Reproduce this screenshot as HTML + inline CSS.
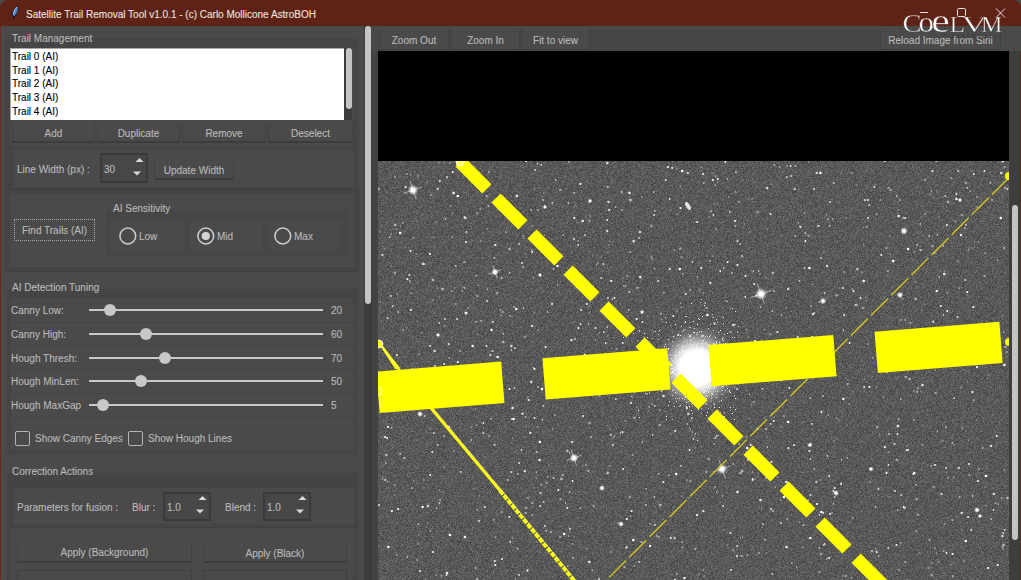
<!DOCTYPE html>
<html><head><meta charset="utf-8">
<style>
*{margin:0;padding:0;box-sizing:border-box}
html,body{width:1021px;height:580px;overflow:hidden;background:#4a4a4a}
body{position:relative;font-family:"Liberation Sans",sans-serif;font-size:11px;color:#bfbfbf}
.a{position:absolute}
.t{position:absolute;white-space:nowrap;line-height:13px;font-size:10px;color:#bababa;-webkit-text-stroke:0.1px currentColor}
</style></head><body>
<div class="a" style="left:0px;top:0px;width:1021px;height:26px;background:#5e2217;border-radius:8px 8px 0 0"></div><div class="t" style="left:26px;top:7.5px;color:#eee2df">Satellite Trail Removal Tool v1.0.1 - (c) Carlo Mollicone AstroBOH</div><svg class="a" style="left:10px;top:5px" width="10" height="15" viewBox="0 0 10 15"><path d="M7.6 0.8 C8.8 3 8.2 7 6 10.2 L4.3 12.2 C2.8 12.3 1.9 11 2.1 8.8 C2.5 6 4.8 2.8 7.6 0.8Z" fill="#1a1a2a"/><path d="M7.4 1.3 C8.2 3.5 7.5 6.8 5.6 9.6 L4.2 11.2 C3.2 11.2 2.7 10.2 2.9 8.6 C3.3 6 5 3.2 7.4 1.3Z" fill="#4f86d8"/><path d="M6.8 2.2 C5.5 3.5 4 5.8 3.4 8.5" stroke="#a8d0f8" stroke-width="1" fill="none"/><path d="M4.3 11.5 L3.2 14.3" stroke="#101018" stroke-width="1.1"/></svg><div class="a" style="left:0px;top:26px;width:1px;height:554px;background:#6b2a20"></div><div class="a" style="left:1019px;top:26px;width:2px;height:25px;background:#4a4a4a"></div><div class="a" style="left:1020px;top:51px;width:1px;height:529px;background:#5b2a22"></div><div class="a" style="left:1px;top:26px;width:363px;height:554px;background:#4a4a4a"></div><div class="a" style="left:364px;top:26px;width:9px;height:554px;background:#3c3c3c"></div><div class="a" style="left:365px;top:26px;width:6px;height:278px;background:#c4c4c4;border-radius:3px"></div><div class="a" style="left:371px;top:26px;width:7px;height:25px;background:#484848"></div><div class="a" style="left:372px;top:51px;width:6px;height:529px;background:#434343"></div><div class="a" style="left:5px;top:38px;width:353px;height:152px;background:repeating-conic-gradient(#3f3f3f 0 25%,#4b4b4b 0 50%) 0 0/2px 2px"></div><div class="a" style="left:10px;top:48px;width:343px;height:137px;background:#4a4a4a"></div><div class="t" style="left:12px;top:31.5px;">Trail Management</div><div class="a" style="left:10px;top:48px;width:335px;height:72px;background:#fff;border-top:1px solid #a8a8a8;border-left:1px solid #a8a8a8"></div><div class="a" style="left:344px;top:48px;width:8px;height:72px;background:#3c3c3c"></div><div class="a" style="left:346px;top:48px;width:6px;height:61px;background:#c4c4c4;border-radius:3px"></div><div class="t" style="left:12px;top:50.0px;color:#000">Trail 0 (AI)</div><div class="t" style="left:12px;top:63.7px;color:#000">Trail 1 (AI)</div><div class="t" style="left:12px;top:77.4px;color:#000">Trail 2 (AI)</div><div class="t" style="left:12px;top:91.1px;color:#000">Trail 3 (AI)</div><div class="t" style="left:12px;top:104.8px;color:#000">Trail 4 (AI)</div><div class="a" style="left:12px;top:123px;width:83px;height:20px;border:1px solid #424242;border-top:0;border-bottom:2px solid #3c3c3c;background:#4a4a4a"></div><div class="t" style="left:12px;top:127px;width:83px;text-align:center;">Add</div><div class="a" style="left:97px;top:123px;width:83px;height:20px;border:1px solid #424242;border-top:0;border-bottom:2px solid #3c3c3c;background:#4a4a4a"></div><div class="t" style="left:97px;top:127px;width:83px;text-align:center;">Duplicate</div><div class="a" style="left:182px;top:123px;width:84px;height:20px;border:1px solid #424242;border-top:0;border-bottom:2px solid #3c3c3c;background:#4a4a4a"></div><div class="t" style="left:182px;top:127px;width:84px;text-align:center;">Remove</div><div class="a" style="left:268px;top:123px;width:85px;height:20px;border:1px solid #424242;border-top:0;border-bottom:2px solid #3c3c3c;background:#4a4a4a"></div><div class="t" style="left:268px;top:127px;width:85px;text-align:center;">Deselect</div><div class="a" style="left:11px;top:147px;width:346px;height:43px;background:repeating-conic-gradient(#3f3f3f 0 25%,#4b4b4b 0 50%) 0 0/2px 2px;box-shadow:0 0 0 1px #404040"></div><div class="a" style="left:14px;top:150px;width:340px;height:37px;background:#4a4a4a"></div><div class="t" style="left:17px;top:163px;">Line Width (px) :</div><div class="a" style="left:100px;top:153px;width:48px;height:30px;border:2px solid #3a3a3a;background:#474747"></div><div class="t" style="left:104px;top:163px;">30</div><svg class="a" style="left:130px;top:156px" width="16" height="22"><path d="M5.5 6 L9.5 2 L13.5 6Z" fill="#d8d8d8"/><path d="M3 15.5 L7 19.5 L11 15.5Z" fill="#d8d8d8"/></svg><div class="a" style="left:154px;top:160px;width:80px;height:20px;border:1px solid #424242;border-top:0;border-bottom:2px solid #3c3c3c;background:#4a4a4a"></div><div class="t" style="left:154px;top:164px;width:80px;text-align:center;">Update Width</div><div class="a" style="left:6px;top:190px;width:352px;height:81px;background:repeating-conic-gradient(#3f3f3f 0 25%,#4b4b4b 0 50%) 0 0/2px 2px;box-shadow:0 0 0 1px #404040"></div><div class="a" style="left:10px;top:194px;width:344px;height:73px;background:#4a4a4a"></div><div class="a" style="left:14px;top:219px;width:81px;height:22px;border:1px dotted #a8a8a8"></div><div class="t" style="left:14px;top:224px;width:81px;text-align:center;">Find Trails (AI)</div><div class="a" style="left:106px;top:210px;width:241px;height:47px;background:#464646"></div><div class="a" style="left:111px;top:221px;width:73px;height:29px;background:#4a4a4a"></div><div class="a" style="left:190px;top:221px;width:72px;height:29px;background:#4a4a4a"></div><div class="a" style="left:268px;top:221px;width:73px;height:29px;background:#4a4a4a"></div><div class="t" style="left:113px;top:202px;">AI Sensitivity</div><svg class="a" style="left:117.5px;top:227px" width="19" height="19"><circle cx="9.8" cy="9" r="7.9" fill="none" stroke="#cfcfcf" stroke-width="1.5"/></svg><div class="t" style="left:139px;top:230px;">Low</div><svg class="a" style="left:195.5px;top:227px" width="19" height="19"><circle cx="9.8" cy="9" r="7.9" fill="none" stroke="#cfcfcf" stroke-width="1.5"/><circle cx="9.8" cy="9" r="4.1" fill="#d4d4d4"/></svg><div class="t" style="left:217px;top:230px;">Mid</div><svg class="a" style="left:272.5px;top:227px" width="19" height="19"><circle cx="9.8" cy="9" r="7.9" fill="none" stroke="#cfcfcf" stroke-width="1.5"/></svg><div class="t" style="left:294px;top:230px;">Max</div><div class="a" style="left:6px;top:289px;width:352px;height:166px;background:repeating-conic-gradient(#3f3f3f 0 25%,#4b4b4b 0 50%) 0 0/2px 2px"></div><div class="a" style="left:11px;top:298px;width:342px;height:152px;background:#4a4a4a"></div><div class="t" style="left:12px;top:281px;">AI Detection Tuning</div><div class="t" style="left:11px;top:304.0px;">Canny Low:</div><div class="a" style="left:89px;top:309px;width:234px;height:2px;background:#c8c8c8"></div><div class="a" style="left:104px;top:304.0px;width:12px;height:12px;border-radius:6px;background:#c8c8c8"></div><div class="t" style="left:331px;top:304.0px;">20</div><div class="t" style="left:11px;top:327.8px;">Canny High:</div><div class="a" style="left:89px;top:333px;width:234px;height:2px;background:#c8c8c8"></div><div class="a" style="left:140px;top:327.8px;width:12px;height:12px;border-radius:6px;background:#c8c8c8"></div><div class="t" style="left:331px;top:327.8px;">60</div><div class="t" style="left:11px;top:351.6px;">Hough Thresh:</div><div class="a" style="left:89px;top:357px;width:234px;height:2px;background:#c8c8c8"></div><div class="a" style="left:159px;top:351.6px;width:12px;height:12px;border-radius:6px;background:#c8c8c8"></div><div class="t" style="left:331px;top:351.6px;">70</div><div class="t" style="left:11px;top:375.4px;">Hough MinLen:</div><div class="a" style="left:89px;top:380px;width:234px;height:2px;background:#c8c8c8"></div><div class="a" style="left:135px;top:375.4px;width:12px;height:12px;border-radius:6px;background:#c8c8c8"></div><div class="t" style="left:331px;top:375.4px;">50</div><div class="t" style="left:11px;top:399.2px;">Hough MaxGap</div><div class="a" style="left:89px;top:404px;width:234px;height:2px;background:#c8c8c8"></div><div class="a" style="left:97px;top:399.2px;width:12px;height:12px;border-radius:6px;background:#c8c8c8"></div><div class="t" style="left:331px;top:399.2px;">5</div><div class="a" style="left:11px;top:322px;width:342px;height:1px;background:#444444"></div><div class="a" style="left:11px;top:345px;width:342px;height:1px;background:#444444"></div><div class="a" style="left:11px;top:369px;width:342px;height:1px;background:#444444"></div><div class="a" style="left:11px;top:393px;width:342px;height:1px;background:#444444"></div><div class="a" style="left:11px;top:417px;width:342px;height:1px;background:#444444"></div><div class="a" style="left:15px;top:431px;width:15px;height:15px;border:1.5px solid #b4b4b4;border-radius:2px"></div><div class="t" style="left:35px;top:432px;">Show Canny Edges</div><div class="a" style="left:128px;top:431px;width:15px;height:15px;border:1.5px solid #b4b4b4;border-radius:2px"></div><div class="t" style="left:148px;top:432px;">Show Hough Lines</div><div class="a" style="left:6px;top:473px;width:352px;height:120px;background:repeating-conic-gradient(#3f3f3f 0 25%,#4b4b4b 0 50%) 0 0/2px 2px"></div><div class="a" style="left:11px;top:484px;width:342px;height:104px;background:#4a4a4a"></div><div class="t" style="left:12px;top:465px;">Correction Actions</div><div class="a" style="left:11px;top:485px;width:346px;height:42px;background:repeating-conic-gradient(#3f3f3f 0 25%,#4b4b4b 0 50%) 0 0/2px 2px;box-shadow:0 0 0 1px #404040"></div><div class="a" style="left:14px;top:488px;width:340px;height:36px;background:#4a4a4a"></div><div class="t" style="left:17px;top:501px;">Parameters for fusion :</div><div class="t" style="left:132px;top:501px;">Blur :</div><div class="a" style="left:163px;top:492px;width:48px;height:29px;border:2px solid #3a3a3a;background:#474747"></div><div class="t" style="left:167px;top:501px;">1.0</div><svg class="a" style="left:193px;top:494px" width="16" height="22"><path d="M5.5 6 L9.5 2 L13.5 6Z" fill="#d8d8d8"/><path d="M3 15.5 L7 19.5 L11 15.5Z" fill="#d8d8d8"/></svg><div class="t" style="left:225px;top:501px;">Blend :</div><div class="a" style="left:263px;top:492px;width:48px;height:29px;border:2px solid #3a3a3a;background:#474747"></div><div class="t" style="left:267px;top:501px;">1.0</div><svg class="a" style="left:293px;top:494px" width="16" height="22"><path d="M5.5 6 L9.5 2 L13.5 6Z" fill="#d8d8d8"/><path d="M3 15.5 L7 19.5 L11 15.5Z" fill="#d8d8d8"/></svg><div class="a" style="left:17px;top:541px;width:175px;height:22px;border:1px solid #424242;border-top:0;border-bottom:2px solid #3c3c3c;background:#4a4a4a"></div><div class="t" style="left:17px;top:546px;width:175px;text-align:center;">Apply (Background)</div><div class="a" style="left:203px;top:543px;width:144px;height:20px;border:1px solid #424242;border-top:0;border-bottom:2px solid #3c3c3c;background:#4a4a4a"></div><div class="t" style="left:203px;top:547px;width:144px;text-align:center;">Apply (Black)</div><div class="a" style="left:17px;top:570px;width:175px;height:12px;border:1px solid #3f3f3f"></div><div class="a" style="left:203px;top:570px;width:144px;height:12px;border:1px solid #3f3f3f"></div><div class="a" style="left:378px;top:26px;width:641px;height:25px;background:#4a4a4a"></div><div class="a" style="left:379px;top:29px;width:622px;height:22px;background:repeating-conic-gradient(#3f3f3f 0 25%,#4b4b4b 0 50%) 0 0/2px 2px"></div><div class="a" style="left:379px;top:29px;width:70px;height:21px;border:1px solid #424242;border-top:0;border-bottom:1px solid #404040;background:#4a4a4a"></div><div class="t" style="left:379px;top:34px;width:70px;text-align:center;">Zoom Out</div><div class="a" style="left:451px;top:29px;width:69px;height:21px;border:1px solid #424242;border-top:0;border-bottom:1px solid #404040;background:#4a4a4a"></div><div class="t" style="left:451px;top:34px;width:69px;text-align:center;">Zoom In</div><div class="a" style="left:521px;top:29px;width:69px;height:21px;border:1px solid #424242;border-top:0;border-bottom:1px solid #404040;background:#4a4a4a"></div><div class="t" style="left:521px;top:34px;width:69px;text-align:center;">Fit to view</div><div class="a" style="left:880px;top:29px;width:121px;height:21px;border:1px solid #424242;border-top:0;border-bottom:1px solid #404040;background:#4a4a4a"></div><div class="t" style="left:880px;top:34px;width:121px;text-align:center;">Reload Image from Siril</div><div class="a" style="left:378px;top:51px;width:631px;height:110px;background:#000"></div><div class="a" style="left:1009px;top:51px;width:11px;height:529px;background:#3e3e3e"></div><div class="a" style="left:1012px;top:205px;width:6px;height:335px;background:#c4c4c4;border-radius:3px"></div><svg class="a" style="left:378px;top:161px" width="631" height="419" viewBox="378 161 631 419"><defs><radialGradient id="gal" cx="0.5" cy="0.5" r="0.5"><stop offset="0" stop-color="#fff"/><stop offset="0.38" stop-color="#fff"/><stop offset="0.55" stop-color="#f0f0f0" stop-opacity="0.7"/><stop offset="0.8" stop-color="#b0b0b0" stop-opacity="0.22"/><stop offset="1" stop-color="#808080" stop-opacity="0"/></radialGradient><radialGradient id="st" cx="0.5" cy="0.5" r="0.5"><stop offset="0" stop-color="#fff"/><stop offset="0.4" stop-color="#fff" stop-opacity="0.9"/><stop offset="1" stop-color="#fff" stop-opacity="0"/></radialGradient></defs><filter id="nz" x="0" y="0" width="1" height="1" filterUnits="objectBoundingBox"><feTurbulence type="fractalNoise" baseFrequency="1.8" numOctaves="1" seed="5" result="t"/><feColorMatrix in="t" type="matrix" values="0 0 0 0 1  0 0 0 0 1  0 0 0 0 1  0.6 0 0 0 -0.2"/></filter><rect x="378" y="161" width="631" height="419" fill="#464646"/><rect x="378" y="161" width="631" height="419" fill="#fff" filter="url(#nz)"/><path fill="#fff" fill-opacity="0.9" d="M662.2 396a1.3 1.3 0 1 0 2.6 0a1.3 1.3 0 1 0 -2.6 0M809.0 538a1.3 1.3 0 1 0 2.6 0a1.3 1.3 0 1 0 -2.6 0M538.3 460a1.3 1.3 0 1 0 2.6 0a1.3 1.3 0 1 0 -2.6 0M955.2 199a1.3 1.3 0 1 0 2.6 0a1.3 1.3 0 1 0 -2.6 0M490.2 330a1.3 1.3 0 1 0 2.6 0a1.3 1.3 0 1 0 -2.6 0M785.1 482a1.3 1.3 0 1 0 2.6 0a1.3 1.3 0 1 0 -2.6 0M683.2 578a1.3 1.3 0 1 0 2.6 0a1.3 1.3 0 1 0 -2.6 0M581.4 221a1.3 1.3 0 1 0 2.6 0a1.3 1.3 0 1 0 -2.6 0M588.0 562a1.3 1.3 0 1 0 2.6 0a1.3 1.3 0 1 0 -2.6 0M959.7 235a1.3 1.3 0 1 0 2.6 0a1.3 1.3 0 1 0 -2.6 0M638.9 277a1.3 1.3 0 1 0 2.6 0a1.3 1.3 0 1 0 -2.6 0M935.5 291a1.3 1.3 0 1 0 2.6 0a1.3 1.3 0 1 0 -2.6 0M967.4 363a1.3 1.3 0 1 0 2.6 0a1.3 1.3 0 1 0 -2.6 0M663.2 386a1.3 1.3 0 1 0 2.6 0a1.3 1.3 0 1 0 -2.6 0M423.1 394a1.3 1.3 0 1 0 2.6 0a1.3 1.3 0 1 0 -2.6 0M515.6 196a1.3 1.3 0 1 0 2.6 0a1.3 1.3 0 1 0 -2.6 0M511.3 408a1.3 1.3 0 1 0 2.6 0a1.3 1.3 0 1 0 -2.6 0M445.7 573a1.3 1.3 0 1 0 2.6 0a1.3 1.3 0 1 0 -2.6 0M732.1 325a1.3 1.3 0 1 0 2.6 0a1.3 1.3 0 1 0 -2.6 0M785.2 547a1.3 1.3 0 1 0 2.6 0a1.3 1.3 0 1 0 -2.6 0M496.3 357a1.3 1.3 0 1 0 2.6 0a1.3 1.3 0 1 0 -2.6 0M421.3 507a1.3 1.3 0 1 0 2.6 0a1.3 1.3 0 1 0 -2.6 0M648.8 546a1.3 1.3 0 1 0 2.6 0a1.3 1.3 0 1 0 -2.6 0M736.2 492a1.3 1.3 0 1 0 2.6 0a1.3 1.3 0 1 0 -2.6 0M628.2 193a1.3 1.3 0 1 0 2.6 0a1.3 1.3 0 1 0 -2.6 0M943.0 274a1.3 1.3 0 1 0 2.6 0a1.3 1.3 0 1 0 -2.6 0M447.7 427a1.3 1.3 0 1 0 2.6 0a1.3 1.3 0 1 0 -2.6 0M759.2 500a1.3 1.3 0 1 0 2.6 0a1.3 1.3 0 1 0 -2.6 0M897.4 216a1.3 1.3 0 1 0 2.6 0a1.3 1.3 0 1 0 -2.6 0M514.9 309a1.3 1.3 0 1 0 2.6 0a1.3 1.3 0 1 0 -2.6 0M896.6 426a1.3 1.3 0 1 0 2.6 0a1.3 1.3 0 1 0 -2.6 0"/><path fill="#fff" fill-opacity="0.6" d="M662.4 519a0.7 0.7 0 1 0 1.4 0a0.7 0.7 0 1 0 -1.4 0M569.2 532a0.7 0.7 0 1 0 1.4 0a0.7 0.7 0 1 0 -1.4 0M496.9 209a0.7 0.7 0 1 0 1.4 0a0.7 0.7 0 1 0 -1.4 0M776.8 477a0.7 0.7 0 1 0 1.4 0a0.7 0.7 0 1 0 -1.4 0M475.0 409a0.7 0.7 0 1 0 1.4 0a0.7 0.7 0 1 0 -1.4 0M643.3 337a0.7 0.7 0 1 0 1.4 0a0.7 0.7 0 1 0 -1.4 0M838.4 288a0.7 0.7 0 1 0 1.4 0a0.7 0.7 0 1 0 -1.4 0M727.9 197a0.7 0.7 0 1 0 1.4 0a0.7 0.7 0 1 0 -1.4 0M702.8 570a0.7 0.7 0 1 0 1.4 0a0.7 0.7 0 1 0 -1.4 0M686.2 480a0.7 0.7 0 1 0 1.4 0a0.7 0.7 0 1 0 -1.4 0M379.8 302a0.7 0.7 0 1 0 1.4 0a0.7 0.7 0 1 0 -1.4 0M752.2 272a0.7 0.7 0 1 0 1.4 0a0.7 0.7 0 1 0 -1.4 0M438.9 490a0.7 0.7 0 1 0 1.4 0a0.7 0.7 0 1 0 -1.4 0M964.8 335a0.7 0.7 0 1 0 1.4 0a0.7 0.7 0 1 0 -1.4 0M954.4 221a0.7 0.7 0 1 0 1.4 0a0.7 0.7 0 1 0 -1.4 0M974.0 242a0.7 0.7 0 1 0 1.4 0a0.7 0.7 0 1 0 -1.4 0M934.8 370a0.7 0.7 0 1 0 1.4 0a0.7 0.7 0 1 0 -1.4 0M838.2 420a0.7 0.7 0 1 0 1.4 0a0.7 0.7 0 1 0 -1.4 0M473.2 489a0.7 0.7 0 1 0 1.4 0a0.7 0.7 0 1 0 -1.4 0M379.4 232a0.7 0.7 0 1 0 1.4 0a0.7 0.7 0 1 0 -1.4 0M607.3 316a0.7 0.7 0 1 0 1.4 0a0.7 0.7 0 1 0 -1.4 0M386.9 482a0.7 0.7 0 1 0 1.4 0a0.7 0.7 0 1 0 -1.4 0M533.6 189a0.7 0.7 0 1 0 1.4 0a0.7 0.7 0 1 0 -1.4 0M651.7 259a0.7 0.7 0 1 0 1.4 0a0.7 0.7 0 1 0 -1.4 0M960.5 363a0.7 0.7 0 1 0 1.4 0a0.7 0.7 0 1 0 -1.4 0M760.4 341a0.7 0.7 0 1 0 1.4 0a0.7 0.7 0 1 0 -1.4 0M588.5 313a0.7 0.7 0 1 0 1.4 0a0.7 0.7 0 1 0 -1.4 0"/><path fill="#fff" fill-opacity="0.6" d="M884.3 360a1.0 1.0 0 1 0 2.0 0a1.0 1.0 0 1 0 -2.0 0M897.7 419a1.0 1.0 0 1 0 2.0 0a1.0 1.0 0 1 0 -2.0 0M513.4 388a1.0 1.0 0 1 0 2.0 0a1.0 1.0 0 1 0 -2.0 0M590.2 437a1.0 1.0 0 1 0 2.0 0a1.0 1.0 0 1 0 -2.0 0M809.3 398a1.0 1.0 0 1 0 2.0 0a1.0 1.0 0 1 0 -2.0 0M501.7 312a1.0 1.0 0 1 0 2.0 0a1.0 1.0 0 1 0 -2.0 0M755.6 359a1.0 1.0 0 1 0 2.0 0a1.0 1.0 0 1 0 -2.0 0M702.6 183a1.0 1.0 0 1 0 2.0 0a1.0 1.0 0 1 0 -2.0 0M592.6 506a1.0 1.0 0 1 0 2.0 0a1.0 1.0 0 1 0 -2.0 0M874.6 507a1.0 1.0 0 1 0 2.0 0a1.0 1.0 0 1 0 -2.0 0M524.6 417a1.0 1.0 0 1 0 2.0 0a1.0 1.0 0 1 0 -2.0 0M739.3 244a1.0 1.0 0 1 0 2.0 0a1.0 1.0 0 1 0 -2.0 0M627.7 310a1.0 1.0 0 1 0 2.0 0a1.0 1.0 0 1 0 -2.0 0M846.7 384a1.0 1.0 0 1 0 2.0 0a1.0 1.0 0 1 0 -2.0 0M522.1 267a1.0 1.0 0 1 0 2.0 0a1.0 1.0 0 1 0 -2.0 0M571.9 558a1.0 1.0 0 1 0 2.0 0a1.0 1.0 0 1 0 -2.0 0M574.0 339a1.0 1.0 0 1 0 2.0 0a1.0 1.0 0 1 0 -2.0 0M794.5 166a1.0 1.0 0 1 0 2.0 0a1.0 1.0 0 1 0 -2.0 0M474.7 568a1.0 1.0 0 1 0 2.0 0a1.0 1.0 0 1 0 -2.0 0M942.2 246a1.0 1.0 0 1 0 2.0 0a1.0 1.0 0 1 0 -2.0 0M399.1 454a1.0 1.0 0 1 0 2.0 0a1.0 1.0 0 1 0 -2.0 0M798.4 281a1.0 1.0 0 1 0 2.0 0a1.0 1.0 0 1 0 -2.0 0M820.0 554a1.0 1.0 0 1 0 2.0 0a1.0 1.0 0 1 0 -2.0 0M822.0 396a1.0 1.0 0 1 0 2.0 0a1.0 1.0 0 1 0 -2.0 0M772.2 511a1.0 1.0 0 1 0 2.0 0a1.0 1.0 0 1 0 -2.0 0M640.5 542a1.0 1.0 0 1 0 2.0 0a1.0 1.0 0 1 0 -2.0 0M652.7 192a1.0 1.0 0 1 0 2.0 0a1.0 1.0 0 1 0 -2.0 0M495.0 373a1.0 1.0 0 1 0 2.0 0a1.0 1.0 0 1 0 -2.0 0M934.8 393a1.0 1.0 0 1 0 2.0 0a1.0 1.0 0 1 0 -2.0 0M545.6 483a1.0 1.0 0 1 0 2.0 0a1.0 1.0 0 1 0 -2.0 0M460.7 164a1.0 1.0 0 1 0 2.0 0a1.0 1.0 0 1 0 -2.0 0M771.2 574a1.0 1.0 0 1 0 2.0 0a1.0 1.0 0 1 0 -2.0 0M888.3 363a1.0 1.0 0 1 0 2.0 0a1.0 1.0 0 1 0 -2.0 0M379.3 393a1.0 1.0 0 1 0 2.0 0a1.0 1.0 0 1 0 -2.0 0M761.9 524a1.0 1.0 0 1 0 2.0 0a1.0 1.0 0 1 0 -2.0 0M729.6 332a1.0 1.0 0 1 0 2.0 0a1.0 1.0 0 1 0 -2.0 0M757.9 553a1.0 1.0 0 1 0 2.0 0a1.0 1.0 0 1 0 -2.0 0M696.7 381a1.0 1.0 0 1 0 2.0 0a1.0 1.0 0 1 0 -2.0 0M788.0 350a1.0 1.0 0 1 0 2.0 0a1.0 1.0 0 1 0 -2.0 0M1005.7 352a1.0 1.0 0 1 0 2.0 0a1.0 1.0 0 1 0 -2.0 0M769.5 347a1.0 1.0 0 1 0 2.0 0a1.0 1.0 0 1 0 -2.0 0M888.1 434a1.0 1.0 0 1 0 2.0 0a1.0 1.0 0 1 0 -2.0 0"/><path fill="#fff" fill-opacity="1.0" d="M436.8 288a0.6 0.6 0 1 0 1.2 0a0.6 0.6 0 1 0 -1.2 0M888.3 452a0.6 0.6 0 1 0 1.2 0a0.6 0.6 0 1 0 -1.2 0M996.0 328a0.6 0.6 0 1 0 1.2 0a0.6 0.6 0 1 0 -1.2 0M655.4 512a0.6 0.6 0 1 0 1.2 0a0.6 0.6 0 1 0 -1.2 0M443.6 467a0.6 0.6 0 1 0 1.2 0a0.6 0.6 0 1 0 -1.2 0M1002.3 549a0.6 0.6 0 1 0 1.2 0a0.6 0.6 0 1 0 -1.2 0M780.0 500a0.6 0.6 0 1 0 1.2 0a0.6 0.6 0 1 0 -1.2 0M535.7 478a0.6 0.6 0 1 0 1.2 0a0.6 0.6 0 1 0 -1.2 0M889.7 254a0.6 0.6 0 1 0 1.2 0a0.6 0.6 0 1 0 -1.2 0M953.0 477a0.6 0.6 0 1 0 1.2 0a0.6 0.6 0 1 0 -1.2 0M898.0 210a0.6 0.6 0 1 0 1.2 0a0.6 0.6 0 1 0 -1.2 0M612.5 438a0.6 0.6 0 1 0 1.2 0a0.6 0.6 0 1 0 -1.2 0M495.0 537a0.6 0.6 0 1 0 1.2 0a0.6 0.6 0 1 0 -1.2 0M390.5 234a0.6 0.6 0 1 0 1.2 0a0.6 0.6 0 1 0 -1.2 0M622.3 278a0.6 0.6 0 1 0 1.2 0a0.6 0.6 0 1 0 -1.2 0M634.0 566a0.6 0.6 0 1 0 1.2 0a0.6 0.6 0 1 0 -1.2 0M412.8 238a0.6 0.6 0 1 0 1.2 0a0.6 0.6 0 1 0 -1.2 0M919.2 553a0.6 0.6 0 1 0 1.2 0a0.6 0.6 0 1 0 -1.2 0M876.1 387a0.6 0.6 0 1 0 1.2 0a0.6 0.6 0 1 0 -1.2 0M747.3 337a0.6 0.6 0 1 0 1.2 0a0.6 0.6 0 1 0 -1.2 0M432.5 237a0.6 0.6 0 1 0 1.2 0a0.6 0.6 0 1 0 -1.2 0M825.7 215a0.6 0.6 0 1 0 1.2 0a0.6 0.6 0 1 0 -1.2 0M594.8 340a0.6 0.6 0 1 0 1.2 0a0.6 0.6 0 1 0 -1.2 0M603.6 386a0.6 0.6 0 1 0 1.2 0a0.6 0.6 0 1 0 -1.2 0M703.5 576a0.6 0.6 0 1 0 1.2 0a0.6 0.6 0 1 0 -1.2 0M765.6 553a0.6 0.6 0 1 0 1.2 0a0.6 0.6 0 1 0 -1.2 0M636.3 407a0.6 0.6 0 1 0 1.2 0a0.6 0.6 0 1 0 -1.2 0M657.6 399a0.6 0.6 0 1 0 1.2 0a0.6 0.6 0 1 0 -1.2 0M635.7 354a0.6 0.6 0 1 0 1.2 0a0.6 0.6 0 1 0 -1.2 0M680.0 303a0.6 0.6 0 1 0 1.2 0a0.6 0.6 0 1 0 -1.2 0M953.5 445a0.6 0.6 0 1 0 1.2 0a0.6 0.6 0 1 0 -1.2 0M727.1 545a0.6 0.6 0 1 0 1.2 0a0.6 0.6 0 1 0 -1.2 0M712.3 256a0.6 0.6 0 1 0 1.2 0a0.6 0.6 0 1 0 -1.2 0M596.1 265a0.6 0.6 0 1 0 1.2 0a0.6 0.6 0 1 0 -1.2 0M685.1 359a0.6 0.6 0 1 0 1.2 0a0.6 0.6 0 1 0 -1.2 0M997.6 504a0.6 0.6 0 1 0 1.2 0a0.6 0.6 0 1 0 -1.2 0M435.7 575a0.6 0.6 0 1 0 1.2 0a0.6 0.6 0 1 0 -1.2 0M608.4 245a0.6 0.6 0 1 0 1.2 0a0.6 0.6 0 1 0 -1.2 0M740.0 538a0.6 0.6 0 1 0 1.2 0a0.6 0.6 0 1 0 -1.2 0"/><path fill="#fff" fill-opacity="1.0" d="M996.7 565a1.1 1.1 0 1 0 2.2 0a1.1 1.1 0 1 0 -2.2 0M670.3 365a1.1 1.1 0 1 0 2.2 0a1.1 1.1 0 1 0 -2.2 0M625.7 519a1.1 1.1 0 1 0 2.2 0a1.1 1.1 0 1 0 -2.2 0M534.3 241a1.1 1.1 0 1 0 2.2 0a1.1 1.1 0 1 0 -2.2 0M456.7 362a1.1 1.1 0 1 0 2.2 0a1.1 1.1 0 1 0 -2.2 0M995.6 436a1.1 1.1 0 1 0 2.2 0a1.1 1.1 0 1 0 -2.2 0M673.8 580a1.1 1.1 0 1 0 2.2 0a1.1 1.1 0 1 0 -2.2 0M709.2 283a1.1 1.1 0 1 0 2.2 0a1.1 1.1 0 1 0 -2.2 0M770.3 462a1.1 1.1 0 1 0 2.2 0a1.1 1.1 0 1 0 -2.2 0M577.3 328a1.1 1.1 0 1 0 2.2 0a1.1 1.1 0 1 0 -2.2 0M951.5 554a1.1 1.1 0 1 0 2.2 0a1.1 1.1 0 1 0 -2.2 0M579.3 184a1.1 1.1 0 1 0 2.2 0a1.1 1.1 0 1 0 -2.2 0M387.0 427a1.1 1.1 0 1 0 2.2 0a1.1 1.1 0 1 0 -2.2 0M696.0 515a1.1 1.1 0 1 0 2.2 0a1.1 1.1 0 1 0 -2.2 0M815.9 504a1.1 1.1 0 1 0 2.2 0a1.1 1.1 0 1 0 -2.2 0M533.5 369a1.1 1.1 0 1 0 2.2 0a1.1 1.1 0 1 0 -2.2 0M990.0 446a1.1 1.1 0 1 0 2.2 0a1.1 1.1 0 1 0 -2.2 0M610.1 281a1.1 1.1 0 1 0 2.2 0a1.1 1.1 0 1 0 -2.2 0M395.6 400a1.1 1.1 0 1 0 2.2 0a1.1 1.1 0 1 0 -2.2 0M685.9 408a1.1 1.1 0 1 0 2.2 0a1.1 1.1 0 1 0 -2.2 0M397.1 509a1.1 1.1 0 1 0 2.2 0a1.1 1.1 0 1 0 -2.2 0M494.2 565a1.1 1.1 0 1 0 2.2 0a1.1 1.1 0 1 0 -2.2 0M976.0 367a1.1 1.1 0 1 0 2.2 0a1.1 1.1 0 1 0 -2.2 0M679.4 208a1.1 1.1 0 1 0 2.2 0a1.1 1.1 0 1 0 -2.2 0M677.2 335a1.1 1.1 0 1 0 2.2 0a1.1 1.1 0 1 0 -2.2 0M390.8 511a1.1 1.1 0 1 0 2.2 0a1.1 1.1 0 1 0 -2.2 0M881.5 347a1.1 1.1 0 1 0 2.2 0a1.1 1.1 0 1 0 -2.2 0M384.1 437a1.1 1.1 0 1 0 2.2 0a1.1 1.1 0 1 0 -2.2 0M635.5 319a1.1 1.1 0 1 0 2.2 0a1.1 1.1 0 1 0 -2.2 0M769.5 478a1.1 1.1 0 1 0 2.2 0a1.1 1.1 0 1 0 -2.2 0M885.4 473a1.1 1.1 0 1 0 2.2 0a1.1 1.1 0 1 0 -2.2 0M529.1 433a1.1 1.1 0 1 0 2.2 0a1.1 1.1 0 1 0 -2.2 0M421.9 264a1.1 1.1 0 1 0 2.2 0a1.1 1.1 0 1 0 -2.2 0M987.0 568a1.1 1.1 0 1 0 2.2 0a1.1 1.1 0 1 0 -2.2 0M760.0 295a1.1 1.1 0 1 0 2.2 0a1.1 1.1 0 1 0 -2.2 0M766.1 188a1.1 1.1 0 1 0 2.2 0a1.1 1.1 0 1 0 -2.2 0M494.2 245a1.1 1.1 0 1 0 2.2 0a1.1 1.1 0 1 0 -2.2 0M753.9 341a1.1 1.1 0 1 0 2.2 0a1.1 1.1 0 1 0 -2.2 0M689.0 336a1.1 1.1 0 1 0 2.2 0a1.1 1.1 0 1 0 -2.2 0M972.3 307a1.1 1.1 0 1 0 2.2 0a1.1 1.1 0 1 0 -2.2 0M652.3 377a1.1 1.1 0 1 0 2.2 0a1.1 1.1 0 1 0 -2.2 0"/><path fill="#fff" fill-opacity="1.0" d="M786.9 422a1.3 1.3 0 1 0 2.6 0a1.3 1.3 0 1 0 -2.6 0M1001.4 161a1.3 1.3 0 1 0 2.6 0a1.3 1.3 0 1 0 -2.6 0M779.8 380a1.3 1.3 0 1 0 2.6 0a1.3 1.3 0 1 0 -2.6 0M538.6 442a1.3 1.3 0 1 0 2.6 0a1.3 1.3 0 1 0 -2.6 0M680.9 171a1.3 1.3 0 1 0 2.6 0a1.3 1.3 0 1 0 -2.6 0M448.6 535a1.3 1.3 0 1 0 2.6 0a1.3 1.3 0 1 0 -2.6 0M417.1 390a1.3 1.3 0 1 0 2.6 0a1.3 1.3 0 1 0 -2.6 0M556.2 266a1.3 1.3 0 1 0 2.6 0a1.3 1.3 0 1 0 -2.6 0M540.6 389a1.3 1.3 0 1 0 2.6 0a1.3 1.3 0 1 0 -2.6 0M842.0 399a1.3 1.3 0 1 0 2.6 0a1.3 1.3 0 1 0 -2.6 0M678.5 269a1.3 1.3 0 1 0 2.6 0a1.3 1.3 0 1 0 -2.6 0M378.9 390a1.3 1.3 0 1 0 2.6 0a1.3 1.3 0 1 0 -2.6 0M632.0 540a1.3 1.3 0 1 0 2.6 0a1.3 1.3 0 1 0 -2.6 0M512.3 419a1.3 1.3 0 1 0 2.6 0a1.3 1.3 0 1 0 -2.6 0M463.6 537a1.3 1.3 0 1 0 2.6 0a1.3 1.3 0 1 0 -2.6 0M906.8 249a1.3 1.3 0 1 0 2.6 0a1.3 1.3 0 1 0 -2.6 0M748.2 355a1.3 1.3 0 1 0 2.6 0a1.3 1.3 0 1 0 -2.6 0M891.7 346a1.3 1.3 0 1 0 2.6 0a1.3 1.3 0 1 0 -2.6 0M387.1 547a1.3 1.3 0 1 0 2.6 0a1.3 1.3 0 1 0 -2.6 0M629.7 370a1.3 1.3 0 1 0 2.6 0a1.3 1.3 0 1 0 -2.6 0M999.5 218a1.3 1.3 0 1 0 2.6 0a1.3 1.3 0 1 0 -2.6 0M819.2 173a1.3 1.3 0 1 0 2.6 0a1.3 1.3 0 1 0 -2.6 0M913.1 473a1.3 1.3 0 1 0 2.6 0a1.3 1.3 0 1 0 -2.6 0M706.0 315a1.3 1.3 0 1 0 2.6 0a1.3 1.3 0 1 0 -2.6 0M966.9 338a1.3 1.3 0 1 0 2.6 0a1.3 1.3 0 1 0 -2.6 0M891.9 261a1.3 1.3 0 1 0 2.6 0a1.3 1.3 0 1 0 -2.6 0M452.4 193a1.3 1.3 0 1 0 2.6 0a1.3 1.3 0 1 0 -2.6 0M964.5 541a1.3 1.3 0 1 0 2.6 0a1.3 1.3 0 1 0 -2.6 0M674.9 474a1.3 1.3 0 1 0 2.6 0a1.3 1.3 0 1 0 -2.6 0M471.3 346a1.3 1.3 0 1 0 2.6 0a1.3 1.3 0 1 0 -2.6 0M984.6 476a1.3 1.3 0 1 0 2.6 0a1.3 1.3 0 1 0 -2.6 0M456.5 196a1.3 1.3 0 1 0 2.6 0a1.3 1.3 0 1 0 -2.6 0M782.7 497a1.3 1.3 0 1 0 2.6 0a1.3 1.3 0 1 0 -2.6 0M562.9 534a1.3 1.3 0 1 0 2.6 0a1.3 1.3 0 1 0 -2.6 0M398.9 233a1.3 1.3 0 1 0 2.6 0a1.3 1.3 0 1 0 -2.6 0M745.9 448a1.3 1.3 0 1 0 2.6 0a1.3 1.3 0 1 0 -2.6 0M1003.1 365a1.3 1.3 0 1 0 2.6 0a1.3 1.3 0 1 0 -2.6 0M808.1 268a1.3 1.3 0 1 0 2.6 0a1.3 1.3 0 1 0 -2.6 0M623.6 360a1.3 1.3 0 1 0 2.6 0a1.3 1.3 0 1 0 -2.6 0M583.6 355a1.3 1.3 0 1 0 2.6 0a1.3 1.3 0 1 0 -2.6 0M820.1 512a1.3 1.3 0 1 0 2.6 0a1.3 1.3 0 1 0 -2.6 0M862.4 281a1.3 1.3 0 1 0 2.6 0a1.3 1.3 0 1 0 -2.6 0"/><path fill="#fff" fill-opacity="1.0" d="M417.2 176a0.7 0.7 0 1 0 1.4 0a0.7 0.7 0 1 0 -1.4 0M823.9 293a0.7 0.7 0 1 0 1.4 0a0.7 0.7 0 1 0 -1.4 0M621.0 192a0.7 0.7 0 1 0 1.4 0a0.7 0.7 0 1 0 -1.4 0M773.1 291a0.7 0.7 0 1 0 1.4 0a0.7 0.7 0 1 0 -1.4 0M942.9 315a0.7 0.7 0 1 0 1.4 0a0.7 0.7 0 1 0 -1.4 0M922.4 385a0.7 0.7 0 1 0 1.4 0a0.7 0.7 0 1 0 -1.4 0M394.3 177a0.7 0.7 0 1 0 1.4 0a0.7 0.7 0 1 0 -1.4 0M899.1 200a0.7 0.7 0 1 0 1.4 0a0.7 0.7 0 1 0 -1.4 0M559.4 537a0.7 0.7 0 1 0 1.4 0a0.7 0.7 0 1 0 -1.4 0M589.5 216a0.7 0.7 0 1 0 1.4 0a0.7 0.7 0 1 0 -1.4 0M531.5 515a0.7 0.7 0 1 0 1.4 0a0.7 0.7 0 1 0 -1.4 0M758.0 271a0.7 0.7 0 1 0 1.4 0a0.7 0.7 0 1 0 -1.4 0M513.2 307a0.7 0.7 0 1 0 1.4 0a0.7 0.7 0 1 0 -1.4 0M493.1 520a0.7 0.7 0 1 0 1.4 0a0.7 0.7 0 1 0 -1.4 0M488.3 172a0.7 0.7 0 1 0 1.4 0a0.7 0.7 0 1 0 -1.4 0M930.4 466a0.7 0.7 0 1 0 1.4 0a0.7 0.7 0 1 0 -1.4 0M509.4 316a0.7 0.7 0 1 0 1.4 0a0.7 0.7 0 1 0 -1.4 0M397.7 312a0.7 0.7 0 1 0 1.4 0a0.7 0.7 0 1 0 -1.4 0M766.6 447a0.7 0.7 0 1 0 1.4 0a0.7 0.7 0 1 0 -1.4 0M621.3 210a0.7 0.7 0 1 0 1.4 0a0.7 0.7 0 1 0 -1.4 0M810.3 306a0.7 0.7 0 1 0 1.4 0a0.7 0.7 0 1 0 -1.4 0M651.9 435a0.7 0.7 0 1 0 1.4 0a0.7 0.7 0 1 0 -1.4 0M936.8 235a0.7 0.7 0 1 0 1.4 0a0.7 0.7 0 1 0 -1.4 0M411.2 488a0.7 0.7 0 1 0 1.4 0a0.7 0.7 0 1 0 -1.4 0M434.4 371a0.7 0.7 0 1 0 1.4 0a0.7 0.7 0 1 0 -1.4 0M385.1 463a0.7 0.7 0 1 0 1.4 0a0.7 0.7 0 1 0 -1.4 0M611.6 299a0.7 0.7 0 1 0 1.4 0a0.7 0.7 0 1 0 -1.4 0M783.2 416a0.7 0.7 0 1 0 1.4 0a0.7 0.7 0 1 0 -1.4 0M681.5 542a0.7 0.7 0 1 0 1.4 0a0.7 0.7 0 1 0 -1.4 0M570.1 362a0.7 0.7 0 1 0 1.4 0a0.7 0.7 0 1 0 -1.4 0M444.6 219a0.7 0.7 0 1 0 1.4 0a0.7 0.7 0 1 0 -1.4 0M591.5 570a0.7 0.7 0 1 0 1.4 0a0.7 0.7 0 1 0 -1.4 0M530.5 210a0.7 0.7 0 1 0 1.4 0a0.7 0.7 0 1 0 -1.4 0M508.7 273a0.7 0.7 0 1 0 1.4 0a0.7 0.7 0 1 0 -1.4 0M897.1 510a0.7 0.7 0 1 0 1.4 0a0.7 0.7 0 1 0 -1.4 0M842.7 330a0.7 0.7 0 1 0 1.4 0a0.7 0.7 0 1 0 -1.4 0M470.5 440a0.7 0.7 0 1 0 1.4 0a0.7 0.7 0 1 0 -1.4 0"/><path fill="#fff" fill-opacity="1.0" d="M396.1 355a0.9 0.9 0 1 0 1.8 0a0.9 0.9 0 1 0 -1.8 0M501.1 559a0.9 0.9 0 1 0 1.8 0a0.9 0.9 0 1 0 -1.8 0M972.9 174a0.9 0.9 0 1 0 1.8 0a0.9 0.9 0 1 0 -1.8 0M386.3 438a0.9 0.9 0 1 0 1.8 0a0.9 0.9 0 1 0 -1.8 0M907.1 450a0.9 0.9 0 1 0 1.8 0a0.9 0.9 0 1 0 -1.8 0M549.3 370a0.9 0.9 0 1 0 1.8 0a0.9 0.9 0 1 0 -1.8 0M716.8 179a0.9 0.9 0 1 0 1.8 0a0.9 0.9 0 1 0 -1.8 0M945.6 553a0.9 0.9 0 1 0 1.8 0a0.9 0.9 0 1 0 -1.8 0M621.9 343a0.9 0.9 0 1 0 1.8 0a0.9 0.9 0 1 0 -1.8 0M843.3 315a0.9 0.9 0 1 0 1.8 0a0.9 0.9 0 1 0 -1.8 0M867.1 218a0.9 0.9 0 1 0 1.8 0a0.9 0.9 0 1 0 -1.8 0M755.8 358a0.9 0.9 0 1 0 1.8 0a0.9 0.9 0 1 0 -1.8 0M485.6 346a0.9 0.9 0 1 0 1.8 0a0.9 0.9 0 1 0 -1.8 0M912.3 474a0.9 0.9 0 1 0 1.8 0a0.9 0.9 0 1 0 -1.8 0M773.0 421a0.9 0.9 0 1 0 1.8 0a0.9 0.9 0 1 0 -1.8 0M797.0 337a0.9 0.9 0 1 0 1.8 0a0.9 0.9 0 1 0 -1.8 0M701.3 336a0.9 0.9 0 1 0 1.8 0a0.9 0.9 0 1 0 -1.8 0M484.6 373a0.9 0.9 0 1 0 1.8 0a0.9 0.9 0 1 0 -1.8 0M688.6 450a0.9 0.9 0 1 0 1.8 0a0.9 0.9 0 1 0 -1.8 0M896.6 434a0.9 0.9 0 1 0 1.8 0a0.9 0.9 0 1 0 -1.8 0M883.8 447a0.9 0.9 0 1 0 1.8 0a0.9 0.9 0 1 0 -1.8 0M531.3 252a0.9 0.9 0 1 0 1.8 0a0.9 0.9 0 1 0 -1.8 0M921.3 385a0.9 0.9 0 1 0 1.8 0a0.9 0.9 0 1 0 -1.8 0M724.4 162a0.9 0.9 0 1 0 1.8 0a0.9 0.9 0 1 0 -1.8 0M848.7 343a0.9 0.9 0 1 0 1.8 0a0.9 0.9 0 1 0 -1.8 0M439.0 181a0.9 0.9 0 1 0 1.8 0a0.9 0.9 0 1 0 -1.8 0M751.6 480a0.9 0.9 0 1 0 1.8 0a0.9 0.9 0 1 0 -1.8 0M828.2 476a0.9 0.9 0 1 0 1.8 0a0.9 0.9 0 1 0 -1.8 0M719.3 271a0.9 0.9 0 1 0 1.8 0a0.9 0.9 0 1 0 -1.8 0M726.7 262a0.9 0.9 0 1 0 1.8 0a0.9 0.9 0 1 0 -1.8 0M672.3 316a0.9 0.9 0 1 0 1.8 0a0.9 0.9 0 1 0 -1.8 0M904.2 218a0.9 0.9 0 1 0 1.8 0a0.9 0.9 0 1 0 -1.8 0M744.4 297a0.9 0.9 0 1 0 1.8 0a0.9 0.9 0 1 0 -1.8 0M571.6 481a0.9 0.9 0 1 0 1.8 0a0.9 0.9 0 1 0 -1.8 0M566.4 508a0.9 0.9 0 1 0 1.8 0a0.9 0.9 0 1 0 -1.8 0M742.2 362a0.9 0.9 0 1 0 1.8 0a0.9 0.9 0 1 0 -1.8 0"/><path fill="#fff" fill-opacity="0.75" d="M908.5 379a1.1 1.1 0 1 0 2.2 0a1.1 1.1 0 1 0 -2.2 0M1003.7 530a1.1 1.1 0 1 0 2.2 0a1.1 1.1 0 1 0 -2.2 0M618.3 379a1.1 1.1 0 1 0 2.2 0a1.1 1.1 0 1 0 -2.2 0M658.6 425a1.1 1.1 0 1 0 2.2 0a1.1 1.1 0 1 0 -2.2 0M491.3 351a1.1 1.1 0 1 0 2.2 0a1.1 1.1 0 1 0 -2.2 0M408.2 275a1.1 1.1 0 1 0 2.2 0a1.1 1.1 0 1 0 -2.2 0M933.3 253a1.1 1.1 0 1 0 2.2 0a1.1 1.1 0 1 0 -2.2 0M736.1 546a1.1 1.1 0 1 0 2.2 0a1.1 1.1 0 1 0 -2.2 0M970.2 530a1.1 1.1 0 1 0 2.2 0a1.1 1.1 0 1 0 -2.2 0M885.6 372a1.1 1.1 0 1 0 2.2 0a1.1 1.1 0 1 0 -2.2 0M384.1 480a1.1 1.1 0 1 0 2.2 0a1.1 1.1 0 1 0 -2.2 0M964.2 280a1.1 1.1 0 1 0 2.2 0a1.1 1.1 0 1 0 -2.2 0M455.9 319a1.1 1.1 0 1 0 2.2 0a1.1 1.1 0 1 0 -2.2 0M653.8 525a1.1 1.1 0 1 0 2.2 0a1.1 1.1 0 1 0 -2.2 0M600.3 278a1.1 1.1 0 1 0 2.2 0a1.1 1.1 0 1 0 -2.2 0M893.5 444a1.1 1.1 0 1 0 2.2 0a1.1 1.1 0 1 0 -2.2 0M893.9 491a1.1 1.1 0 1 0 2.2 0a1.1 1.1 0 1 0 -2.2 0M433.9 366a1.1 1.1 0 1 0 2.2 0a1.1 1.1 0 1 0 -2.2 0M809.2 495a1.1 1.1 0 1 0 2.2 0a1.1 1.1 0 1 0 -2.2 0M572.9 239a1.1 1.1 0 1 0 2.2 0a1.1 1.1 0 1 0 -2.2 0M539.3 493a1.1 1.1 0 1 0 2.2 0a1.1 1.1 0 1 0 -2.2 0M863.0 387a1.1 1.1 0 1 0 2.2 0a1.1 1.1 0 1 0 -2.2 0M418.9 571a1.1 1.1 0 1 0 2.2 0a1.1 1.1 0 1 0 -2.2 0M566.4 451a1.1 1.1 0 1 0 2.2 0a1.1 1.1 0 1 0 -2.2 0M919.3 250a1.1 1.1 0 1 0 2.2 0a1.1 1.1 0 1 0 -2.2 0M568.8 529a1.1 1.1 0 1 0 2.2 0a1.1 1.1 0 1 0 -2.2 0M810.8 424a1.1 1.1 0 1 0 2.2 0a1.1 1.1 0 1 0 -2.2 0M956.5 317a1.1 1.1 0 1 0 2.2 0a1.1 1.1 0 1 0 -2.2 0M522.2 223a1.1 1.1 0 1 0 2.2 0a1.1 1.1 0 1 0 -2.2 0M445.8 177a1.1 1.1 0 1 0 2.2 0a1.1 1.1 0 1 0 -2.2 0M1002.1 533a1.1 1.1 0 1 0 2.2 0a1.1 1.1 0 1 0 -2.2 0M613.4 298a1.1 1.1 0 1 0 2.2 0a1.1 1.1 0 1 0 -2.2 0"/><path fill="#fff" fill-opacity="0.75" d="M692.5 439a0.9 0.9 0 1 0 1.8 0a0.9 0.9 0 1 0 -1.8 0M690.9 418a0.9 0.9 0 1 0 1.8 0a0.9 0.9 0 1 0 -1.8 0M691.5 262a0.9 0.9 0 1 0 1.8 0a0.9 0.9 0 1 0 -1.8 0M638.2 562a0.9 0.9 0 1 0 1.8 0a0.9 0.9 0 1 0 -1.8 0M823.9 544a0.9 0.9 0 1 0 1.8 0a0.9 0.9 0 1 0 -1.8 0M550.0 532a0.9 0.9 0 1 0 1.8 0a0.9 0.9 0 1 0 -1.8 0M953.2 398a0.9 0.9 0 1 0 1.8 0a0.9 0.9 0 1 0 -1.8 0M787.3 375a0.9 0.9 0 1 0 1.8 0a0.9 0.9 0 1 0 -1.8 0M607.0 187a0.9 0.9 0 1 0 1.8 0a0.9 0.9 0 1 0 -1.8 0M741.1 256a0.9 0.9 0 1 0 1.8 0a0.9 0.9 0 1 0 -1.8 0M889.8 190a0.9 0.9 0 1 0 1.8 0a0.9 0.9 0 1 0 -1.8 0M964.9 225a0.9 0.9 0 1 0 1.8 0a0.9 0.9 0 1 0 -1.8 0M645.1 505a0.9 0.9 0 1 0 1.8 0a0.9 0.9 0 1 0 -1.8 0M715.8 436a0.9 0.9 0 1 0 1.8 0a0.9 0.9 0 1 0 -1.8 0M826.4 456a0.9 0.9 0 1 0 1.8 0a0.9 0.9 0 1 0 -1.8 0M470.4 456a0.9 0.9 0 1 0 1.8 0a0.9 0.9 0 1 0 -1.8 0M992.6 510a0.9 0.9 0 1 0 1.8 0a0.9 0.9 0 1 0 -1.8 0M854.7 305a0.9 0.9 0 1 0 1.8 0a0.9 0.9 0 1 0 -1.8 0M785.9 177a0.9 0.9 0 1 0 1.8 0a0.9 0.9 0 1 0 -1.8 0M535.9 452a0.9 0.9 0 1 0 1.8 0a0.9 0.9 0 1 0 -1.8 0M728.9 212a0.9 0.9 0 1 0 1.8 0a0.9 0.9 0 1 0 -1.8 0M423.7 416a0.9 0.9 0 1 0 1.8 0a0.9 0.9 0 1 0 -1.8 0M526.2 571a0.9 0.9 0 1 0 1.8 0a0.9 0.9 0 1 0 -1.8 0M454.9 266a0.9 0.9 0 1 0 1.8 0a0.9 0.9 0 1 0 -1.8 0M971.8 496a0.9 0.9 0 1 0 1.8 0a0.9 0.9 0 1 0 -1.8 0M918.0 369a0.9 0.9 0 1 0 1.8 0a0.9 0.9 0 1 0 -1.8 0M584.2 235a0.9 0.9 0 1 0 1.8 0a0.9 0.9 0 1 0 -1.8 0M477.9 404a0.9 0.9 0 1 0 1.8 0a0.9 0.9 0 1 0 -1.8 0M518.2 244a0.9 0.9 0 1 0 1.8 0a0.9 0.9 0 1 0 -1.8 0M540.3 165a0.9 0.9 0 1 0 1.8 0a0.9 0.9 0 1 0 -1.8 0M769.7 424a0.9 0.9 0 1 0 1.8 0a0.9 0.9 0 1 0 -1.8 0"/><path fill="#fff" fill-opacity="0.45" d="M633.4 392a1.3 1.3 0 1 0 2.6 0a1.3 1.3 0 1 0 -2.6 0M559.1 190a1.3 1.3 0 1 0 2.6 0a1.3 1.3 0 1 0 -2.6 0M887.3 188a1.3 1.3 0 1 0 2.6 0a1.3 1.3 0 1 0 -2.6 0M960.5 215a1.3 1.3 0 1 0 2.6 0a1.3 1.3 0 1 0 -2.6 0M639.0 379a1.3 1.3 0 1 0 2.6 0a1.3 1.3 0 1 0 -2.6 0M915.3 499a1.3 1.3 0 1 0 2.6 0a1.3 1.3 0 1 0 -2.6 0M707.3 459a1.3 1.3 0 1 0 2.6 0a1.3 1.3 0 1 0 -2.6 0M756.3 212a1.3 1.3 0 1 0 2.6 0a1.3 1.3 0 1 0 -2.6 0M764.9 429a1.3 1.3 0 1 0 2.6 0a1.3 1.3 0 1 0 -2.6 0M964.6 183a1.3 1.3 0 1 0 2.6 0a1.3 1.3 0 1 0 -2.6 0M931.2 246a1.3 1.3 0 1 0 2.6 0a1.3 1.3 0 1 0 -2.6 0M463.2 262a1.3 1.3 0 1 0 2.6 0a1.3 1.3 0 1 0 -2.6 0M740.3 556a1.3 1.3 0 1 0 2.6 0a1.3 1.3 0 1 0 -2.6 0M930.4 575a1.3 1.3 0 1 0 2.6 0a1.3 1.3 0 1 0 -2.6 0M476.0 579a1.3 1.3 0 1 0 2.6 0a1.3 1.3 0 1 0 -2.6 0M1004.1 347a1.3 1.3 0 1 0 2.6 0a1.3 1.3 0 1 0 -2.6 0M628.6 497a1.3 1.3 0 1 0 2.6 0a1.3 1.3 0 1 0 -2.6 0M1003.7 188a1.3 1.3 0 1 0 2.6 0a1.3 1.3 0 1 0 -2.6 0M633.2 418a1.3 1.3 0 1 0 2.6 0a1.3 1.3 0 1 0 -2.6 0M855.3 305a1.3 1.3 0 1 0 2.6 0a1.3 1.3 0 1 0 -2.6 0M588.4 423a1.3 1.3 0 1 0 2.6 0a1.3 1.3 0 1 0 -2.6 0M704.7 404a1.3 1.3 0 1 0 2.6 0a1.3 1.3 0 1 0 -2.6 0M524.7 508a1.3 1.3 0 1 0 2.6 0a1.3 1.3 0 1 0 -2.6 0M393.7 273a1.3 1.3 0 1 0 2.6 0a1.3 1.3 0 1 0 -2.6 0M835.3 295a1.3 1.3 0 1 0 2.6 0a1.3 1.3 0 1 0 -2.6 0M636.1 288a1.3 1.3 0 1 0 2.6 0a1.3 1.3 0 1 0 -2.6 0M713.2 323a1.3 1.3 0 1 0 2.6 0a1.3 1.3 0 1 0 -2.6 0M832.5 183a1.3 1.3 0 1 0 2.6 0a1.3 1.3 0 1 0 -2.6 0M561.5 475a1.3 1.3 0 1 0 2.6 0a1.3 1.3 0 1 0 -2.6 0M588.2 221a1.3 1.3 0 1 0 2.6 0a1.3 1.3 0 1 0 -2.6 0M833.5 540a1.3 1.3 0 1 0 2.6 0a1.3 1.3 0 1 0 -2.6 0M495.9 293a1.3 1.3 0 1 0 2.6 0a1.3 1.3 0 1 0 -2.6 0M904.4 377a1.3 1.3 0 1 0 2.6 0a1.3 1.3 0 1 0 -2.6 0M886.5 271a1.3 1.3 0 1 0 2.6 0a1.3 1.3 0 1 0 -2.6 0M895.6 460a1.3 1.3 0 1 0 2.6 0a1.3 1.3 0 1 0 -2.6 0"/><path fill="#fff" fill-opacity="0.45" d="M629.8 516a0.9 0.9 0 1 0 1.8 0a0.9 0.9 0 1 0 -1.8 0M432.1 300a0.9 0.9 0 1 0 1.8 0a0.9 0.9 0 1 0 -1.8 0M390.5 428a0.9 0.9 0 1 0 1.8 0a0.9 0.9 0 1 0 -1.8 0M449.2 163a0.9 0.9 0 1 0 1.8 0a0.9 0.9 0 1 0 -1.8 0M882.6 397a0.9 0.9 0 1 0 1.8 0a0.9 0.9 0 1 0 -1.8 0M875.5 214a0.9 0.9 0 1 0 1.8 0a0.9 0.9 0 1 0 -1.8 0M416.2 560a0.9 0.9 0 1 0 1.8 0a0.9 0.9 0 1 0 -1.8 0M410.4 293a0.9 0.9 0 1 0 1.8 0a0.9 0.9 0 1 0 -1.8 0M443.8 326a0.9 0.9 0 1 0 1.8 0a0.9 0.9 0 1 0 -1.8 0M526.9 397a0.9 0.9 0 1 0 1.8 0a0.9 0.9 0 1 0 -1.8 0M476.2 213a0.9 0.9 0 1 0 1.8 0a0.9 0.9 0 1 0 -1.8 0M585.6 379a0.9 0.9 0 1 0 1.8 0a0.9 0.9 0 1 0 -1.8 0M928.0 568a0.9 0.9 0 1 0 1.8 0a0.9 0.9 0 1 0 -1.8 0M455.2 386a0.9 0.9 0 1 0 1.8 0a0.9 0.9 0 1 0 -1.8 0M668.4 475a0.9 0.9 0 1 0 1.8 0a0.9 0.9 0 1 0 -1.8 0M770.4 184a0.9 0.9 0 1 0 1.8 0a0.9 0.9 0 1 0 -1.8 0M869.7 482a0.9 0.9 0 1 0 1.8 0a0.9 0.9 0 1 0 -1.8 0M625.0 286a0.9 0.9 0 1 0 1.8 0a0.9 0.9 0 1 0 -1.8 0M967.4 250a0.9 0.9 0 1 0 1.8 0a0.9 0.9 0 1 0 -1.8 0M571.8 544a0.9 0.9 0 1 0 1.8 0a0.9 0.9 0 1 0 -1.8 0M932.2 321a0.9 0.9 0 1 0 1.8 0a0.9 0.9 0 1 0 -1.8 0M769.3 334a0.9 0.9 0 1 0 1.8 0a0.9 0.9 0 1 0 -1.8 0M467.3 308a0.9 0.9 0 1 0 1.8 0a0.9 0.9 0 1 0 -1.8 0M383.1 372a0.9 0.9 0 1 0 1.8 0a0.9 0.9 0 1 0 -1.8 0M470.6 427a0.9 0.9 0 1 0 1.8 0a0.9 0.9 0 1 0 -1.8 0M842.0 576a0.9 0.9 0 1 0 1.8 0a0.9 0.9 0 1 0 -1.8 0M924.5 214a0.9 0.9 0 1 0 1.8 0a0.9 0.9 0 1 0 -1.8 0M930.4 191a0.9 0.9 0 1 0 1.8 0a0.9 0.9 0 1 0 -1.8 0M451.2 237a0.9 0.9 0 1 0 1.8 0a0.9 0.9 0 1 0 -1.8 0M912.9 420a0.9 0.9 0 1 0 1.8 0a0.9 0.9 0 1 0 -1.8 0M795.7 567a0.9 0.9 0 1 0 1.8 0a0.9 0.9 0 1 0 -1.8 0M615.5 349a0.9 0.9 0 1 0 1.8 0a0.9 0.9 0 1 0 -1.8 0M475.0 276a0.9 0.9 0 1 0 1.8 0a0.9 0.9 0 1 0 -1.8 0M751.5 472a0.9 0.9 0 1 0 1.8 0a0.9 0.9 0 1 0 -1.8 0M401.7 223a0.9 0.9 0 1 0 1.8 0a0.9 0.9 0 1 0 -1.8 0M652.3 332a0.9 0.9 0 1 0 1.8 0a0.9 0.9 0 1 0 -1.8 0M822.6 352a0.9 0.9 0 1 0 1.8 0a0.9 0.9 0 1 0 -1.8 0M843.4 272a0.9 0.9 0 1 0 1.8 0a0.9 0.9 0 1 0 -1.8 0M679.4 186a0.9 0.9 0 1 0 1.8 0a0.9 0.9 0 1 0 -1.8 0M556.9 285a0.9 0.9 0 1 0 1.8 0a0.9 0.9 0 1 0 -1.8 0M772.6 349a0.9 0.9 0 1 0 1.8 0a0.9 0.9 0 1 0 -1.8 0M522.2 236a0.9 0.9 0 1 0 1.8 0a0.9 0.9 0 1 0 -1.8 0M958.4 288a0.9 0.9 0 1 0 1.8 0a0.9 0.9 0 1 0 -1.8 0M866.8 344a0.9 0.9 0 1 0 1.8 0a0.9 0.9 0 1 0 -1.8 0M453.6 288a0.9 0.9 0 1 0 1.8 0a0.9 0.9 0 1 0 -1.8 0M715.3 229a0.9 0.9 0 1 0 1.8 0a0.9 0.9 0 1 0 -1.8 0M461.2 291a0.9 0.9 0 1 0 1.8 0a0.9 0.9 0 1 0 -1.8 0M401.8 381a0.9 0.9 0 1 0 1.8 0a0.9 0.9 0 1 0 -1.8 0M531.4 226a0.9 0.9 0 1 0 1.8 0a0.9 0.9 0 1 0 -1.8 0M714.3 185a0.9 0.9 0 1 0 1.8 0a0.9 0.9 0 1 0 -1.8 0M673.3 250a0.9 0.9 0 1 0 1.8 0a0.9 0.9 0 1 0 -1.8 0M802.0 547a0.9 0.9 0 1 0 1.8 0a0.9 0.9 0 1 0 -1.8 0"/><path fill="#fff" fill-opacity="0.6" d="M981.9 516a0.6 0.6 0 1 0 1.2 0a0.6 0.6 0 1 0 -1.2 0M663.3 315a0.6 0.6 0 1 0 1.2 0a0.6 0.6 0 1 0 -1.2 0M572.4 493a0.6 0.6 0 1 0 1.2 0a0.6 0.6 0 1 0 -1.2 0M862.2 365a0.6 0.6 0 1 0 1.2 0a0.6 0.6 0 1 0 -1.2 0M515.0 579a0.6 0.6 0 1 0 1.2 0a0.6 0.6 0 1 0 -1.2 0M885.2 269a0.6 0.6 0 1 0 1.2 0a0.6 0.6 0 1 0 -1.2 0M409.2 336a0.6 0.6 0 1 0 1.2 0a0.6 0.6 0 1 0 -1.2 0M798.4 189a0.6 0.6 0 1 0 1.2 0a0.6 0.6 0 1 0 -1.2 0M477.4 334a0.6 0.6 0 1 0 1.2 0a0.6 0.6 0 1 0 -1.2 0M918.0 174a0.6 0.6 0 1 0 1.2 0a0.6 0.6 0 1 0 -1.2 0M607.3 252a0.6 0.6 0 1 0 1.2 0a0.6 0.6 0 1 0 -1.2 0M626.0 261a0.6 0.6 0 1 0 1.2 0a0.6 0.6 0 1 0 -1.2 0M472.6 410a0.6 0.6 0 1 0 1.2 0a0.6 0.6 0 1 0 -1.2 0M689.8 359a0.6 0.6 0 1 0 1.2 0a0.6 0.6 0 1 0 -1.2 0M700.7 446a0.6 0.6 0 1 0 1.2 0a0.6 0.6 0 1 0 -1.2 0M608.2 270a0.6 0.6 0 1 0 1.2 0a0.6 0.6 0 1 0 -1.2 0M806.6 235a0.6 0.6 0 1 0 1.2 0a0.6 0.6 0 1 0 -1.2 0M863.8 391a0.6 0.6 0 1 0 1.2 0a0.6 0.6 0 1 0 -1.2 0M485.6 404a0.6 0.6 0 1 0 1.2 0a0.6 0.6 0 1 0 -1.2 0M533.1 334a0.6 0.6 0 1 0 1.2 0a0.6 0.6 0 1 0 -1.2 0M813.4 435a0.6 0.6 0 1 0 1.2 0a0.6 0.6 0 1 0 -1.2 0M416.2 440a0.6 0.6 0 1 0 1.2 0a0.6 0.6 0 1 0 -1.2 0M589.1 306a0.6 0.6 0 1 0 1.2 0a0.6 0.6 0 1 0 -1.2 0M763.7 187a0.6 0.6 0 1 0 1.2 0a0.6 0.6 0 1 0 -1.2 0M965.8 431a0.6 0.6 0 1 0 1.2 0a0.6 0.6 0 1 0 -1.2 0M390.4 266a0.6 0.6 0 1 0 1.2 0a0.6 0.6 0 1 0 -1.2 0M981.8 395a0.6 0.6 0 1 0 1.2 0a0.6 0.6 0 1 0 -1.2 0M855.9 185a0.6 0.6 0 1 0 1.2 0a0.6 0.6 0 1 0 -1.2 0M426.7 523a0.6 0.6 0 1 0 1.2 0a0.6 0.6 0 1 0 -1.2 0M396.2 229a0.6 0.6 0 1 0 1.2 0a0.6 0.6 0 1 0 -1.2 0M406.6 328a0.6 0.6 0 1 0 1.2 0a0.6 0.6 0 1 0 -1.2 0M669.9 211a0.6 0.6 0 1 0 1.2 0a0.6 0.6 0 1 0 -1.2 0M535.9 293a0.6 0.6 0 1 0 1.2 0a0.6 0.6 0 1 0 -1.2 0M435.7 222a0.6 0.6 0 1 0 1.2 0a0.6 0.6 0 1 0 -1.2 0M713.7 405a0.6 0.6 0 1 0 1.2 0a0.6 0.6 0 1 0 -1.2 0M834.2 492a0.6 0.6 0 1 0 1.2 0a0.6 0.6 0 1 0 -1.2 0M594.0 383a0.6 0.6 0 1 0 1.2 0a0.6 0.6 0 1 0 -1.2 0M761.9 527a0.6 0.6 0 1 0 1.2 0a0.6 0.6 0 1 0 -1.2 0M971.7 248a0.6 0.6 0 1 0 1.2 0a0.6 0.6 0 1 0 -1.2 0M391.6 306a0.6 0.6 0 1 0 1.2 0a0.6 0.6 0 1 0 -1.2 0M750.4 270a0.6 0.6 0 1 0 1.2 0a0.6 0.6 0 1 0 -1.2 0M489.9 492a0.6 0.6 0 1 0 1.2 0a0.6 0.6 0 1 0 -1.2 0M807.9 507a0.6 0.6 0 1 0 1.2 0a0.6 0.6 0 1 0 -1.2 0M446.6 179a0.6 0.6 0 1 0 1.2 0a0.6 0.6 0 1 0 -1.2 0M534.0 488a0.6 0.6 0 1 0 1.2 0a0.6 0.6 0 1 0 -1.2 0M517.2 214a0.6 0.6 0 1 0 1.2 0a0.6 0.6 0 1 0 -1.2 0"/><path fill="#fff" fill-opacity="0.9" d="M509.4 542a0.9 0.9 0 1 0 1.8 0a0.9 0.9 0 1 0 -1.8 0M641.6 322a0.9 0.9 0 1 0 1.8 0a0.9 0.9 0 1 0 -1.8 0M859.6 298a0.9 0.9 0 1 0 1.8 0a0.9 0.9 0 1 0 -1.8 0M606.3 220a0.9 0.9 0 1 0 1.8 0a0.9 0.9 0 1 0 -1.8 0M829.2 202a0.9 0.9 0 1 0 1.8 0a0.9 0.9 0 1 0 -1.8 0M789.7 166a0.9 0.9 0 1 0 1.8 0a0.9 0.9 0 1 0 -1.8 0M832.4 491a0.9 0.9 0 1 0 1.8 0a0.9 0.9 0 1 0 -1.8 0M873.5 187a0.9 0.9 0 1 0 1.8 0a0.9 0.9 0 1 0 -1.8 0M751.8 479a0.9 0.9 0 1 0 1.8 0a0.9 0.9 0 1 0 -1.8 0M390.0 296a0.9 0.9 0 1 0 1.8 0a0.9 0.9 0 1 0 -1.8 0M452.7 368a0.9 0.9 0 1 0 1.8 0a0.9 0.9 0 1 0 -1.8 0M445.5 575a0.9 0.9 0 1 0 1.8 0a0.9 0.9 0 1 0 -1.8 0M511.1 419a0.9 0.9 0 1 0 1.8 0a0.9 0.9 0 1 0 -1.8 0M905.6 450a0.9 0.9 0 1 0 1.8 0a0.9 0.9 0 1 0 -1.8 0M804.1 352a0.9 0.9 0 1 0 1.8 0a0.9 0.9 0 1 0 -1.8 0M1006.6 189a0.9 0.9 0 1 0 1.8 0a0.9 0.9 0 1 0 -1.8 0M722.2 506a0.9 0.9 0 1 0 1.8 0a0.9 0.9 0 1 0 -1.8 0M788.4 388a0.9 0.9 0 1 0 1.8 0a0.9 0.9 0 1 0 -1.8 0M598.1 579a0.9 0.9 0 1 0 1.8 0a0.9 0.9 0 1 0 -1.8 0M983.6 171a0.9 0.9 0 1 0 1.8 0a0.9 0.9 0 1 0 -1.8 0M668.8 199a0.9 0.9 0 1 0 1.8 0a0.9 0.9 0 1 0 -1.8 0M955.4 194a0.9 0.9 0 1 0 1.8 0a0.9 0.9 0 1 0 -1.8 0M653.2 215a0.9 0.9 0 1 0 1.8 0a0.9 0.9 0 1 0 -1.8 0M482.5 423a0.9 0.9 0 1 0 1.8 0a0.9 0.9 0 1 0 -1.8 0M621.7 432a0.9 0.9 0 1 0 1.8 0a0.9 0.9 0 1 0 -1.8 0M489.4 355a0.9 0.9 0 1 0 1.8 0a0.9 0.9 0 1 0 -1.8 0M657.3 281a0.9 0.9 0 1 0 1.8 0a0.9 0.9 0 1 0 -1.8 0M626.0 547a0.9 0.9 0 1 0 1.8 0a0.9 0.9 0 1 0 -1.8 0M484.1 507a0.9 0.9 0 1 0 1.8 0a0.9 0.9 0 1 0 -1.8 0M877.6 489a0.9 0.9 0 1 0 1.8 0a0.9 0.9 0 1 0 -1.8 0M842.0 288a0.9 0.9 0 1 0 1.8 0a0.9 0.9 0 1 0 -1.8 0M521.2 263a0.9 0.9 0 1 0 1.8 0a0.9 0.9 0 1 0 -1.8 0M577.2 245a0.9 0.9 0 1 0 1.8 0a0.9 0.9 0 1 0 -1.8 0M739.7 378a0.9 0.9 0 1 0 1.8 0a0.9 0.9 0 1 0 -1.8 0M604.8 343a0.9 0.9 0 1 0 1.8 0a0.9 0.9 0 1 0 -1.8 0M544.0 526a0.9 0.9 0 1 0 1.8 0a0.9 0.9 0 1 0 -1.8 0M887.6 465a0.9 0.9 0 1 0 1.8 0a0.9 0.9 0 1 0 -1.8 0M747.0 460a0.9 0.9 0 1 0 1.8 0a0.9 0.9 0 1 0 -1.8 0M822.3 513a0.9 0.9 0 1 0 1.8 0a0.9 0.9 0 1 0 -1.8 0"/><path fill="#fff" fill-opacity="0.75" d="M774.4 487a0.8 0.8 0 1 0 1.6 0a0.8 0.8 0 1 0 -1.6 0M540.2 485a0.8 0.8 0 1 0 1.6 0a0.8 0.8 0 1 0 -1.6 0M778.9 167a0.8 0.8 0 1 0 1.6 0a0.8 0.8 0 1 0 -1.6 0M716.0 492a0.8 0.8 0 1 0 1.6 0a0.8 0.8 0 1 0 -1.6 0M437.8 400a0.8 0.8 0 1 0 1.6 0a0.8 0.8 0 1 0 -1.6 0M786.1 166a0.8 0.8 0 1 0 1.6 0a0.8 0.8 0 1 0 -1.6 0M682.1 274a0.8 0.8 0 1 0 1.6 0a0.8 0.8 0 1 0 -1.6 0M689.4 481a0.8 0.8 0 1 0 1.6 0a0.8 0.8 0 1 0 -1.6 0M859.7 326a0.8 0.8 0 1 0 1.6 0a0.8 0.8 0 1 0 -1.6 0M476.6 510a0.8 0.8 0 1 0 1.6 0a0.8 0.8 0 1 0 -1.6 0M614.8 207a0.8 0.8 0 1 0 1.6 0a0.8 0.8 0 1 0 -1.6 0M406.2 174a0.8 0.8 0 1 0 1.6 0a0.8 0.8 0 1 0 -1.6 0M831.6 371a0.8 0.8 0 1 0 1.6 0a0.8 0.8 0 1 0 -1.6 0M728.0 431a0.8 0.8 0 1 0 1.6 0a0.8 0.8 0 1 0 -1.6 0M429.7 531a0.8 0.8 0 1 0 1.6 0a0.8 0.8 0 1 0 -1.6 0M884.4 447a0.8 0.8 0 1 0 1.6 0a0.8 0.8 0 1 0 -1.6 0M691.7 432a0.8 0.8 0 1 0 1.6 0a0.8 0.8 0 1 0 -1.6 0M536.8 427a0.8 0.8 0 1 0 1.6 0a0.8 0.8 0 1 0 -1.6 0M813.6 469a0.8 0.8 0 1 0 1.6 0a0.8 0.8 0 1 0 -1.6 0M780.8 315a0.8 0.8 0 1 0 1.6 0a0.8 0.8 0 1 0 -1.6 0M745.9 437a0.8 0.8 0 1 0 1.6 0a0.8 0.8 0 1 0 -1.6 0M650.5 226a0.8 0.8 0 1 0 1.6 0a0.8 0.8 0 1 0 -1.6 0M931.3 563a0.8 0.8 0 1 0 1.6 0a0.8 0.8 0 1 0 -1.6 0M648.3 407a0.8 0.8 0 1 0 1.6 0a0.8 0.8 0 1 0 -1.6 0M631.9 455a0.8 0.8 0 1 0 1.6 0a0.8 0.8 0 1 0 -1.6 0M961.6 428a0.8 0.8 0 1 0 1.6 0a0.8 0.8 0 1 0 -1.6 0M848.3 404a0.8 0.8 0 1 0 1.6 0a0.8 0.8 0 1 0 -1.6 0M936.6 431a0.8 0.8 0 1 0 1.6 0a0.8 0.8 0 1 0 -1.6 0M950.3 178a0.8 0.8 0 1 0 1.6 0a0.8 0.8 0 1 0 -1.6 0M921.8 445a0.8 0.8 0 1 0 1.6 0a0.8 0.8 0 1 0 -1.6 0M490.0 419a0.8 0.8 0 1 0 1.6 0a0.8 0.8 0 1 0 -1.6 0M759.8 307a0.8 0.8 0 1 0 1.6 0a0.8 0.8 0 1 0 -1.6 0M567.5 536a0.8 0.8 0 1 0 1.6 0a0.8 0.8 0 1 0 -1.6 0M588.0 324a0.8 0.8 0 1 0 1.6 0a0.8 0.8 0 1 0 -1.6 0M675.9 574a0.8 0.8 0 1 0 1.6 0a0.8 0.8 0 1 0 -1.6 0M934.1 548a0.8 0.8 0 1 0 1.6 0a0.8 0.8 0 1 0 -1.6 0M553.9 415a0.8 0.8 0 1 0 1.6 0a0.8 0.8 0 1 0 -1.6 0M957.3 261a0.8 0.8 0 1 0 1.6 0a0.8 0.8 0 1 0 -1.6 0M804.8 377a0.8 0.8 0 1 0 1.6 0a0.8 0.8 0 1 0 -1.6 0"/><path fill="#fff" fill-opacity="0.45" d="M462.3 457a0.6 0.6 0 1 0 1.2 0a0.6 0.6 0 1 0 -1.2 0M426.9 181a0.6 0.6 0 1 0 1.2 0a0.6 0.6 0 1 0 -1.2 0M746.2 220a0.6 0.6 0 1 0 1.2 0a0.6 0.6 0 1 0 -1.2 0M838.3 295a0.6 0.6 0 1 0 1.2 0a0.6 0.6 0 1 0 -1.2 0M385.3 191a0.6 0.6 0 1 0 1.2 0a0.6 0.6 0 1 0 -1.2 0M527.2 220a0.6 0.6 0 1 0 1.2 0a0.6 0.6 0 1 0 -1.2 0M847.4 512a0.6 0.6 0 1 0 1.2 0a0.6 0.6 0 1 0 -1.2 0M847.2 380a0.6 0.6 0 1 0 1.2 0a0.6 0.6 0 1 0 -1.2 0M506.5 321a0.6 0.6 0 1 0 1.2 0a0.6 0.6 0 1 0 -1.2 0M535.5 542a0.6 0.6 0 1 0 1.2 0a0.6 0.6 0 1 0 -1.2 0M696.0 399a0.6 0.6 0 1 0 1.2 0a0.6 0.6 0 1 0 -1.2 0M770.4 290a0.6 0.6 0 1 0 1.2 0a0.6 0.6 0 1 0 -1.2 0M626.4 472a0.6 0.6 0 1 0 1.2 0a0.6 0.6 0 1 0 -1.2 0M973.4 536a0.6 0.6 0 1 0 1.2 0a0.6 0.6 0 1 0 -1.2 0M862.8 227a0.6 0.6 0 1 0 1.2 0a0.6 0.6 0 1 0 -1.2 0M519.4 459a0.6 0.6 0 1 0 1.2 0a0.6 0.6 0 1 0 -1.2 0M707.1 365a0.6 0.6 0 1 0 1.2 0a0.6 0.6 0 1 0 -1.2 0M807.3 419a0.6 0.6 0 1 0 1.2 0a0.6 0.6 0 1 0 -1.2 0M599.9 479a0.6 0.6 0 1 0 1.2 0a0.6 0.6 0 1 0 -1.2 0M507.8 172a0.6 0.6 0 1 0 1.2 0a0.6 0.6 0 1 0 -1.2 0M960.3 287a0.6 0.6 0 1 0 1.2 0a0.6 0.6 0 1 0 -1.2 0M548.1 245a0.6 0.6 0 1 0 1.2 0a0.6 0.6 0 1 0 -1.2 0M967.5 295a0.6 0.6 0 1 0 1.2 0a0.6 0.6 0 1 0 -1.2 0M470.6 229a0.6 0.6 0 1 0 1.2 0a0.6 0.6 0 1 0 -1.2 0M760.9 468a0.6 0.6 0 1 0 1.2 0a0.6 0.6 0 1 0 -1.2 0M673.4 373a0.6 0.6 0 1 0 1.2 0a0.6 0.6 0 1 0 -1.2 0M664.9 511a0.6 0.6 0 1 0 1.2 0a0.6 0.6 0 1 0 -1.2 0M807.9 519a0.6 0.6 0 1 0 1.2 0a0.6 0.6 0 1 0 -1.2 0M481.2 258a0.6 0.6 0 1 0 1.2 0a0.6 0.6 0 1 0 -1.2 0M592.2 256a0.6 0.6 0 1 0 1.2 0a0.6 0.6 0 1 0 -1.2 0M792.8 203a0.6 0.6 0 1 0 1.2 0a0.6 0.6 0 1 0 -1.2 0M487.1 473a0.6 0.6 0 1 0 1.2 0a0.6 0.6 0 1 0 -1.2 0M996.4 322a0.6 0.6 0 1 0 1.2 0a0.6 0.6 0 1 0 -1.2 0M608.9 241a0.6 0.6 0 1 0 1.2 0a0.6 0.6 0 1 0 -1.2 0M640.3 182a0.6 0.6 0 1 0 1.2 0a0.6 0.6 0 1 0 -1.2 0M666.0 346a0.6 0.6 0 1 0 1.2 0a0.6 0.6 0 1 0 -1.2 0M790.1 206a0.6 0.6 0 1 0 1.2 0a0.6 0.6 0 1 0 -1.2 0M389.9 230a0.6 0.6 0 1 0 1.2 0a0.6 0.6 0 1 0 -1.2 0M535.9 472a0.6 0.6 0 1 0 1.2 0a0.6 0.6 0 1 0 -1.2 0M638.1 409a0.6 0.6 0 1 0 1.2 0a0.6 0.6 0 1 0 -1.2 0M383.6 465a0.6 0.6 0 1 0 1.2 0a0.6 0.6 0 1 0 -1.2 0"/><path fill="#fff" fill-opacity="0.6" d="M495.8 374a1.1 1.1 0 1 0 2.2 0a1.1 1.1 0 1 0 -2.2 0M552.5 478a1.1 1.1 0 1 0 2.2 0a1.1 1.1 0 1 0 -2.2 0M944.2 196a1.1 1.1 0 1 0 2.2 0a1.1 1.1 0 1 0 -2.2 0M917.1 515a1.1 1.1 0 1 0 2.2 0a1.1 1.1 0 1 0 -2.2 0M436.5 445a1.1 1.1 0 1 0 2.2 0a1.1 1.1 0 1 0 -2.2 0M734.9 172a1.1 1.1 0 1 0 2.2 0a1.1 1.1 0 1 0 -2.2 0M870.8 551a1.1 1.1 0 1 0 2.2 0a1.1 1.1 0 1 0 -2.2 0M722.6 268a1.1 1.1 0 1 0 2.2 0a1.1 1.1 0 1 0 -2.2 0M624.9 548a1.1 1.1 0 1 0 2.2 0a1.1 1.1 0 1 0 -2.2 0M861.7 308a1.1 1.1 0 1 0 2.2 0a1.1 1.1 0 1 0 -2.2 0M822.5 545a1.1 1.1 0 1 0 2.2 0a1.1 1.1 0 1 0 -2.2 0M995.9 324a1.1 1.1 0 1 0 2.2 0a1.1 1.1 0 1 0 -2.2 0M524.6 513a1.1 1.1 0 1 0 2.2 0a1.1 1.1 0 1 0 -2.2 0M500.6 278a1.1 1.1 0 1 0 2.2 0a1.1 1.1 0 1 0 -2.2 0M485.7 196a1.1 1.1 0 1 0 2.2 0a1.1 1.1 0 1 0 -2.2 0M868.2 205a1.1 1.1 0 1 0 2.2 0a1.1 1.1 0 1 0 -2.2 0M761.4 389a1.1 1.1 0 1 0 2.2 0a1.1 1.1 0 1 0 -2.2 0M719.1 344a1.1 1.1 0 1 0 2.2 0a1.1 1.1 0 1 0 -2.2 0M705.7 308a1.1 1.1 0 1 0 2.2 0a1.1 1.1 0 1 0 -2.2 0M542.1 200a1.1 1.1 0 1 0 2.2 0a1.1 1.1 0 1 0 -2.2 0M694.3 549a1.1 1.1 0 1 0 2.2 0a1.1 1.1 0 1 0 -2.2 0M789.3 486a1.1 1.1 0 1 0 2.2 0a1.1 1.1 0 1 0 -2.2 0M542.4 502a1.1 1.1 0 1 0 2.2 0a1.1 1.1 0 1 0 -2.2 0M876.0 427a1.1 1.1 0 1 0 2.2 0a1.1 1.1 0 1 0 -2.2 0M638.1 238a1.1 1.1 0 1 0 2.2 0a1.1 1.1 0 1 0 -2.2 0M802.4 525a1.1 1.1 0 1 0 2.2 0a1.1 1.1 0 1 0 -2.2 0M730.9 273a1.1 1.1 0 1 0 2.2 0a1.1 1.1 0 1 0 -2.2 0M623.3 567a1.1 1.1 0 1 0 2.2 0a1.1 1.1 0 1 0 -2.2 0M819.9 258a1.1 1.1 0 1 0 2.2 0a1.1 1.1 0 1 0 -2.2 0M935.4 161a1.1 1.1 0 1 0 2.2 0a1.1 1.1 0 1 0 -2.2 0M794.1 236a1.1 1.1 0 1 0 2.2 0a1.1 1.1 0 1 0 -2.2 0M679.8 466a1.1 1.1 0 1 0 2.2 0a1.1 1.1 0 1 0 -2.2 0M587.1 471a1.1 1.1 0 1 0 2.2 0a1.1 1.1 0 1 0 -2.2 0M506.6 480a1.1 1.1 0 1 0 2.2 0a1.1 1.1 0 1 0 -2.2 0"/><path fill="#fff" fill-opacity="0.9" d="M440.6 576a0.7 0.7 0 1 0 1.4 0a0.7 0.7 0 1 0 -1.4 0M991.3 200a0.7 0.7 0 1 0 1.4 0a0.7 0.7 0 1 0 -1.4 0M448.5 358a0.7 0.7 0 1 0 1.4 0a0.7 0.7 0 1 0 -1.4 0M982.1 448a0.7 0.7 0 1 0 1.4 0a0.7 0.7 0 1 0 -1.4 0M976.2 197a0.7 0.7 0 1 0 1.4 0a0.7 0.7 0 1 0 -1.4 0M978.4 469a0.7 0.7 0 1 0 1.4 0a0.7 0.7 0 1 0 -1.4 0M629.3 252a0.7 0.7 0 1 0 1.4 0a0.7 0.7 0 1 0 -1.4 0M827.4 415a0.7 0.7 0 1 0 1.4 0a0.7 0.7 0 1 0 -1.4 0M686.6 424a0.7 0.7 0 1 0 1.4 0a0.7 0.7 0 1 0 -1.4 0M714.9 349a0.7 0.7 0 1 0 1.4 0a0.7 0.7 0 1 0 -1.4 0M517.1 549a0.7 0.7 0 1 0 1.4 0a0.7 0.7 0 1 0 -1.4 0M564.9 503a0.7 0.7 0 1 0 1.4 0a0.7 0.7 0 1 0 -1.4 0M721.8 496a0.7 0.7 0 1 0 1.4 0a0.7 0.7 0 1 0 -1.4 0M861.2 272a0.7 0.7 0 1 0 1.4 0a0.7 0.7 0 1 0 -1.4 0M502.7 334a0.7 0.7 0 1 0 1.4 0a0.7 0.7 0 1 0 -1.4 0M943.1 551a0.7 0.7 0 1 0 1.4 0a0.7 0.7 0 1 0 -1.4 0M725.3 301a0.7 0.7 0 1 0 1.4 0a0.7 0.7 0 1 0 -1.4 0M878.1 556a0.7 0.7 0 1 0 1.4 0a0.7 0.7 0 1 0 -1.4 0M915.5 531a0.7 0.7 0 1 0 1.4 0a0.7 0.7 0 1 0 -1.4 0M638.8 331a0.7 0.7 0 1 0 1.4 0a0.7 0.7 0 1 0 -1.4 0M818.6 302a0.7 0.7 0 1 0 1.4 0a0.7 0.7 0 1 0 -1.4 0M1004.1 167a0.7 0.7 0 1 0 1.4 0a0.7 0.7 0 1 0 -1.4 0M818.7 548a0.7 0.7 0 1 0 1.4 0a0.7 0.7 0 1 0 -1.4 0M938.5 277a0.7 0.7 0 1 0 1.4 0a0.7 0.7 0 1 0 -1.4 0M610.3 552a0.7 0.7 0 1 0 1.4 0a0.7 0.7 0 1 0 -1.4 0M900.1 543a0.7 0.7 0 1 0 1.4 0a0.7 0.7 0 1 0 -1.4 0M637.9 379a0.7 0.7 0 1 0 1.4 0a0.7 0.7 0 1 0 -1.4 0M904.4 320a0.7 0.7 0 1 0 1.4 0a0.7 0.7 0 1 0 -1.4 0M898.4 570a0.7 0.7 0 1 0 1.4 0a0.7 0.7 0 1 0 -1.4 0M915.4 485a0.7 0.7 0 1 0 1.4 0a0.7 0.7 0 1 0 -1.4 0M771.2 414a0.7 0.7 0 1 0 1.4 0a0.7 0.7 0 1 0 -1.4 0M831.3 513a0.7 0.7 0 1 0 1.4 0a0.7 0.7 0 1 0 -1.4 0M463.9 288a0.7 0.7 0 1 0 1.4 0a0.7 0.7 0 1 0 -1.4 0M736.8 332a0.7 0.7 0 1 0 1.4 0a0.7 0.7 0 1 0 -1.4 0M704.6 303a0.7 0.7 0 1 0 1.4 0a0.7 0.7 0 1 0 -1.4 0M852.2 518a0.7 0.7 0 1 0 1.4 0a0.7 0.7 0 1 0 -1.4 0M688.9 347a0.7 0.7 0 1 0 1.4 0a0.7 0.7 0 1 0 -1.4 0M951.7 443a0.7 0.7 0 1 0 1.4 0a0.7 0.7 0 1 0 -1.4 0M947.4 478a0.7 0.7 0 1 0 1.4 0a0.7 0.7 0 1 0 -1.4 0M846.8 458a0.7 0.7 0 1 0 1.4 0a0.7 0.7 0 1 0 -1.4 0"/><path fill="#fff" fill-opacity="0.9" d="M769.6 214a1.0 1.0 0 1 0 2.0 0a1.0 1.0 0 1 0 -2.0 0M539.2 506a1.0 1.0 0 1 0 2.0 0a1.0 1.0 0 1 0 -2.0 0M622.1 469a1.0 1.0 0 1 0 2.0 0a1.0 1.0 0 1 0 -2.0 0M829.0 514a1.0 1.0 0 1 0 2.0 0a1.0 1.0 0 1 0 -2.0 0M429.2 346a1.0 1.0 0 1 0 2.0 0a1.0 1.0 0 1 0 -2.0 0M813.0 189a1.0 1.0 0 1 0 2.0 0a1.0 1.0 0 1 0 -2.0 0M580.2 310a1.0 1.0 0 1 0 2.0 0a1.0 1.0 0 1 0 -2.0 0M508.5 389a1.0 1.0 0 1 0 2.0 0a1.0 1.0 0 1 0 -2.0 0M582.1 416a1.0 1.0 0 1 0 2.0 0a1.0 1.0 0 1 0 -2.0 0M525.0 161a1.0 1.0 0 1 0 2.0 0a1.0 1.0 0 1 0 -2.0 0M852.5 291a1.0 1.0 0 1 0 2.0 0a1.0 1.0 0 1 0 -2.0 0M730.1 570a1.0 1.0 0 1 0 2.0 0a1.0 1.0 0 1 0 -2.0 0M431.3 452a1.0 1.0 0 1 0 2.0 0a1.0 1.0 0 1 0 -2.0 0M443.2 364a1.0 1.0 0 1 0 2.0 0a1.0 1.0 0 1 0 -2.0 0M467.7 404a1.0 1.0 0 1 0 2.0 0a1.0 1.0 0 1 0 -2.0 0M664.2 359a1.0 1.0 0 1 0 2.0 0a1.0 1.0 0 1 0 -2.0 0M793.0 445a1.0 1.0 0 1 0 2.0 0a1.0 1.0 0 1 0 -2.0 0M521.3 414a1.0 1.0 0 1 0 2.0 0a1.0 1.0 0 1 0 -2.0 0M684.8 294a1.0 1.0 0 1 0 2.0 0a1.0 1.0 0 1 0 -2.0 0M799.4 227a1.0 1.0 0 1 0 2.0 0a1.0 1.0 0 1 0 -2.0 0M884.0 161a1.0 1.0 0 1 0 2.0 0a1.0 1.0 0 1 0 -2.0 0M817.3 226a1.0 1.0 0 1 0 2.0 0a1.0 1.0 0 1 0 -2.0 0M664.8 180a1.0 1.0 0 1 0 2.0 0a1.0 1.0 0 1 0 -2.0 0M729.5 533a1.0 1.0 0 1 0 2.0 0a1.0 1.0 0 1 0 -2.0 0M491.9 322a1.0 1.0 0 1 0 2.0 0a1.0 1.0 0 1 0 -2.0 0M753.2 284a1.0 1.0 0 1 0 2.0 0a1.0 1.0 0 1 0 -2.0 0M493.9 561a1.0 1.0 0 1 0 2.0 0a1.0 1.0 0 1 0 -2.0 0M940.4 494a1.0 1.0 0 1 0 2.0 0a1.0 1.0 0 1 0 -2.0 0M533.6 418a1.0 1.0 0 1 0 2.0 0a1.0 1.0 0 1 0 -2.0 0M451.7 172a1.0 1.0 0 1 0 2.0 0a1.0 1.0 0 1 0 -2.0 0"/><path fill="#fff" fill-opacity="0.6" d="M902.3 218a0.9 0.9 0 1 0 1.8 0a0.9 0.9 0 1 0 -1.8 0M764.8 478a0.9 0.9 0 1 0 1.8 0a0.9 0.9 0 1 0 -1.8 0M764.1 540a0.9 0.9 0 1 0 1.8 0a0.9 0.9 0 1 0 -1.8 0M713.5 324a0.9 0.9 0 1 0 1.8 0a0.9 0.9 0 1 0 -1.8 0M964.0 228a0.9 0.9 0 1 0 1.8 0a0.9 0.9 0 1 0 -1.8 0M439.2 500a0.9 0.9 0 1 0 1.8 0a0.9 0.9 0 1 0 -1.8 0M657.5 474a0.9 0.9 0 1 0 1.8 0a0.9 0.9 0 1 0 -1.8 0M606.3 327a0.9 0.9 0 1 0 1.8 0a0.9 0.9 0 1 0 -1.8 0M438.6 503a0.9 0.9 0 1 0 1.8 0a0.9 0.9 0 1 0 -1.8 0M844.8 576a0.9 0.9 0 1 0 1.8 0a0.9 0.9 0 1 0 -1.8 0M656.0 536a0.9 0.9 0 1 0 1.8 0a0.9 0.9 0 1 0 -1.8 0M928.6 540a0.9 0.9 0 1 0 1.8 0a0.9 0.9 0 1 0 -1.8 0M568.7 492a0.9 0.9 0 1 0 1.8 0a0.9 0.9 0 1 0 -1.8 0M545.1 531a0.9 0.9 0 1 0 1.8 0a0.9 0.9 0 1 0 -1.8 0M889.0 351a0.9 0.9 0 1 0 1.8 0a0.9 0.9 0 1 0 -1.8 0M710.2 211a0.9 0.9 0 1 0 1.8 0a0.9 0.9 0 1 0 -1.8 0M983.7 276a0.9 0.9 0 1 0 1.8 0a0.9 0.9 0 1 0 -1.8 0M989.6 183a0.9 0.9 0 1 0 1.8 0a0.9 0.9 0 1 0 -1.8 0M884.5 362a0.9 0.9 0 1 0 1.8 0a0.9 0.9 0 1 0 -1.8 0M705.5 472a0.9 0.9 0 1 0 1.8 0a0.9 0.9 0 1 0 -1.8 0M885.4 248a0.9 0.9 0 1 0 1.8 0a0.9 0.9 0 1 0 -1.8 0M899.9 399a0.9 0.9 0 1 0 1.8 0a0.9 0.9 0 1 0 -1.8 0M518.2 463a0.9 0.9 0 1 0 1.8 0a0.9 0.9 0 1 0 -1.8 0M550.0 256a0.9 0.9 0 1 0 1.8 0a0.9 0.9 0 1 0 -1.8 0M984.5 253a0.9 0.9 0 1 0 1.8 0a0.9 0.9 0 1 0 -1.8 0M443.0 436a0.9 0.9 0 1 0 1.8 0a0.9 0.9 0 1 0 -1.8 0M738.2 202a0.9 0.9 0 1 0 1.8 0a0.9 0.9 0 1 0 -1.8 0M951.9 576a0.9 0.9 0 1 0 1.8 0a0.9 0.9 0 1 0 -1.8 0M554.9 180a0.9 0.9 0 1 0 1.8 0a0.9 0.9 0 1 0 -1.8 0M738.8 473a0.9 0.9 0 1 0 1.8 0a0.9 0.9 0 1 0 -1.8 0M660.0 314a0.9 0.9 0 1 0 1.8 0a0.9 0.9 0 1 0 -1.8 0M559.5 499a0.9 0.9 0 1 0 1.8 0a0.9 0.9 0 1 0 -1.8 0M689.3 290a0.9 0.9 0 1 0 1.8 0a0.9 0.9 0 1 0 -1.8 0M865.8 562a0.9 0.9 0 1 0 1.8 0a0.9 0.9 0 1 0 -1.8 0M714.2 487a0.9 0.9 0 1 0 1.8 0a0.9 0.9 0 1 0 -1.8 0M833.7 497a0.9 0.9 0 1 0 1.8 0a0.9 0.9 0 1 0 -1.8 0M828.8 226a0.9 0.9 0 1 0 1.8 0a0.9 0.9 0 1 0 -1.8 0M924.1 180a0.9 0.9 0 1 0 1.8 0a0.9 0.9 0 1 0 -1.8 0M807.2 500a0.9 0.9 0 1 0 1.8 0a0.9 0.9 0 1 0 -1.8 0M435.6 508a0.9 0.9 0 1 0 1.8 0a0.9 0.9 0 1 0 -1.8 0M723.1 357a0.9 0.9 0 1 0 1.8 0a0.9 0.9 0 1 0 -1.8 0M406.5 557a0.9 0.9 0 1 0 1.8 0a0.9 0.9 0 1 0 -1.8 0M475.2 322a0.9 0.9 0 1 0 1.8 0a0.9 0.9 0 1 0 -1.8 0"/><path fill="#fff" fill-opacity="0.9" d="M700.2 268a1.1 1.1 0 1 0 2.2 0a1.1 1.1 0 1 0 -2.2 0M431.9 552a1.1 1.1 0 1 0 2.2 0a1.1 1.1 0 1 0 -2.2 0M931.4 171a1.1 1.1 0 1 0 2.2 0a1.1 1.1 0 1 0 -2.2 0M776.3 332a1.1 1.1 0 1 0 2.2 0a1.1 1.1 0 1 0 -2.2 0M880.2 255a1.1 1.1 0 1 0 2.2 0a1.1 1.1 0 1 0 -2.2 0M756.2 429a1.1 1.1 0 1 0 2.2 0a1.1 1.1 0 1 0 -2.2 0M732.9 364a1.1 1.1 0 1 0 2.2 0a1.1 1.1 0 1 0 -2.2 0M608.1 210a1.1 1.1 0 1 0 2.2 0a1.1 1.1 0 1 0 -2.2 0M945.8 225a1.1 1.1 0 1 0 2.2 0a1.1 1.1 0 1 0 -2.2 0M585.8 304a1.1 1.1 0 1 0 2.2 0a1.1 1.1 0 1 0 -2.2 0M571.0 442a1.1 1.1 0 1 0 2.2 0a1.1 1.1 0 1 0 -2.2 0M447.6 344a1.1 1.1 0 1 0 2.2 0a1.1 1.1 0 1 0 -2.2 0M594.4 328a1.1 1.1 0 1 0 2.2 0a1.1 1.1 0 1 0 -2.2 0M810.8 337a1.1 1.1 0 1 0 2.2 0a1.1 1.1 0 1 0 -2.2 0M734.0 221a1.1 1.1 0 1 0 2.2 0a1.1 1.1 0 1 0 -2.2 0M702.0 174a1.1 1.1 0 1 0 2.2 0a1.1 1.1 0 1 0 -2.2 0M464.9 242a1.1 1.1 0 1 0 2.2 0a1.1 1.1 0 1 0 -2.2 0M933.8 465a1.1 1.1 0 1 0 2.2 0a1.1 1.1 0 1 0 -2.2 0M787.4 448a1.1 1.1 0 1 0 2.2 0a1.1 1.1 0 1 0 -2.2 0M674.0 431a1.1 1.1 0 1 0 2.2 0a1.1 1.1 0 1 0 -2.2 0M736.0 556a1.1 1.1 0 1 0 2.2 0a1.1 1.1 0 1 0 -2.2 0M409.5 251a1.1 1.1 0 1 0 2.2 0a1.1 1.1 0 1 0 -2.2 0M808.3 451a1.1 1.1 0 1 0 2.2 0a1.1 1.1 0 1 0 -2.2 0M669.7 538a1.1 1.1 0 1 0 2.2 0a1.1 1.1 0 1 0 -2.2 0M436.5 189a1.1 1.1 0 1 0 2.2 0a1.1 1.1 0 1 0 -2.2 0M668.7 269a1.1 1.1 0 1 0 2.2 0a1.1 1.1 0 1 0 -2.2 0M630.5 511a1.1 1.1 0 1 0 2.2 0a1.1 1.1 0 1 0 -2.2 0M381.3 255a1.1 1.1 0 1 0 2.2 0a1.1 1.1 0 1 0 -2.2 0M404.4 187a1.1 1.1 0 1 0 2.2 0a1.1 1.1 0 1 0 -2.2 0M406.9 406a1.1 1.1 0 1 0 2.2 0a1.1 1.1 0 1 0 -2.2 0M827.9 558a1.1 1.1 0 1 0 2.2 0a1.1 1.1 0 1 0 -2.2 0M967.0 517a1.1 1.1 0 1 0 2.2 0a1.1 1.1 0 1 0 -2.2 0M736.4 265a1.1 1.1 0 1 0 2.2 0a1.1 1.1 0 1 0 -2.2 0M950.2 349a1.1 1.1 0 1 0 2.2 0a1.1 1.1 0 1 0 -2.2 0M957.6 468a1.1 1.1 0 1 0 2.2 0a1.1 1.1 0 1 0 -2.2 0M474.9 403a1.1 1.1 0 1 0 2.2 0a1.1 1.1 0 1 0 -2.2 0"/><path fill="#fff" fill-opacity="0.45" d="M562.1 235a1.1 1.1 0 1 0 2.2 0a1.1 1.1 0 1 0 -2.2 0M680.4 257a1.1 1.1 0 1 0 2.2 0a1.1 1.1 0 1 0 -2.2 0M458.9 351a1.1 1.1 0 1 0 2.2 0a1.1 1.1 0 1 0 -2.2 0M832.4 504a1.1 1.1 0 1 0 2.2 0a1.1 1.1 0 1 0 -2.2 0M429.9 195a1.1 1.1 0 1 0 2.2 0a1.1 1.1 0 1 0 -2.2 0M937.6 562a1.1 1.1 0 1 0 2.2 0a1.1 1.1 0 1 0 -2.2 0M401.9 330a1.1 1.1 0 1 0 2.2 0a1.1 1.1 0 1 0 -2.2 0M566.7 566a1.1 1.1 0 1 0 2.2 0a1.1 1.1 0 1 0 -2.2 0M657.7 537a1.1 1.1 0 1 0 2.2 0a1.1 1.1 0 1 0 -2.2 0M976.3 207a1.1 1.1 0 1 0 2.2 0a1.1 1.1 0 1 0 -2.2 0M584.9 465a1.1 1.1 0 1 0 2.2 0a1.1 1.1 0 1 0 -2.2 0M738.0 444a1.1 1.1 0 1 0 2.2 0a1.1 1.1 0 1 0 -2.2 0M479.3 209a1.1 1.1 0 1 0 2.2 0a1.1 1.1 0 1 0 -2.2 0M909.2 323a1.1 1.1 0 1 0 2.2 0a1.1 1.1 0 1 0 -2.2 0M454.8 304a1.1 1.1 0 1 0 2.2 0a1.1 1.1 0 1 0 -2.2 0M734.5 192a1.1 1.1 0 1 0 2.2 0a1.1 1.1 0 1 0 -2.2 0M944.9 427a1.1 1.1 0 1 0 2.2 0a1.1 1.1 0 1 0 -2.2 0M626.1 276a1.1 1.1 0 1 0 2.2 0a1.1 1.1 0 1 0 -2.2 0M740.2 473a1.1 1.1 0 1 0 2.2 0a1.1 1.1 0 1 0 -2.2 0M901.8 335a1.1 1.1 0 1 0 2.2 0a1.1 1.1 0 1 0 -2.2 0M495.1 373a1.1 1.1 0 1 0 2.2 0a1.1 1.1 0 1 0 -2.2 0M807.9 236a1.1 1.1 0 1 0 2.2 0a1.1 1.1 0 1 0 -2.2 0M524.0 337a1.1 1.1 0 1 0 2.2 0a1.1 1.1 0 1 0 -2.2 0M571.8 279a1.1 1.1 0 1 0 2.2 0a1.1 1.1 0 1 0 -2.2 0"/><path fill="#fff" fill-opacity="0.45" d="M764.9 278a0.7 0.7 0 1 0 1.4 0a0.7 0.7 0 1 0 -1.4 0M420.9 333a0.7 0.7 0 1 0 1.4 0a0.7 0.7 0 1 0 -1.4 0M669.9 434a0.7 0.7 0 1 0 1.4 0a0.7 0.7 0 1 0 -1.4 0M694.6 448a0.7 0.7 0 1 0 1.4 0a0.7 0.7 0 1 0 -1.4 0M633.0 243a0.7 0.7 0 1 0 1.4 0a0.7 0.7 0 1 0 -1.4 0M920.7 310a0.7 0.7 0 1 0 1.4 0a0.7 0.7 0 1 0 -1.4 0M694.2 435a0.7 0.7 0 1 0 1.4 0a0.7 0.7 0 1 0 -1.4 0M874.3 185a0.7 0.7 0 1 0 1.4 0a0.7 0.7 0 1 0 -1.4 0M751.3 199a0.7 0.7 0 1 0 1.4 0a0.7 0.7 0 1 0 -1.4 0M504.8 426a0.7 0.7 0 1 0 1.4 0a0.7 0.7 0 1 0 -1.4 0M963.7 370a0.7 0.7 0 1 0 1.4 0a0.7 0.7 0 1 0 -1.4 0M529.1 534a0.7 0.7 0 1 0 1.4 0a0.7 0.7 0 1 0 -1.4 0M611.1 417a0.7 0.7 0 1 0 1.4 0a0.7 0.7 0 1 0 -1.4 0M621.3 446a0.7 0.7 0 1 0 1.4 0a0.7 0.7 0 1 0 -1.4 0M455.9 399a0.7 0.7 0 1 0 1.4 0a0.7 0.7 0 1 0 -1.4 0M638.1 165a0.7 0.7 0 1 0 1.4 0a0.7 0.7 0 1 0 -1.4 0M438.5 297a0.7 0.7 0 1 0 1.4 0a0.7 0.7 0 1 0 -1.4 0M548.1 465a0.7 0.7 0 1 0 1.4 0a0.7 0.7 0 1 0 -1.4 0M763.9 418a0.7 0.7 0 1 0 1.4 0a0.7 0.7 0 1 0 -1.4 0M888.2 497a0.7 0.7 0 1 0 1.4 0a0.7 0.7 0 1 0 -1.4 0M891.4 288a0.7 0.7 0 1 0 1.4 0a0.7 0.7 0 1 0 -1.4 0M998.8 422a0.7 0.7 0 1 0 1.4 0a0.7 0.7 0 1 0 -1.4 0M750.8 405a0.7 0.7 0 1 0 1.4 0a0.7 0.7 0 1 0 -1.4 0M529.7 432a0.7 0.7 0 1 0 1.4 0a0.7 0.7 0 1 0 -1.4 0M632.0 397a0.7 0.7 0 1 0 1.4 0a0.7 0.7 0 1 0 -1.4 0M782.2 172a0.7 0.7 0 1 0 1.4 0a0.7 0.7 0 1 0 -1.4 0M573.4 322a0.7 0.7 0 1 0 1.4 0a0.7 0.7 0 1 0 -1.4 0M992.3 415a0.7 0.7 0 1 0 1.4 0a0.7 0.7 0 1 0 -1.4 0M883.7 298a0.7 0.7 0 1 0 1.4 0a0.7 0.7 0 1 0 -1.4 0M906.8 446a0.7 0.7 0 1 0 1.4 0a0.7 0.7 0 1 0 -1.4 0M382.1 479a0.7 0.7 0 1 0 1.4 0a0.7 0.7 0 1 0 -1.4 0M789.4 215a0.7 0.7 0 1 0 1.4 0a0.7 0.7 0 1 0 -1.4 0M524.5 254a0.7 0.7 0 1 0 1.4 0a0.7 0.7 0 1 0 -1.4 0M922.5 463a0.7 0.7 0 1 0 1.4 0a0.7 0.7 0 1 0 -1.4 0M748.0 199a0.7 0.7 0 1 0 1.4 0a0.7 0.7 0 1 0 -1.4 0M859.9 369a0.7 0.7 0 1 0 1.4 0a0.7 0.7 0 1 0 -1.4 0M494.2 380a0.7 0.7 0 1 0 1.4 0a0.7 0.7 0 1 0 -1.4 0M879.0 435a0.7 0.7 0 1 0 1.4 0a0.7 0.7 0 1 0 -1.4 0M543.7 235a0.7 0.7 0 1 0 1.4 0a0.7 0.7 0 1 0 -1.4 0"/><path fill="#fff" fill-opacity="1.0" d="M406.4 279a1.0 1.0 0 1 0 2.0 0a1.0 1.0 0 1 0 -2.0 0M868.3 387a1.0 1.0 0 1 0 2.0 0a1.0 1.0 0 1 0 -2.0 0M508.4 517a1.0 1.0 0 1 0 2.0 0a1.0 1.0 0 1 0 -2.0 0M551.0 304a1.0 1.0 0 1 0 2.0 0a1.0 1.0 0 1 0 -2.0 0M429.3 475a1.0 1.0 0 1 0 2.0 0a1.0 1.0 0 1 0 -2.0 0M527.6 400a1.0 1.0 0 1 0 2.0 0a1.0 1.0 0 1 0 -2.0 0M606.1 231a1.0 1.0 0 1 0 2.0 0a1.0 1.0 0 1 0 -2.0 0M711.9 180a1.0 1.0 0 1 0 2.0 0a1.0 1.0 0 1 0 -2.0 0M875.6 552a1.0 1.0 0 1 0 2.0 0a1.0 1.0 0 1 0 -2.0 0M866.8 200a1.0 1.0 0 1 0 2.0 0a1.0 1.0 0 1 0 -2.0 0M744.5 276a1.0 1.0 0 1 0 2.0 0a1.0 1.0 0 1 0 -2.0 0M966.3 292a1.0 1.0 0 1 0 2.0 0a1.0 1.0 0 1 0 -2.0 0M409.9 310a1.0 1.0 0 1 0 2.0 0a1.0 1.0 0 1 0 -2.0 0M804.4 241a1.0 1.0 0 1 0 2.0 0a1.0 1.0 0 1 0 -2.0 0M544.6 347a1.0 1.0 0 1 0 2.0 0a1.0 1.0 0 1 0 -2.0 0M1001.5 536a1.0 1.0 0 1 0 2.0 0a1.0 1.0 0 1 0 -2.0 0M749.7 445a1.0 1.0 0 1 0 2.0 0a1.0 1.0 0 1 0 -2.0 0M833.6 488a1.0 1.0 0 1 0 2.0 0a1.0 1.0 0 1 0 -2.0 0M820.4 412a1.0 1.0 0 1 0 2.0 0a1.0 1.0 0 1 0 -2.0 0M573.3 218a1.0 1.0 0 1 0 2.0 0a1.0 1.0 0 1 0 -2.0 0M802.2 354a1.0 1.0 0 1 0 2.0 0a1.0 1.0 0 1 0 -2.0 0M902.7 507a1.0 1.0 0 1 0 2.0 0a1.0 1.0 0 1 0 -2.0 0M667.0 167a1.0 1.0 0 1 0 2.0 0a1.0 1.0 0 1 0 -2.0 0M946.2 311a1.0 1.0 0 1 0 2.0 0a1.0 1.0 0 1 0 -2.0 0M696.2 222a1.0 1.0 0 1 0 2.0 0a1.0 1.0 0 1 0 -2.0 0M895.5 545a1.0 1.0 0 1 0 2.0 0a1.0 1.0 0 1 0 -2.0 0M939.8 306a1.0 1.0 0 1 0 2.0 0a1.0 1.0 0 1 0 -2.0 0M840.1 484a1.0 1.0 0 1 0 2.0 0a1.0 1.0 0 1 0 -2.0 0M557.4 490a1.0 1.0 0 1 0 2.0 0a1.0 1.0 0 1 0 -2.0 0M630.0 403a1.0 1.0 0 1 0 2.0 0a1.0 1.0 0 1 0 -2.0 0M429.0 254a1.0 1.0 0 1 0 2.0 0a1.0 1.0 0 1 0 -2.0 0M671.1 168a1.0 1.0 0 1 0 2.0 0a1.0 1.0 0 1 0 -2.0 0M662.3 482a1.0 1.0 0 1 0 2.0 0a1.0 1.0 0 1 0 -2.0 0M968.1 464a1.0 1.0 0 1 0 2.0 0a1.0 1.0 0 1 0 -2.0 0"/><path fill="#fff" fill-opacity="0.45" d="M676.8 311a0.8 0.8 0 1 0 1.6 0a0.8 0.8 0 1 0 -1.6 0M877.8 544a0.8 0.8 0 1 0 1.6 0a0.8 0.8 0 1 0 -1.6 0M509.6 217a0.8 0.8 0 1 0 1.6 0a0.8 0.8 0 1 0 -1.6 0M744.3 464a0.8 0.8 0 1 0 1.6 0a0.8 0.8 0 1 0 -1.6 0M533.9 313a0.8 0.8 0 1 0 1.6 0a0.8 0.8 0 1 0 -1.6 0M680.8 496a0.8 0.8 0 1 0 1.6 0a0.8 0.8 0 1 0 -1.6 0M673.1 297a0.8 0.8 0 1 0 1.6 0a0.8 0.8 0 1 0 -1.6 0M619.8 304a0.8 0.8 0 1 0 1.6 0a0.8 0.8 0 1 0 -1.6 0M417.8 535a0.8 0.8 0 1 0 1.6 0a0.8 0.8 0 1 0 -1.6 0M452.1 192a0.8 0.8 0 1 0 1.6 0a0.8 0.8 0 1 0 -1.6 0M383.8 249a0.8 0.8 0 1 0 1.6 0a0.8 0.8 0 1 0 -1.6 0M889.4 236a0.8 0.8 0 1 0 1.6 0a0.8 0.8 0 1 0 -1.6 0M451.4 213a0.8 0.8 0 1 0 1.6 0a0.8 0.8 0 1 0 -1.6 0M433.0 313a0.8 0.8 0 1 0 1.6 0a0.8 0.8 0 1 0 -1.6 0M833.5 441a0.8 0.8 0 1 0 1.6 0a0.8 0.8 0 1 0 -1.6 0M771.4 392a0.8 0.8 0 1 0 1.6 0a0.8 0.8 0 1 0 -1.6 0M920.6 470a0.8 0.8 0 1 0 1.6 0a0.8 0.8 0 1 0 -1.6 0M761.0 509a0.8 0.8 0 1 0 1.6 0a0.8 0.8 0 1 0 -1.6 0M1001.8 316a0.8 0.8 0 1 0 1.6 0a0.8 0.8 0 1 0 -1.6 0M717.0 182a0.8 0.8 0 1 0 1.6 0a0.8 0.8 0 1 0 -1.6 0M977.8 242a0.8 0.8 0 1 0 1.6 0a0.8 0.8 0 1 0 -1.6 0M971.0 171a0.8 0.8 0 1 0 1.6 0a0.8 0.8 0 1 0 -1.6 0M945.9 472a0.8 0.8 0 1 0 1.6 0a0.8 0.8 0 1 0 -1.6 0M438.0 163a0.8 0.8 0 1 0 1.6 0a0.8 0.8 0 1 0 -1.6 0M478.4 496a0.8 0.8 0 1 0 1.6 0a0.8 0.8 0 1 0 -1.6 0M923.1 304a0.8 0.8 0 1 0 1.6 0a0.8 0.8 0 1 0 -1.6 0M492.8 572a0.8 0.8 0 1 0 1.6 0a0.8 0.8 0 1 0 -1.6 0M975.9 420a0.8 0.8 0 1 0 1.6 0a0.8 0.8 0 1 0 -1.6 0M676.2 214a0.8 0.8 0 1 0 1.6 0a0.8 0.8 0 1 0 -1.6 0M396.3 294a0.8 0.8 0 1 0 1.6 0a0.8 0.8 0 1 0 -1.6 0M960.9 387a0.8 0.8 0 1 0 1.6 0a0.8 0.8 0 1 0 -1.6 0M931.8 487a0.8 0.8 0 1 0 1.6 0a0.8 0.8 0 1 0 -1.6 0M708.3 217a0.8 0.8 0 1 0 1.6 0a0.8 0.8 0 1 0 -1.6 0M429.7 429a0.8 0.8 0 1 0 1.6 0a0.8 0.8 0 1 0 -1.6 0M435.1 375a0.8 0.8 0 1 0 1.6 0a0.8 0.8 0 1 0 -1.6 0M988.3 375a0.8 0.8 0 1 0 1.6 0a0.8 0.8 0 1 0 -1.6 0M807.9 162a0.8 0.8 0 1 0 1.6 0a0.8 0.8 0 1 0 -1.6 0M574.2 206a0.8 0.8 0 1 0 1.6 0a0.8 0.8 0 1 0 -1.6 0M605.4 516a0.8 0.8 0 1 0 1.6 0a0.8 0.8 0 1 0 -1.6 0M484.5 378a0.8 0.8 0 1 0 1.6 0a0.8 0.8 0 1 0 -1.6 0M410.5 504a0.8 0.8 0 1 0 1.6 0a0.8 0.8 0 1 0 -1.6 0M949.8 565a0.8 0.8 0 1 0 1.6 0a0.8 0.8 0 1 0 -1.6 0M883.9 341a0.8 0.8 0 1 0 1.6 0a0.8 0.8 0 1 0 -1.6 0"/><path fill="#fff" fill-opacity="0.45" d="M850.4 173a1.0 1.0 0 1 0 2.0 0a1.0 1.0 0 1 0 -2.0 0M577.2 241a1.0 1.0 0 1 0 2.0 0a1.0 1.0 0 1 0 -2.0 0M819.5 480a1.0 1.0 0 1 0 2.0 0a1.0 1.0 0 1 0 -2.0 0M916.9 388a1.0 1.0 0 1 0 2.0 0a1.0 1.0 0 1 0 -2.0 0M393.9 485a1.0 1.0 0 1 0 2.0 0a1.0 1.0 0 1 0 -2.0 0M994.6 503a1.0 1.0 0 1 0 2.0 0a1.0 1.0 0 1 0 -2.0 0M801.3 368a1.0 1.0 0 1 0 2.0 0a1.0 1.0 0 1 0 -2.0 0M681.6 547a1.0 1.0 0 1 0 2.0 0a1.0 1.0 0 1 0 -2.0 0M851.4 289a1.0 1.0 0 1 0 2.0 0a1.0 1.0 0 1 0 -2.0 0M516.9 474a1.0 1.0 0 1 0 2.0 0a1.0 1.0 0 1 0 -2.0 0M997.3 346a1.0 1.0 0 1 0 2.0 0a1.0 1.0 0 1 0 -2.0 0M532.2 278a1.0 1.0 0 1 0 2.0 0a1.0 1.0 0 1 0 -2.0 0M499.3 310a1.0 1.0 0 1 0 2.0 0a1.0 1.0 0 1 0 -2.0 0M598.7 396a1.0 1.0 0 1 0 2.0 0a1.0 1.0 0 1 0 -2.0 0M933.2 487a1.0 1.0 0 1 0 2.0 0a1.0 1.0 0 1 0 -2.0 0M522.1 413a1.0 1.0 0 1 0 2.0 0a1.0 1.0 0 1 0 -2.0 0M658.9 410a1.0 1.0 0 1 0 2.0 0a1.0 1.0 0 1 0 -2.0 0M650.5 257a1.0 1.0 0 1 0 2.0 0a1.0 1.0 0 1 0 -2.0 0M598.5 386a1.0 1.0 0 1 0 2.0 0a1.0 1.0 0 1 0 -2.0 0M450.7 291a1.0 1.0 0 1 0 2.0 0a1.0 1.0 0 1 0 -2.0 0M530.5 250a1.0 1.0 0 1 0 2.0 0a1.0 1.0 0 1 0 -2.0 0M567.8 162a1.0 1.0 0 1 0 2.0 0a1.0 1.0 0 1 0 -2.0 0M395.6 555a1.0 1.0 0 1 0 2.0 0a1.0 1.0 0 1 0 -2.0 0M752.8 402a1.0 1.0 0 1 0 2.0 0a1.0 1.0 0 1 0 -2.0 0M653.9 406a1.0 1.0 0 1 0 2.0 0a1.0 1.0 0 1 0 -2.0 0M537.7 539a1.0 1.0 0 1 0 2.0 0a1.0 1.0 0 1 0 -2.0 0M662.9 293a1.0 1.0 0 1 0 2.0 0a1.0 1.0 0 1 0 -2.0 0M1001.5 547a1.0 1.0 0 1 0 2.0 0a1.0 1.0 0 1 0 -2.0 0M1000.8 498a1.0 1.0 0 1 0 2.0 0a1.0 1.0 0 1 0 -2.0 0M818.6 572a1.0 1.0 0 1 0 2.0 0a1.0 1.0 0 1 0 -2.0 0M488.2 436a1.0 1.0 0 1 0 2.0 0a1.0 1.0 0 1 0 -2.0 0M732.0 550a1.0 1.0 0 1 0 2.0 0a1.0 1.0 0 1 0 -2.0 0M943.5 524a1.0 1.0 0 1 0 2.0 0a1.0 1.0 0 1 0 -2.0 0M879.5 200a1.0 1.0 0 1 0 2.0 0a1.0 1.0 0 1 0 -2.0 0M526.9 498a1.0 1.0 0 1 0 2.0 0a1.0 1.0 0 1 0 -2.0 0M456.3 393a1.0 1.0 0 1 0 2.0 0a1.0 1.0 0 1 0 -2.0 0M866.2 227a1.0 1.0 0 1 0 2.0 0a1.0 1.0 0 1 0 -2.0 0M518.2 463a1.0 1.0 0 1 0 2.0 0a1.0 1.0 0 1 0 -2.0 0M831.8 219a1.0 1.0 0 1 0 2.0 0a1.0 1.0 0 1 0 -2.0 0M972.9 400a1.0 1.0 0 1 0 2.0 0a1.0 1.0 0 1 0 -2.0 0M592.3 377a1.0 1.0 0 1 0 2.0 0a1.0 1.0 0 1 0 -2.0 0M786.0 519a1.0 1.0 0 1 0 2.0 0a1.0 1.0 0 1 0 -2.0 0M645.3 489a1.0 1.0 0 1 0 2.0 0a1.0 1.0 0 1 0 -2.0 0M596.9 263a1.0 1.0 0 1 0 2.0 0a1.0 1.0 0 1 0 -2.0 0"/><path fill="#fff" fill-opacity="0.9" d="M505.0 232a0.8 0.8 0 1 0 1.6 0a0.8 0.8 0 1 0 -1.6 0M532.6 368a0.8 0.8 0 1 0 1.6 0a0.8 0.8 0 1 0 -1.6 0M773.7 165a0.8 0.8 0 1 0 1.6 0a0.8 0.8 0 1 0 -1.6 0M724.6 425a0.8 0.8 0 1 0 1.6 0a0.8 0.8 0 1 0 -1.6 0M679.2 249a0.8 0.8 0 1 0 1.6 0a0.8 0.8 0 1 0 -1.6 0M653.6 497a0.8 0.8 0 1 0 1.6 0a0.8 0.8 0 1 0 -1.6 0M573.3 193a0.8 0.8 0 1 0 1.6 0a0.8 0.8 0 1 0 -1.6 0M968.7 475a0.8 0.8 0 1 0 1.6 0a0.8 0.8 0 1 0 -1.6 0M732.3 464a0.8 0.8 0 1 0 1.6 0a0.8 0.8 0 1 0 -1.6 0M709.2 261a0.8 0.8 0 1 0 1.6 0a0.8 0.8 0 1 0 -1.6 0M500.6 512a0.8 0.8 0 1 0 1.6 0a0.8 0.8 0 1 0 -1.6 0M703.4 391a0.8 0.8 0 1 0 1.6 0a0.8 0.8 0 1 0 -1.6 0M487.7 206a0.8 0.8 0 1 0 1.6 0a0.8 0.8 0 1 0 -1.6 0M696.6 277a0.8 0.8 0 1 0 1.6 0a0.8 0.8 0 1 0 -1.6 0M619.9 433a0.8 0.8 0 1 0 1.6 0a0.8 0.8 0 1 0 -1.6 0M480.2 321a0.8 0.8 0 1 0 1.6 0a0.8 0.8 0 1 0 -1.6 0M958.8 497a0.8 0.8 0 1 0 1.6 0a0.8 0.8 0 1 0 -1.6 0M541.6 420a0.8 0.8 0 1 0 1.6 0a0.8 0.8 0 1 0 -1.6 0M713.4 404a0.8 0.8 0 1 0 1.6 0a0.8 0.8 0 1 0 -1.6 0M979.9 324a0.8 0.8 0 1 0 1.6 0a0.8 0.8 0 1 0 -1.6 0M734.6 226a0.8 0.8 0 1 0 1.6 0a0.8 0.8 0 1 0 -1.6 0M409.1 281a0.8 0.8 0 1 0 1.6 0a0.8 0.8 0 1 0 -1.6 0M571.1 274a0.8 0.8 0 1 0 1.6 0a0.8 0.8 0 1 0 -1.6 0M916.4 245a0.8 0.8 0 1 0 1.6 0a0.8 0.8 0 1 0 -1.6 0M541.1 252a0.8 0.8 0 1 0 1.6 0a0.8 0.8 0 1 0 -1.6 0M990.4 519a0.8 0.8 0 1 0 1.6 0a0.8 0.8 0 1 0 -1.6 0M522.8 308a0.8 0.8 0 1 0 1.6 0a0.8 0.8 0 1 0 -1.6 0M536.8 164a0.8 0.8 0 1 0 1.6 0a0.8 0.8 0 1 0 -1.6 0M455.6 437a0.8 0.8 0 1 0 1.6 0a0.8 0.8 0 1 0 -1.6 0M577.2 381a0.8 0.8 0 1 0 1.6 0a0.8 0.8 0 1 0 -1.6 0M417.5 524a0.8 0.8 0 1 0 1.6 0a0.8 0.8 0 1 0 -1.6 0"/><path fill="#fff" fill-opacity="0.6" d="M502.0 342a1.3 1.3 0 1 0 2.6 0a1.3 1.3 0 1 0 -2.6 0M485.8 301a1.3 1.3 0 1 0 2.6 0a1.3 1.3 0 1 0 -2.6 0M385.1 455a1.3 1.3 0 1 0 2.6 0a1.3 1.3 0 1 0 -2.6 0M815.1 482a1.3 1.3 0 1 0 2.6 0a1.3 1.3 0 1 0 -2.6 0M656.6 372a1.3 1.3 0 1 0 2.6 0a1.3 1.3 0 1 0 -2.6 0M606.4 473a1.3 1.3 0 1 0 2.6 0a1.3 1.3 0 1 0 -2.6 0M659.0 505a1.3 1.3 0 1 0 2.6 0a1.3 1.3 0 1 0 -2.6 0M560.2 479a1.3 1.3 0 1 0 2.6 0a1.3 1.3 0 1 0 -2.6 0M863.6 200a1.3 1.3 0 1 0 2.6 0a1.3 1.3 0 1 0 -2.6 0M377.6 505a1.3 1.3 0 1 0 2.6 0a1.3 1.3 0 1 0 -2.6 0M923.5 338a1.3 1.3 0 1 0 2.6 0a1.3 1.3 0 1 0 -2.6 0M946.8 202a1.3 1.3 0 1 0 2.6 0a1.3 1.3 0 1 0 -2.6 0M431.7 280a1.3 1.3 0 1 0 2.6 0a1.3 1.3 0 1 0 -2.6 0M735.7 389a1.3 1.3 0 1 0 2.6 0a1.3 1.3 0 1 0 -2.6 0M793.4 189a1.3 1.3 0 1 0 2.6 0a1.3 1.3 0 1 0 -2.6 0M769.8 509a1.3 1.3 0 1 0 2.6 0a1.3 1.3 0 1 0 -2.6 0M579.6 386a1.3 1.3 0 1 0 2.6 0a1.3 1.3 0 1 0 -2.6 0M508.3 249a1.3 1.3 0 1 0 2.6 0a1.3 1.3 0 1 0 -2.6 0M441.3 289a1.3 1.3 0 1 0 2.6 0a1.3 1.3 0 1 0 -2.6 0M477.7 521a1.3 1.3 0 1 0 2.6 0a1.3 1.3 0 1 0 -2.6 0M377.1 189a1.3 1.3 0 1 0 2.6 0a1.3 1.3 0 1 0 -2.6 0M740.8 471a1.3 1.3 0 1 0 2.6 0a1.3 1.3 0 1 0 -2.6 0M1006.2 498a1.3 1.3 0 1 0 2.6 0a1.3 1.3 0 1 0 -2.6 0M1002.3 545a1.3 1.3 0 1 0 2.6 0a1.3 1.3 0 1 0 -2.6 0M673.3 538a1.3 1.3 0 1 0 2.6 0a1.3 1.3 0 1 0 -2.6 0M484.8 378a1.3 1.3 0 1 0 2.6 0a1.3 1.3 0 1 0 -2.6 0M914.5 299a1.3 1.3 0 1 0 2.6 0a1.3 1.3 0 1 0 -2.6 0M686.6 173a1.3 1.3 0 1 0 2.6 0a1.3 1.3 0 1 0 -2.6 0M903.5 508a1.3 1.3 0 1 0 2.6 0a1.3 1.3 0 1 0 -2.6 0M856.0 269a1.3 1.3 0 1 0 2.6 0a1.3 1.3 0 1 0 -2.6 0M393.9 225a1.3 1.3 0 1 0 2.6 0a1.3 1.3 0 1 0 -2.6 0M767.9 359a1.3 1.3 0 1 0 2.6 0a1.3 1.3 0 1 0 -2.6 0M389.1 372a1.3 1.3 0 1 0 2.6 0a1.3 1.3 0 1 0 -2.6 0M611.6 445a1.3 1.3 0 1 0 2.6 0a1.3 1.3 0 1 0 -2.6 0"/><path fill="#fff" fill-opacity="0.75" d="M932.4 322a1.0 1.0 0 1 0 2.0 0a1.0 1.0 0 1 0 -2.0 0M403.2 458a1.0 1.0 0 1 0 2.0 0a1.0 1.0 0 1 0 -2.0 0M614.8 399a1.0 1.0 0 1 0 2.0 0a1.0 1.0 0 1 0 -2.0 0M702.1 341a1.0 1.0 0 1 0 2.0 0a1.0 1.0 0 1 0 -2.0 0M736.5 241a1.0 1.0 0 1 0 2.0 0a1.0 1.0 0 1 0 -2.0 0M628.5 292a1.0 1.0 0 1 0 2.0 0a1.0 1.0 0 1 0 -2.0 0M609.8 435a1.0 1.0 0 1 0 2.0 0a1.0 1.0 0 1 0 -2.0 0M826.4 366a1.0 1.0 0 1 0 2.0 0a1.0 1.0 0 1 0 -2.0 0M579.5 324a1.0 1.0 0 1 0 2.0 0a1.0 1.0 0 1 0 -2.0 0M459.7 472a1.0 1.0 0 1 0 2.0 0a1.0 1.0 0 1 0 -2.0 0M444.1 319a1.0 1.0 0 1 0 2.0 0a1.0 1.0 0 1 0 -2.0 0M945.0 468a1.0 1.0 0 1 0 2.0 0a1.0 1.0 0 1 0 -2.0 0M792.4 489a1.0 1.0 0 1 0 2.0 0a1.0 1.0 0 1 0 -2.0 0M411.5 369a1.0 1.0 0 1 0 2.0 0a1.0 1.0 0 1 0 -2.0 0M769.2 367a1.0 1.0 0 1 0 2.0 0a1.0 1.0 0 1 0 -2.0 0M510.4 472a1.0 1.0 0 1 0 2.0 0a1.0 1.0 0 1 0 -2.0 0M900.3 495a1.0 1.0 0 1 0 2.0 0a1.0 1.0 0 1 0 -2.0 0M432.7 433a1.0 1.0 0 1 0 2.0 0a1.0 1.0 0 1 0 -2.0 0M386.5 318a1.0 1.0 0 1 0 2.0 0a1.0 1.0 0 1 0 -2.0 0M482.3 433a1.0 1.0 0 1 0 2.0 0a1.0 1.0 0 1 0 -2.0 0M771.8 273a1.0 1.0 0 1 0 2.0 0a1.0 1.0 0 1 0 -2.0 0M602.4 264a1.0 1.0 0 1 0 2.0 0a1.0 1.0 0 1 0 -2.0 0M534.2 170a1.0 1.0 0 1 0 2.0 0a1.0 1.0 0 1 0 -2.0 0M714.3 438a1.0 1.0 0 1 0 2.0 0a1.0 1.0 0 1 0 -2.0 0M542.5 406a1.0 1.0 0 1 0 2.0 0a1.0 1.0 0 1 0 -2.0 0M493.6 445a1.0 1.0 0 1 0 2.0 0a1.0 1.0 0 1 0 -2.0 0M957.2 171a1.0 1.0 0 1 0 2.0 0a1.0 1.0 0 1 0 -2.0 0M534.6 244a1.0 1.0 0 1 0 2.0 0a1.0 1.0 0 1 0 -2.0 0M887.3 548a1.0 1.0 0 1 0 2.0 0a1.0 1.0 0 1 0 -2.0 0M914.7 365a1.0 1.0 0 1 0 2.0 0a1.0 1.0 0 1 0 -2.0 0M513.8 348a1.0 1.0 0 1 0 2.0 0a1.0 1.0 0 1 0 -2.0 0M790.2 176a1.0 1.0 0 1 0 2.0 0a1.0 1.0 0 1 0 -2.0 0M712.4 215a1.0 1.0 0 1 0 2.0 0a1.0 1.0 0 1 0 -2.0 0M465.4 232a1.0 1.0 0 1 0 2.0 0a1.0 1.0 0 1 0 -2.0 0M858.6 561a1.0 1.0 0 1 0 2.0 0a1.0 1.0 0 1 0 -2.0 0M779.9 523a1.0 1.0 0 1 0 2.0 0a1.0 1.0 0 1 0 -2.0 0M518.0 575a1.0 1.0 0 1 0 2.0 0a1.0 1.0 0 1 0 -2.0 0M463.4 217a1.0 1.0 0 1 0 2.0 0a1.0 1.0 0 1 0 -2.0 0M755.2 296a1.0 1.0 0 1 0 2.0 0a1.0 1.0 0 1 0 -2.0 0M526.7 570a1.0 1.0 0 1 0 2.0 0a1.0 1.0 0 1 0 -2.0 0M520.5 450a1.0 1.0 0 1 0 2.0 0a1.0 1.0 0 1 0 -2.0 0M606.9 298a1.0 1.0 0 1 0 2.0 0a1.0 1.0 0 1 0 -2.0 0"/><path fill="#fff" fill-opacity="0.6" d="M826.0 559a0.8 0.8 0 1 0 1.6 0a0.8 0.8 0 1 0 -1.6 0M946.8 293a0.8 0.8 0 1 0 1.6 0a0.8 0.8 0 1 0 -1.6 0M835.9 418a0.8 0.8 0 1 0 1.6 0a0.8 0.8 0 1 0 -1.6 0M453.3 451a0.8 0.8 0 1 0 1.6 0a0.8 0.8 0 1 0 -1.6 0M759.2 274a0.8 0.8 0 1 0 1.6 0a0.8 0.8 0 1 0 -1.6 0M536.5 240a0.8 0.8 0 1 0 1.6 0a0.8 0.8 0 1 0 -1.6 0M1003.7 470a0.8 0.8 0 1 0 1.6 0a0.8 0.8 0 1 0 -1.6 0M698.8 290a0.8 0.8 0 1 0 1.6 0a0.8 0.8 0 1 0 -1.6 0M901.9 299a0.8 0.8 0 1 0 1.6 0a0.8 0.8 0 1 0 -1.6 0M500.4 315a0.8 0.8 0 1 0 1.6 0a0.8 0.8 0 1 0 -1.6 0M462.3 287a0.8 0.8 0 1 0 1.6 0a0.8 0.8 0 1 0 -1.6 0M609.0 466a0.8 0.8 0 1 0 1.6 0a0.8 0.8 0 1 0 -1.6 0M804.0 213a0.8 0.8 0 1 0 1.6 0a0.8 0.8 0 1 0 -1.6 0M698.3 574a0.8 0.8 0 1 0 1.6 0a0.8 0.8 0 1 0 -1.6 0M812.3 348a0.8 0.8 0 1 0 1.6 0a0.8 0.8 0 1 0 -1.6 0M702.7 293a0.8 0.8 0 1 0 1.6 0a0.8 0.8 0 1 0 -1.6 0M865.7 301a0.8 0.8 0 1 0 1.6 0a0.8 0.8 0 1 0 -1.6 0M616.8 523a0.8 0.8 0 1 0 1.6 0a0.8 0.8 0 1 0 -1.6 0M899.9 320a0.8 0.8 0 1 0 1.6 0a0.8 0.8 0 1 0 -1.6 0M554.8 373a0.8 0.8 0 1 0 1.6 0a0.8 0.8 0 1 0 -1.6 0M723.5 413a0.8 0.8 0 1 0 1.6 0a0.8 0.8 0 1 0 -1.6 0M822.9 252a0.8 0.8 0 1 0 1.6 0a0.8 0.8 0 1 0 -1.6 0M423.1 480a0.8 0.8 0 1 0 1.6 0a0.8 0.8 0 1 0 -1.6 0M914.7 282a0.8 0.8 0 1 0 1.6 0a0.8 0.8 0 1 0 -1.6 0M702.1 390a0.8 0.8 0 1 0 1.6 0a0.8 0.8 0 1 0 -1.6 0M845.3 218a0.8 0.8 0 1 0 1.6 0a0.8 0.8 0 1 0 -1.6 0M723.0 530a0.8 0.8 0 1 0 1.6 0a0.8 0.8 0 1 0 -1.6 0M649.2 524a0.8 0.8 0 1 0 1.6 0a0.8 0.8 0 1 0 -1.6 0M785.4 308a0.8 0.8 0 1 0 1.6 0a0.8 0.8 0 1 0 -1.6 0M624.3 421a0.8 0.8 0 1 0 1.6 0a0.8 0.8 0 1 0 -1.6 0M687.4 498a0.8 0.8 0 1 0 1.6 0a0.8 0.8 0 1 0 -1.6 0M851.0 578a0.8 0.8 0 1 0 1.6 0a0.8 0.8 0 1 0 -1.6 0M743.6 224a0.8 0.8 0 1 0 1.6 0a0.8 0.8 0 1 0 -1.6 0"/><path fill="#fff" fill-opacity="1.0" d="M579.3 508a0.8 0.8 0 1 0 1.6 0a0.8 0.8 0 1 0 -1.6 0M951.4 520a0.8 0.8 0 1 0 1.6 0a0.8 0.8 0 1 0 -1.6 0M891.2 331a0.8 0.8 0 1 0 1.6 0a0.8 0.8 0 1 0 -1.6 0M567.6 203a0.8 0.8 0 1 0 1.6 0a0.8 0.8 0 1 0 -1.6 0M648.3 368a0.8 0.8 0 1 0 1.6 0a0.8 0.8 0 1 0 -1.6 0M771.6 311a0.8 0.8 0 1 0 1.6 0a0.8 0.8 0 1 0 -1.6 0M683.1 330a0.8 0.8 0 1 0 1.6 0a0.8 0.8 0 1 0 -1.6 0M476.2 296a0.8 0.8 0 1 0 1.6 0a0.8 0.8 0 1 0 -1.6 0M895.9 196a0.8 0.8 0 1 0 1.6 0a0.8 0.8 0 1 0 -1.6 0M537.4 387a0.8 0.8 0 1 0 1.6 0a0.8 0.8 0 1 0 -1.6 0M813.4 313a0.8 0.8 0 1 0 1.6 0a0.8 0.8 0 1 0 -1.6 0M388.9 237a0.8 0.8 0 1 0 1.6 0a0.8 0.8 0 1 0 -1.6 0M392.0 306a0.8 0.8 0 1 0 1.6 0a0.8 0.8 0 1 0 -1.6 0M818.8 515a0.8 0.8 0 1 0 1.6 0a0.8 0.8 0 1 0 -1.6 0M552.8 269a0.8 0.8 0 1 0 1.6 0a0.8 0.8 0 1 0 -1.6 0M904.4 562a0.8 0.8 0 1 0 1.6 0a0.8 0.8 0 1 0 -1.6 0M493.6 258a0.8 0.8 0 1 0 1.6 0a0.8 0.8 0 1 0 -1.6 0M1003.5 248a0.8 0.8 0 1 0 1.6 0a0.8 0.8 0 1 0 -1.6 0M919.5 224a0.8 0.8 0 1 0 1.6 0a0.8 0.8 0 1 0 -1.6 0M472.1 392a0.8 0.8 0 1 0 1.6 0a0.8 0.8 0 1 0 -1.6 0M804.4 233a0.8 0.8 0 1 0 1.6 0a0.8 0.8 0 1 0 -1.6 0M531.3 503a0.8 0.8 0 1 0 1.6 0a0.8 0.8 0 1 0 -1.6 0M424.1 264a0.8 0.8 0 1 0 1.6 0a0.8 0.8 0 1 0 -1.6 0M537.1 210a0.8 0.8 0 1 0 1.6 0a0.8 0.8 0 1 0 -1.6 0M827.3 219a0.8 0.8 0 1 0 1.6 0a0.8 0.8 0 1 0 -1.6 0M804.0 268a0.8 0.8 0 1 0 1.6 0a0.8 0.8 0 1 0 -1.6 0M545.2 387a0.8 0.8 0 1 0 1.6 0a0.8 0.8 0 1 0 -1.6 0M809.6 459a0.8 0.8 0 1 0 1.6 0a0.8 0.8 0 1 0 -1.6 0M966.5 188a0.8 0.8 0 1 0 1.6 0a0.8 0.8 0 1 0 -1.6 0M438.5 323a0.8 0.8 0 1 0 1.6 0a0.8 0.8 0 1 0 -1.6 0M685.4 381a0.8 0.8 0 1 0 1.6 0a0.8 0.8 0 1 0 -1.6 0M603.0 332a0.8 0.8 0 1 0 1.6 0a0.8 0.8 0 1 0 -1.6 0M551.5 203a0.8 0.8 0 1 0 1.6 0a0.8 0.8 0 1 0 -1.6 0M654.0 211a0.8 0.8 0 1 0 1.6 0a0.8 0.8 0 1 0 -1.6 0M928.4 236a0.8 0.8 0 1 0 1.6 0a0.8 0.8 0 1 0 -1.6 0M916.5 392a0.8 0.8 0 1 0 1.6 0a0.8 0.8 0 1 0 -1.6 0M674.1 356a0.8 0.8 0 1 0 1.6 0a0.8 0.8 0 1 0 -1.6 0"/><path fill="#fff" fill-opacity="0.75" d="M632.4 241a1.3 1.3 0 1 0 2.6 0a1.3 1.3 0 1 0 -2.6 0M523.5 471a1.3 1.3 0 1 0 2.6 0a1.3 1.3 0 1 0 -2.6 0M449.5 373a1.3 1.3 0 1 0 2.6 0a1.3 1.3 0 1 0 -2.6 0M433.3 351a1.3 1.3 0 1 0 2.6 0a1.3 1.3 0 1 0 -2.6 0M971.1 392a1.3 1.3 0 1 0 2.6 0a1.3 1.3 0 1 0 -2.6 0M992.6 494a1.3 1.3 0 1 0 2.6 0a1.3 1.3 0 1 0 -2.6 0M786.9 289a1.3 1.3 0 1 0 2.6 0a1.3 1.3 0 1 0 -2.6 0M638.7 232a1.3 1.3 0 1 0 2.6 0a1.3 1.3 0 1 0 -2.6 0M426.6 506a1.3 1.3 0 1 0 2.6 0a1.3 1.3 0 1 0 -2.6 0M825.7 266a1.3 1.3 0 1 0 2.6 0a1.3 1.3 0 1 0 -2.6 0M976.7 481a1.3 1.3 0 1 0 2.6 0a1.3 1.3 0 1 0 -2.6 0M811.6 314a1.3 1.3 0 1 0 2.6 0a1.3 1.3 0 1 0 -2.6 0M570.1 340a1.3 1.3 0 1 0 2.6 0a1.3 1.3 0 1 0 -2.6 0M464.1 218a1.3 1.3 0 1 0 2.6 0a1.3 1.3 0 1 0 -2.6 0M815.5 173a1.3 1.3 0 1 0 2.6 0a1.3 1.3 0 1 0 -2.6 0M767.7 473a1.3 1.3 0 1 0 2.6 0a1.3 1.3 0 1 0 -2.6 0M999.9 173a1.3 1.3 0 1 0 2.6 0a1.3 1.3 0 1 0 -2.6 0M510.1 346a1.3 1.3 0 1 0 2.6 0a1.3 1.3 0 1 0 -2.6 0M607.2 202a1.3 1.3 0 1 0 2.6 0a1.3 1.3 0 1 0 -2.6 0M784.2 359a1.3 1.3 0 1 0 2.6 0a1.3 1.3 0 1 0 -2.6 0M600.8 359a1.3 1.3 0 1 0 2.6 0a1.3 1.3 0 1 0 -2.6 0M960.5 513a1.3 1.3 0 1 0 2.6 0a1.3 1.3 0 1 0 -2.6 0M606.0 163a1.3 1.3 0 1 0 2.6 0a1.3 1.3 0 1 0 -2.6 0M702.0 511a1.3 1.3 0 1 0 2.6 0a1.3 1.3 0 1 0 -2.6 0M530.7 326a1.3 1.3 0 1 0 2.6 0a1.3 1.3 0 1 0 -2.6 0M687.1 414a1.3 1.3 0 1 0 2.6 0a1.3 1.3 0 1 0 -2.6 0M629.2 200a1.3 1.3 0 1 0 2.6 0a1.3 1.3 0 1 0 -2.6 0M529.9 382a1.3 1.3 0 1 0 2.6 0a1.3 1.3 0 1 0 -2.6 0"/><path fill="#fff" fill-opacity="0.75" d="M714.8 176a0.7 0.7 0 1 0 1.4 0a0.7 0.7 0 1 0 -1.4 0M449.7 206a0.7 0.7 0 1 0 1.4 0a0.7 0.7 0 1 0 -1.4 0M417.4 544a0.7 0.7 0 1 0 1.4 0a0.7 0.7 0 1 0 -1.4 0M641.3 197a0.7 0.7 0 1 0 1.4 0a0.7 0.7 0 1 0 -1.4 0M546.8 312a0.7 0.7 0 1 0 1.4 0a0.7 0.7 0 1 0 -1.4 0M797.7 223a0.7 0.7 0 1 0 1.4 0a0.7 0.7 0 1 0 -1.4 0M985.5 506a0.7 0.7 0 1 0 1.4 0a0.7 0.7 0 1 0 -1.4 0M746.8 555a0.7 0.7 0 1 0 1.4 0a0.7 0.7 0 1 0 -1.4 0M963.4 561a0.7 0.7 0 1 0 1.4 0a0.7 0.7 0 1 0 -1.4 0M840.7 460a0.7 0.7 0 1 0 1.4 0a0.7 0.7 0 1 0 -1.4 0M623.2 286a0.7 0.7 0 1 0 1.4 0a0.7 0.7 0 1 0 -1.4 0M480.2 241a0.7 0.7 0 1 0 1.4 0a0.7 0.7 0 1 0 -1.4 0M510.7 350a0.7 0.7 0 1 0 1.4 0a0.7 0.7 0 1 0 -1.4 0M641.8 442a0.7 0.7 0 1 0 1.4 0a0.7 0.7 0 1 0 -1.4 0M969.7 191a0.7 0.7 0 1 0 1.4 0a0.7 0.7 0 1 0 -1.4 0M535.5 472a0.7 0.7 0 1 0 1.4 0a0.7 0.7 0 1 0 -1.4 0M936.4 192a0.7 0.7 0 1 0 1.4 0a0.7 0.7 0 1 0 -1.4 0M613.6 436a0.7 0.7 0 1 0 1.4 0a0.7 0.7 0 1 0 -1.4 0M726.7 179a0.7 0.7 0 1 0 1.4 0a0.7 0.7 0 1 0 -1.4 0M607.1 336a0.7 0.7 0 1 0 1.4 0a0.7 0.7 0 1 0 -1.4 0M791.1 563a0.7 0.7 0 1 0 1.4 0a0.7 0.7 0 1 0 -1.4 0M651.4 404a0.7 0.7 0 1 0 1.4 0a0.7 0.7 0 1 0 -1.4 0M546.5 396a0.7 0.7 0 1 0 1.4 0a0.7 0.7 0 1 0 -1.4 0M752.7 271a0.7 0.7 0 1 0 1.4 0a0.7 0.7 0 1 0 -1.4 0M653.9 269a0.7 0.7 0 1 0 1.4 0a0.7 0.7 0 1 0 -1.4 0M942.0 441a0.7 0.7 0 1 0 1.4 0a0.7 0.7 0 1 0 -1.4 0M486.8 289a0.7 0.7 0 1 0 1.4 0a0.7 0.7 0 1 0 -1.4 0M914.0 252a0.7 0.7 0 1 0 1.4 0a0.7 0.7 0 1 0 -1.4 0M942.5 357a0.7 0.7 0 1 0 1.4 0a0.7 0.7 0 1 0 -1.4 0M872.1 358a0.7 0.7 0 1 0 1.4 0a0.7 0.7 0 1 0 -1.4 0M547.2 477a0.7 0.7 0 1 0 1.4 0a0.7 0.7 0 1 0 -1.4 0M537.3 330a0.7 0.7 0 1 0 1.4 0a0.7 0.7 0 1 0 -1.4 0M568.9 453a0.7 0.7 0 1 0 1.4 0a0.7 0.7 0 1 0 -1.4 0M713.6 444a0.7 0.7 0 1 0 1.4 0a0.7 0.7 0 1 0 -1.4 0"/><path fill="#fff" fill-opacity="0.75" d="M512.0 538a0.6 0.6 0 1 0 1.2 0a0.6 0.6 0 1 0 -1.2 0M399.9 226a0.6 0.6 0 1 0 1.2 0a0.6 0.6 0 1 0 -1.2 0M938.3 217a0.6 0.6 0 1 0 1.2 0a0.6 0.6 0 1 0 -1.2 0M633.4 464a0.6 0.6 0 1 0 1.2 0a0.6 0.6 0 1 0 -1.2 0M566.0 486a0.6 0.6 0 1 0 1.2 0a0.6 0.6 0 1 0 -1.2 0M512.0 438a0.6 0.6 0 1 0 1.2 0a0.6 0.6 0 1 0 -1.2 0M794.0 416a0.6 0.6 0 1 0 1.2 0a0.6 0.6 0 1 0 -1.2 0M640.8 301a0.6 0.6 0 1 0 1.2 0a0.6 0.6 0 1 0 -1.2 0M564.2 466a0.6 0.6 0 1 0 1.2 0a0.6 0.6 0 1 0 -1.2 0M863.7 379a0.6 0.6 0 1 0 1.2 0a0.6 0.6 0 1 0 -1.2 0M703.5 310a0.6 0.6 0 1 0 1.2 0a0.6 0.6 0 1 0 -1.2 0M729.6 309a0.6 0.6 0 1 0 1.2 0a0.6 0.6 0 1 0 -1.2 0M544.0 205a0.6 0.6 0 1 0 1.2 0a0.6 0.6 0 1 0 -1.2 0M917.3 233a0.6 0.6 0 1 0 1.2 0a0.6 0.6 0 1 0 -1.2 0M650.4 225a0.6 0.6 0 1 0 1.2 0a0.6 0.6 0 1 0 -1.2 0M799.2 341a0.6 0.6 0 1 0 1.2 0a0.6 0.6 0 1 0 -1.2 0M863.1 245a0.6 0.6 0 1 0 1.2 0a0.6 0.6 0 1 0 -1.2 0M665.6 373a0.6 0.6 0 1 0 1.2 0a0.6 0.6 0 1 0 -1.2 0M798.9 226a0.6 0.6 0 1 0 1.2 0a0.6 0.6 0 1 0 -1.2 0M850.3 365a0.6 0.6 0 1 0 1.2 0a0.6 0.6 0 1 0 -1.2 0M785.8 317a0.6 0.6 0 1 0 1.2 0a0.6 0.6 0 1 0 -1.2 0M865.1 297a0.6 0.6 0 1 0 1.2 0a0.6 0.6 0 1 0 -1.2 0M598.8 333a0.6 0.6 0 1 0 1.2 0a0.6 0.6 0 1 0 -1.2 0M543.1 193a0.6 0.6 0 1 0 1.2 0a0.6 0.6 0 1 0 -1.2 0M593.2 231a0.6 0.6 0 1 0 1.2 0a0.6 0.6 0 1 0 -1.2 0M780.6 427a0.6 0.6 0 1 0 1.2 0a0.6 0.6 0 1 0 -1.2 0M416.4 221a0.6 0.6 0 1 0 1.2 0a0.6 0.6 0 1 0 -1.2 0M586.0 549a0.6 0.6 0 1 0 1.2 0a0.6 0.6 0 1 0 -1.2 0M529.7 298a0.6 0.6 0 1 0 1.2 0a0.6 0.6 0 1 0 -1.2 0M582.3 465a0.6 0.6 0 1 0 1.2 0a0.6 0.6 0 1 0 -1.2 0M729.0 345a0.6 0.6 0 1 0 1.2 0a0.6 0.6 0 1 0 -1.2 0M646.6 394a0.6 0.6 0 1 0 1.2 0a0.6 0.6 0 1 0 -1.2 0M798.8 522a0.6 0.6 0 1 0 1.2 0a0.6 0.6 0 1 0 -1.2 0M773.9 417a0.6 0.6 0 1 0 1.2 0a0.6 0.6 0 1 0 -1.2 0M436.1 531a0.6 0.6 0 1 0 1.2 0a0.6 0.6 0 1 0 -1.2 0M968.8 248a0.6 0.6 0 1 0 1.2 0a0.6 0.6 0 1 0 -1.2 0M618.3 235a0.6 0.6 0 1 0 1.2 0a0.6 0.6 0 1 0 -1.2 0M713.4 204a0.6 0.6 0 1 0 1.2 0a0.6 0.6 0 1 0 -1.2 0M960.1 388a0.6 0.6 0 1 0 1.2 0a0.6 0.6 0 1 0 -1.2 0M766.2 437a0.6 0.6 0 1 0 1.2 0a0.6 0.6 0 1 0 -1.2 0M394.0 495a0.6 0.6 0 1 0 1.2 0a0.6 0.6 0 1 0 -1.2 0M648.2 411a0.6 0.6 0 1 0 1.2 0a0.6 0.6 0 1 0 -1.2 0M710.5 406a0.6 0.6 0 1 0 1.2 0a0.6 0.6 0 1 0 -1.2 0M424.8 579a0.6 0.6 0 1 0 1.2 0a0.6 0.6 0 1 0 -1.2 0"/><path fill="#fff" fill-opacity="0.9" d="M700.8 167a0.6 0.6 0 1 0 1.2 0a0.6 0.6 0 1 0 -1.2 0M754.4 479a0.6 0.6 0 1 0 1.2 0a0.6 0.6 0 1 0 -1.2 0M647.2 316a0.6 0.6 0 1 0 1.2 0a0.6 0.6 0 1 0 -1.2 0M929.6 194a0.6 0.6 0 1 0 1.2 0a0.6 0.6 0 1 0 -1.2 0M477.5 285a0.6 0.6 0 1 0 1.2 0a0.6 0.6 0 1 0 -1.2 0M552.1 429a0.6 0.6 0 1 0 1.2 0a0.6 0.6 0 1 0 -1.2 0M525.4 426a0.6 0.6 0 1 0 1.2 0a0.6 0.6 0 1 0 -1.2 0M523.2 238a0.6 0.6 0 1 0 1.2 0a0.6 0.6 0 1 0 -1.2 0M1003.1 332a0.6 0.6 0 1 0 1.2 0a0.6 0.6 0 1 0 -1.2 0M415.8 254a0.6 0.6 0 1 0 1.2 0a0.6 0.6 0 1 0 -1.2 0M749.0 232a0.6 0.6 0 1 0 1.2 0a0.6 0.6 0 1 0 -1.2 0M712.5 173a0.6 0.6 0 1 0 1.2 0a0.6 0.6 0 1 0 -1.2 0M735.8 371a0.6 0.6 0 1 0 1.2 0a0.6 0.6 0 1 0 -1.2 0M413.2 481a0.6 0.6 0 1 0 1.2 0a0.6 0.6 0 1 0 -1.2 0M961.3 530a0.6 0.6 0 1 0 1.2 0a0.6 0.6 0 1 0 -1.2 0M447.9 525a0.6 0.6 0 1 0 1.2 0a0.6 0.6 0 1 0 -1.2 0M410.2 175a0.6 0.6 0 1 0 1.2 0a0.6 0.6 0 1 0 -1.2 0M646.3 394a0.6 0.6 0 1 0 1.2 0a0.6 0.6 0 1 0 -1.2 0M676.3 168a0.6 0.6 0 1 0 1.2 0a0.6 0.6 0 1 0 -1.2 0M486.6 229a0.6 0.6 0 1 0 1.2 0a0.6 0.6 0 1 0 -1.2 0M967.9 440a0.6 0.6 0 1 0 1.2 0a0.6 0.6 0 1 0 -1.2 0M766.5 229a0.6 0.6 0 1 0 1.2 0a0.6 0.6 0 1 0 -1.2 0M742.1 537a0.6 0.6 0 1 0 1.2 0a0.6 0.6 0 1 0 -1.2 0M984.6 487a0.6 0.6 0 1 0 1.2 0a0.6 0.6 0 1 0 -1.2 0M840.5 173a0.6 0.6 0 1 0 1.2 0a0.6 0.6 0 1 0 -1.2 0M967.3 382a0.6 0.6 0 1 0 1.2 0a0.6 0.6 0 1 0 -1.2 0M936.0 553a0.6 0.6 0 1 0 1.2 0a0.6 0.6 0 1 0 -1.2 0M943.8 271a0.6 0.6 0 1 0 1.2 0a0.6 0.6 0 1 0 -1.2 0M609.4 429a0.6 0.6 0 1 0 1.2 0a0.6 0.6 0 1 0 -1.2 0M913.4 391a0.6 0.6 0 1 0 1.2 0a0.6 0.6 0 1 0 -1.2 0M811.6 284a0.6 0.6 0 1 0 1.2 0a0.6 0.6 0 1 0 -1.2 0M996.9 260a0.6 0.6 0 1 0 1.2 0a0.6 0.6 0 1 0 -1.2 0M418.7 354a0.6 0.6 0 1 0 1.2 0a0.6 0.6 0 1 0 -1.2 0M680.2 248a0.6 0.6 0 1 0 1.2 0a0.6 0.6 0 1 0 -1.2 0M920.2 391a0.6 0.6 0 1 0 1.2 0a0.6 0.6 0 1 0 -1.2 0M875.2 549a0.6 0.6 0 1 0 1.2 0a0.6 0.6 0 1 0 -1.2 0M612.3 362a0.6 0.6 0 1 0 1.2 0a0.6 0.6 0 1 0 -1.2 0M475.8 425a0.6 0.6 0 1 0 1.2 0a0.6 0.6 0 1 0 -1.2 0M672.3 373a0.6 0.6 0 1 0 1.2 0a0.6 0.6 0 1 0 -1.2 0M382.1 477a0.6 0.6 0 1 0 1.2 0a0.6 0.6 0 1 0 -1.2 0"/><path fill="#fff" fill-opacity="0.5" d="M694 367h1v1h-1zM723 337h1v1h-1zM698 367h1v1h-1zM717 358h1v1h-1zM686 392h1v1h-1zM699 367h1v1h-1zM702 378h1v1h-1zM732 365h1v1h-1zM693 357h1v1h-1zM717 355h1v1h-1zM663 367h1v1h-1zM701 351h1v1h-1zM718 372h1v1h-1zM689 392h1v1h-1zM667 377h1v1h-1zM703 372h1v1h-1zM694 381h1v1h-1zM698 367h1v1h-1zM693 368h1v1h-1zM730 410h1v1h-1zM688 364h1v1h-1zM695 367h1v1h-1zM713 364h1v1h-1zM684 375h1v1h-1zM691 368h1v1h-1zM696 385h1v1h-1zM721 366h1v1h-1zM689 322h1v1h-1zM723 380h1v1h-1zM712 358h1v1h-1zM716 394h1v1h-1zM684 379h1v1h-1zM703 376h1v1h-1zM698 368h1v1h-1zM679 355h1v1h-1zM695 367h1v1h-1zM690 372h1v1h-1zM711 369h1v1h-1zM679 344h1v1h-1zM702 370h1v1h-1zM699 374h1v1h-1zM682 331h1v1h-1zM707 350h1v1h-1zM665 388h1v1h-1zM640 372h1v1h-1zM703 380h1v1h-1zM701 350h1v1h-1zM702 356h1v1h-1zM657 348h1v1h-1zM707 372h1v1h-1zM703 364h1v1h-1zM710 335h1v1h-1zM693 388h1v1h-1zM691 334h1v1h-1zM695 366h1v1h-1zM701 413h1v1h-1zM758 381h1v1h-1zM702 323h1v1h-1zM673 362h1v1h-1zM675 361h1v1h-1zM716 379h1v1h-1zM705 366h1v1h-1zM649 393h1v1h-1zM707 336h1v1h-1zM697 368h1v1h-1zM696 355h1v1h-1zM705 364h1v1h-1zM695 373h1v1h-1zM701 368h1v1h-1zM687 388h1v1h-1zM703 371h1v1h-1zM698 369h1v1h-1zM704 338h1v1h-1zM667 367h1v1h-1zM727 368h1v1h-1zM677 398h1v1h-1zM666 372h1v1h-1zM698 365h1v1h-1zM698 367h1v1h-1zM717 385h1v1h-1zM713 386h1v1h-1zM701 380h1v1h-1zM681 371h1v1h-1zM696 351h1v1h-1zM730 362h1v1h-1zM729 345h1v1h-1zM700 365h1v1h-1zM719 360h1v1h-1zM660 364h1v1h-1zM665 411h1v1h-1zM738 384h1v1h-1zM707 379h1v1h-1zM734 395h1v1h-1zM681 375h1v1h-1zM698 367h1v1h-1zM690 396h1v1h-1zM660 365h1v1h-1zM691 404h1v1h-1zM697 377h1v1h-1zM700 363h1v1h-1zM694 367h1v1h-1zM738 356h1v1h-1zM696 365h1v1h-1zM684 358h1v1h-1zM697 364h1v1h-1zM657 382h1v1h-1zM660 354h1v1h-1zM719 380h1v1h-1zM721 377h1v1h-1zM711 333h1v1h-1zM719 344h1v1h-1zM743 367h1v1h-1zM646 376h1v1h-1zM715 356h1v1h-1zM688 334h1v1h-1zM691 341h1v1h-1zM701 375h1v1h-1zM672 368h1v1h-1zM684 372h1v1h-1zM701 365h1v1h-1zM702 343h1v1h-1zM656 361h1v1h-1zM719 349h1v1h-1zM698 366h1v1h-1zM691 346h1v1h-1zM717 365h1v1h-1zM707 389h1v1h-1zM695 376h1v1h-1zM719 372h1v1h-1zM682 351h1v1h-1zM700 360h1v1h-1zM696 358h1v1h-1zM689 370h1v1h-1zM687 350h1v1h-1zM702 361h1v1h-1zM709 370h1v1h-1zM670 325h1v1h-1zM731 360h1v1h-1zM702 365h1v1h-1zM697 368h1v1h-1zM694 400h1v1h-1zM706 366h1v1h-1zM694 355h1v1h-1zM688 401h1v1h-1zM711 364h1v1h-1zM683 357h1v1h-1zM684 350h1v1h-1zM699 363h1v1h-1zM674 373h1v1h-1zM734 387h1v1h-1zM705 360h1v1h-1zM700 355h1v1h-1zM681 348h1v1h-1zM682 352h1v1h-1zM699 368h1v1h-1zM742 363h1v1h-1zM694 357h1v1h-1zM660 389h1v1h-1zM669 363h1v1h-1zM690 390h1v1h-1zM710 381h1v1h-1zM686 384h1v1h-1zM704 380h1v1h-1zM683 341h1v1h-1zM674 367h1v1h-1zM697 362h1v1h-1zM724 378h1v1h-1zM688 373h1v1h-1zM729 362h1v1h-1zM697 368h1v1h-1zM656 368h1v1h-1zM689 391h1v1h-1zM722 353h1v1h-1zM689 373h1v1h-1zM717 360h1v1h-1zM650 390h1v1h-1zM696 347h1v1h-1zM746 390h1v1h-1zM707 382h1v1h-1zM685 329h1v1h-1zM716 386h1v1h-1zM695 391h1v1h-1zM689 327h1v1h-1zM711 373h1v1h-1zM703 360h1v1h-1zM700 369h1v1h-1zM699 379h1v1h-1zM699 370h1v1h-1zM694 359h1v1h-1zM700 369h1v1h-1zM701 408h1v1h-1zM692 370h1v1h-1zM686 396h1v1h-1zM717 322h1v1h-1zM716 324h1v1h-1zM696 369h1v1h-1zM674 382h1v1h-1zM672 345h1v1h-1zM710 372h1v1h-1zM711 393h1v1h-1zM685 339h1v1h-1zM697 368h1v1h-1zM662 321h1v1h-1zM638 362h1v1h-1zM697 334h1v1h-1zM700 368h1v1h-1zM649 392h1v1h-1zM705 387h1v1h-1zM673 403h1v1h-1zM707 368h1v1h-1zM685 381h1v1h-1zM726 351h1v1h-1zM704 365h1v1h-1zM734 371h1v1h-1zM692 368h1v1h-1zM681 375h1v1h-1zM660 358h1v1h-1zM720 367h1v1h-1zM710 358h1v1h-1zM708 392h1v1h-1zM698 386h1v1h-1zM660 365h1v1h-1zM711 388h1v1h-1zM700 350h1v1h-1zM665 369h1v1h-1zM694 368h1v1h-1zM715 352h1v1h-1zM704 363h1v1h-1zM697 370h1v1h-1zM699 351h1v1h-1zM723 361h1v1h-1zM710 367h1v1h-1zM705 360h1v1h-1zM691 339h1v1h-1zM702 371h1v1h-1zM702 368h1v1h-1zM689 380h1v1h-1zM697 354h1v1h-1zM688 360h1v1h-1zM704 377h1v1h-1zM697 344h1v1h-1zM707 364h1v1h-1zM738 337h1v1h-1zM736 368h1v1h-1zM694 373h1v1h-1zM701 366h1v1h-1zM705 373h1v1h-1zM716 356h1v1h-1zM703 352h1v1h-1zM685 359h1v1h-1zM679 353h1v1h-1zM718 360h1v1h-1zM689 317h1v1h-1zM698 343h1v1h-1zM705 378h1v1h-1zM676 393h1v1h-1zM744 376h1v1h-1zM715 397h1v1h-1zM697 362h1v1h-1zM698 365h1v1h-1zM701 378h1v1h-1zM689 336h1v1h-1zM727 352h1v1h-1zM689 388h1v1h-1zM691 369h1v1h-1zM684 341h1v1h-1zM693 392h1v1h-1zM690 372h1v1h-1zM690 390h1v1h-1zM684 359h1v1h-1zM733 407h1v1h-1zM674 369h1v1h-1zM714 343h1v1h-1zM696 378h1v1h-1zM715 391h1v1h-1zM678 346h1v1h-1zM689 373h1v1h-1zM705 374h1v1h-1zM696 367h1v1h-1zM703 353h1v1h-1zM701 380h1v1h-1zM697 366h1v1h-1zM668 344h1v1h-1zM698 374h1v1h-1zM681 349h1v1h-1zM697 355h1v1h-1zM689 362h1v1h-1zM693 373h1v1h-1zM685 357h1v1h-1zM702 390h1v1h-1zM694 368h1v1h-1zM698 377h1v1h-1zM721 361h1v1h-1zM647 362h1v1h-1zM655 363h1v1h-1zM684 397h1v1h-1zM713 370h1v1h-1zM697 368h1v1h-1zM651 346h1v1h-1zM671 369h1v1h-1zM689 340h1v1h-1zM696 367h1v1h-1zM695 366h1v1h-1zM690 420h1v1h-1zM684 352h1v1h-1zM694 357h1v1h-1zM688 360h1v1h-1zM700 354h1v1h-1zM697 369h1v1h-1zM697 350h1v1h-1zM706 349h1v1h-1zM692 384h1v1h-1zM696 366h1v1h-1zM681 347h1v1h-1zM695 392h1v1h-1zM697 368h1v1h-1zM699 370h1v1h-1zM708 344h1v1h-1zM686 375h1v1h-1zM686 340h1v1h-1zM646 361h1v1h-1zM702 366h1v1h-1zM728 353h1v1h-1zM724 374h1v1h-1zM700 367h1v1h-1zM720 358h1v1h-1zM714 363h1v1h-1zM734 396h1v1h-1zM692 361h1v1h-1z"/><path fill="#fff" fill-opacity="0.7" d="M686 366h1v1h-1zM711 368h1v1h-1zM694 344h1v1h-1zM716 381h1v1h-1zM689 372h1v1h-1zM697 367h1v1h-1zM711 393h1v1h-1zM680 379h1v1h-1zM681 346h1v1h-1zM735 324h1v1h-1zM687 371h1v1h-1zM690 361h1v1h-1zM687 362h1v1h-1zM658 339h1v1h-1zM730 357h1v1h-1zM698 367h1v1h-1zM685 355h1v1h-1zM687 369h1v1h-1zM698 372h1v1h-1zM700 356h1v1h-1zM708 379h1v1h-1zM686 373h1v1h-1zM695 366h1v1h-1zM701 371h1v1h-1zM677 345h1v1h-1zM703 365h1v1h-1zM698 384h1v1h-1zM692 375h1v1h-1zM713 387h1v1h-1zM699 373h1v1h-1zM680 370h1v1h-1zM697 368h1v1h-1zM701 363h1v1h-1zM668 358h1v1h-1zM725 371h1v1h-1zM700 399h1v1h-1zM700 393h1v1h-1zM652 338h1v1h-1zM693 379h1v1h-1zM680 367h1v1h-1zM707 372h1v1h-1zM734 357h1v1h-1zM697 369h1v1h-1zM746 354h1v1h-1zM700 387h1v1h-1zM687 368h1v1h-1zM696 356h1v1h-1zM711 372h1v1h-1zM709 353h1v1h-1zM675 398h1v1h-1zM693 377h1v1h-1zM712 375h1v1h-1zM702 363h1v1h-1zM708 371h1v1h-1zM689 374h1v1h-1zM690 327h1v1h-1zM661 386h1v1h-1zM689 366h1v1h-1zM758 363h1v1h-1zM721 376h1v1h-1zM706 371h1v1h-1zM711 398h1v1h-1zM691 372h1v1h-1zM684 365h1v1h-1zM682 363h1v1h-1zM711 375h1v1h-1zM683 349h1v1h-1zM694 370h1v1h-1zM717 380h1v1h-1zM696 347h1v1h-1zM709 379h1v1h-1zM749 418h1v1h-1zM717 359h1v1h-1zM699 375h1v1h-1zM719 401h1v1h-1zM708 386h1v1h-1zM666 372h1v1h-1zM719 355h1v1h-1zM695 368h1v1h-1zM673 368h1v1h-1zM702 361h1v1h-1zM695 375h1v1h-1zM688 366h1v1h-1zM697 368h1v1h-1zM691 358h1v1h-1zM680 354h1v1h-1zM675 358h1v1h-1zM694 373h1v1h-1zM702 371h1v1h-1zM699 370h1v1h-1zM694 367h1v1h-1zM682 356h1v1h-1zM685 374h1v1h-1zM695 365h1v1h-1zM681 362h1v1h-1zM697 366h1v1h-1zM730 407h1v1h-1zM698 374h1v1h-1zM695 351h1v1h-1zM701 299h1v1h-1zM734 348h1v1h-1zM666 367h1v1h-1zM682 385h1v1h-1zM697 399h1v1h-1zM684 399h1v1h-1zM679 372h1v1h-1zM690 377h1v1h-1zM713 391h1v1h-1zM691 372h1v1h-1zM701 350h1v1h-1zM674 370h1v1h-1zM692 356h1v1h-1zM716 319h1v1h-1zM710 369h1v1h-1zM703 365h1v1h-1zM699 404h1v1h-1zM679 389h1v1h-1zM702 360h1v1h-1zM694 365h1v1h-1zM704 365h1v1h-1zM710 360h1v1h-1zM680 377h1v1h-1zM694 357h1v1h-1zM708 353h1v1h-1zM698 368h1v1h-1zM702 374h1v1h-1zM689 349h1v1h-1zM715 382h1v1h-1zM654 405h1v1h-1zM698 369h1v1h-1zM715 411h1v1h-1zM694 389h1v1h-1zM696 371h1v1h-1zM697 368h1v1h-1zM689 358h1v1h-1zM698 369h1v1h-1zM721 387h1v1h-1zM722 339h1v1h-1zM681 307h1v1h-1zM696 368h1v1h-1zM686 385h1v1h-1zM645 393h1v1h-1zM697 369h1v1h-1zM685 383h1v1h-1zM668 363h1v1h-1zM756 362h1v1h-1zM728 381h1v1h-1zM688 371h1v1h-1zM727 301h1v1h-1zM697 364h1v1h-1zM707 360h1v1h-1zM701 365h1v1h-1zM672 419h1v1h-1zM737 373h1v1h-1zM729 391h1v1h-1zM719 357h1v1h-1zM709 381h1v1h-1zM683 372h1v1h-1zM692 367h1v1h-1zM719 367h1v1h-1zM697 371h1v1h-1zM708 382h1v1h-1zM736 349h1v1h-1zM699 370h1v1h-1zM707 345h1v1h-1zM706 350h1v1h-1zM714 376h1v1h-1zM686 365h1v1h-1zM696 374h1v1h-1zM679 406h1v1h-1zM697 372h1v1h-1zM695 368h1v1h-1zM718 435h1v1h-1zM704 350h1v1h-1zM673 371h1v1h-1zM697 367h1v1h-1zM689 427h1v1h-1zM652 356h1v1h-1zM691 344h1v1h-1zM695 378h1v1h-1zM685 349h1v1h-1zM703 363h1v1h-1zM697 369h1v1h-1zM698 357h1v1h-1zM665 352h1v1h-1zM697 387h1v1h-1zM690 340h1v1h-1zM715 366h1v1h-1zM716 397h1v1h-1zM709 336h1v1h-1zM724 362h1v1h-1zM696 369h1v1h-1zM694 352h1v1h-1zM676 350h1v1h-1zM706 374h1v1h-1zM661 319h1v1h-1zM703 368h1v1h-1zM689 372h1v1h-1zM711 369h1v1h-1zM695 372h1v1h-1zM687 357h1v1h-1zM697 368h1v1h-1zM699 375h1v1h-1zM696 377h1v1h-1zM697 367h1v1h-1zM686 369h1v1h-1zM702 372h1v1h-1zM696 373h1v1h-1zM692 361h1v1h-1zM658 334h1v1h-1zM702 401h1v1h-1zM727 357h1v1h-1zM689 372h1v1h-1zM725 390h1v1h-1zM734 337h1v1h-1zM723 379h1v1h-1zM707 421h1v1h-1zM697 370h1v1h-1zM686 368h1v1h-1zM678 355h1v1h-1zM697 372h1v1h-1zM709 360h1v1h-1zM746 329h1v1h-1zM688 377h1v1h-1zM690 429h1v1h-1zM705 356h1v1h-1zM707 377h1v1h-1zM697 368h1v1h-1zM698 361h1v1h-1zM718 356h1v1h-1zM666 348h1v1h-1zM709 344h1v1h-1zM696 370h1v1h-1zM699 364h1v1h-1zM706 355h1v1h-1zM690 380h1v1h-1zM698 369h1v1h-1zM711 401h1v1h-1zM682 361h1v1h-1zM692 380h1v1h-1zM700 302h1v1h-1zM701 382h1v1h-1zM686 372h1v1h-1zM685 353h1v1h-1zM702 384h1v1h-1zM703 335h1v1h-1zM686 369h1v1h-1zM726 397h1v1h-1zM665 354h1v1h-1zM714 366h1v1h-1zM696 368h1v1h-1zM700 367h1v1h-1zM726 343h1v1h-1zM689 352h1v1h-1zM688 350h1v1h-1zM676 375h1v1h-1zM690 370h1v1h-1zM712 314h1v1h-1zM699 376h1v1h-1zM700 379h1v1h-1zM699 358h1v1h-1zM708 408h1v1h-1zM716 363h1v1h-1zM705 368h1v1h-1zM695 366h1v1h-1zM678 375h1v1h-1zM708 364h1v1h-1zM696 367h1v1h-1zM705 348h1v1h-1zM699 360h1v1h-1zM690 360h1v1h-1zM699 331h1v1h-1zM690 358h1v1h-1zM697 368h1v1h-1zM696 369h1v1h-1zM697 392h1v1h-1zM683 338h1v1h-1zM716 341h1v1h-1zM703 382h1v1h-1zM683 351h1v1h-1zM694 370h1v1h-1zM709 385h1v1h-1zM686 372h1v1h-1zM690 383h1v1h-1zM713 357h1v1h-1zM702 371h1v1h-1zM662 361h1v1h-1zM695 367h1v1h-1zM708 363h1v1h-1zM698 362h1v1h-1zM694 376h1v1h-1zM700 392h1v1h-1zM697 368h1v1h-1zM703 371h1v1h-1zM682 366h1v1h-1zM723 359h1v1h-1zM657 352h1v1h-1zM671 376h1v1h-1zM699 369h1v1h-1zM695 354h1v1h-1zM702 388h1v1h-1zM686 316h1v1h-1zM702 366h1v1h-1zM701 395h1v1h-1zM693 347h1v1h-1zM697 367h1v1h-1zM694 362h1v1h-1zM697 364h1v1h-1zM706 374h1v1h-1zM715 357h1v1h-1zM699 372h1v1h-1zM687 392h1v1h-1zM693 381h1v1h-1zM702 377h1v1h-1zM681 366h1v1h-1zM682 387h1v1h-1zM695 405h1v1h-1zM663 364h1v1h-1zM702 368h1v1h-1zM704 392h1v1h-1zM719 372h1v1h-1zM670 362h1v1h-1zM679 351h1v1h-1zM694 374h1v1h-1zM678 381h1v1h-1zM685 316h1v1h-1zM694 372h1v1h-1zM693 360h1v1h-1zM637 340h1v1h-1zM708 368h1v1h-1zM698 366h1v1h-1zM738 326h1v1h-1zM696 334h1v1h-1zM718 410h1v1h-1zM729 359h1v1h-1zM712 393h1v1h-1zM715 366h1v1h-1zM712 364h1v1h-1zM706 398h1v1h-1zM692 359h1v1h-1zM705 372h1v1h-1zM700 353h1v1h-1z"/><path fill="#fff" fill-opacity="0.9" d="M685 321h1v1h-1zM694 369h1v1h-1zM687 369h1v1h-1zM704 368h1v1h-1zM740 361h1v1h-1zM709 355h1v1h-1zM720 374h1v1h-1zM707 366h1v1h-1zM705 375h1v1h-1zM718 332h1v1h-1zM692 413h1v1h-1zM663 376h1v1h-1zM691 410h1v1h-1zM701 336h1v1h-1zM737 357h1v1h-1zM645 350h1v1h-1zM695 367h1v1h-1zM702 351h1v1h-1zM666 416h1v1h-1zM698 368h1v1h-1zM691 387h1v1h-1zM724 358h1v1h-1zM699 370h1v1h-1zM700 354h1v1h-1zM681 380h1v1h-1zM732 337h1v1h-1zM697 368h1v1h-1zM701 343h1v1h-1zM676 363h1v1h-1zM684 387h1v1h-1zM679 353h1v1h-1zM689 400h1v1h-1zM668 367h1v1h-1zM735 311h1v1h-1zM694 328h1v1h-1zM694 383h1v1h-1zM701 367h1v1h-1zM702 371h1v1h-1zM654 364h1v1h-1zM776 375h1v1h-1zM705 376h1v1h-1zM685 351h1v1h-1zM701 386h1v1h-1zM695 372h1v1h-1zM710 377h1v1h-1zM687 366h1v1h-1zM696 367h1v1h-1zM665 317h1v1h-1zM716 376h1v1h-1zM677 376h1v1h-1zM681 326h1v1h-1zM704 362h1v1h-1zM689 349h1v1h-1zM697 367h1v1h-1zM698 363h1v1h-1zM716 343h1v1h-1zM692 369h1v1h-1zM692 345h1v1h-1zM702 335h1v1h-1zM680 353h1v1h-1zM688 358h1v1h-1zM704 362h1v1h-1zM713 317h1v1h-1zM747 377h1v1h-1zM688 369h1v1h-1zM710 351h1v1h-1zM698 368h1v1h-1zM706 374h1v1h-1zM714 345h1v1h-1zM700 375h1v1h-1zM699 366h1v1h-1zM691 357h1v1h-1zM706 358h1v1h-1zM674 385h1v1h-1zM697 368h1v1h-1zM713 343h1v1h-1zM688 363h1v1h-1zM731 372h1v1h-1zM698 369h1v1h-1zM732 308h1v1h-1zM669 401h1v1h-1zM722 354h1v1h-1zM719 383h1v1h-1zM674 381h1v1h-1zM693 355h1v1h-1zM706 373h1v1h-1zM690 368h1v1h-1zM697 382h1v1h-1zM747 364h1v1h-1zM712 359h1v1h-1zM702 369h1v1h-1zM698 366h1v1h-1zM707 378h1v1h-1zM692 413h1v1h-1zM694 391h1v1h-1zM647 337h1v1h-1zM668 405h1v1h-1zM699 372h1v1h-1zM705 336h1v1h-1zM672 372h1v1h-1zM719 360h1v1h-1zM713 344h1v1h-1zM697 369h1v1h-1zM688 369h1v1h-1zM713 379h1v1h-1zM689 358h1v1h-1zM696 365h1v1h-1zM713 371h1v1h-1zM724 334h1v1h-1zM679 380h1v1h-1zM658 382h1v1h-1zM697 366h1v1h-1zM705 360h1v1h-1zM697 371h1v1h-1zM720 364h1v1h-1zM698 371h1v1h-1zM713 330h1v1h-1zM755 353h1v1h-1zM677 368h1v1h-1zM723 323h1v1h-1zM699 364h1v1h-1zM670 373h1v1h-1zM706 372h1v1h-1zM710 354h1v1h-1zM708 378h1v1h-1zM693 364h1v1h-1zM726 378h1v1h-1zM693 321h1v1h-1zM707 412h1v1h-1zM699 367h1v1h-1zM694 364h1v1h-1zM671 373h1v1h-1zM700 360h1v1h-1zM726 385h1v1h-1zM695 373h1v1h-1zM695 372h1v1h-1zM659 359h1v1h-1zM699 385h1v1h-1zM707 374h1v1h-1zM686 402h1v1h-1zM651 356h1v1h-1zM749 394h1v1h-1zM686 363h1v1h-1zM731 353h1v1h-1zM718 371h1v1h-1zM693 365h1v1h-1zM700 364h1v1h-1zM719 377h1v1h-1zM700 370h1v1h-1zM703 392h1v1h-1zM655 331h1v1h-1zM699 358h1v1h-1zM666 322h1v1h-1zM694 392h1v1h-1zM685 393h1v1h-1zM697 364h1v1h-1zM700 368h1v1h-1zM702 357h1v1h-1zM706 367h1v1h-1zM697 369h1v1h-1zM712 394h1v1h-1zM704 370h1v1h-1zM741 373h1v1h-1zM695 364h1v1h-1zM707 359h1v1h-1zM701 364h1v1h-1zM695 433h1v1h-1zM693 387h1v1h-1zM658 371h1v1h-1zM718 363h1v1h-1zM705 390h1v1h-1zM692 374h1v1h-1zM672 395h1v1h-1zM694 371h1v1h-1zM697 377h1v1h-1zM713 355h1v1h-1zM693 379h1v1h-1zM709 366h1v1h-1zM693 362h1v1h-1zM687 342h1v1h-1zM697 368h1v1h-1zM704 357h1v1h-1zM671 358h1v1h-1zM639 417h1v1h-1zM691 355h1v1h-1zM685 397h1v1h-1zM699 319h1v1h-1zM720 357h1v1h-1zM640 390h1v1h-1zM688 367h1v1h-1zM706 342h1v1h-1zM699 373h1v1h-1zM698 368h1v1h-1zM687 369h1v1h-1zM689 354h1v1h-1zM681 362h1v1h-1zM697 371h1v1h-1zM690 391h1v1h-1zM724 416h1v1h-1zM623 337h1v1h-1zM648 366h1v1h-1zM692 396h1v1h-1zM697 365h1v1h-1zM711 395h1v1h-1zM680 359h1v1h-1zM708 391h1v1h-1zM653 352h1v1h-1zM699 390h1v1h-1zM695 369h1v1h-1zM710 365h1v1h-1zM698 318h1v1h-1zM701 360h1v1h-1zM682 345h1v1h-1zM693 368h1v1h-1zM675 374h1v1h-1zM687 379h1v1h-1zM686 365h1v1h-1zM695 364h1v1h-1zM722 394h1v1h-1zM717 375h1v1h-1zM723 340h1v1h-1zM689 372h1v1h-1zM699 364h1v1h-1zM682 386h1v1h-1zM697 367h1v1h-1zM673 372h1v1h-1zM717 351h1v1h-1zM731 363h1v1h-1zM697 370h1v1h-1zM676 361h1v1h-1zM679 364h1v1h-1zM688 360h1v1h-1zM711 370h1v1h-1zM702 345h1v1h-1zM654 357h1v1h-1zM702 376h1v1h-1zM690 354h1v1h-1zM701 365h1v1h-1zM696 369h1v1h-1zM688 378h1v1h-1zM688 367h1v1h-1zM698 366h1v1h-1zM699 371h1v1h-1zM695 371h1v1h-1zM697 369h1v1h-1zM696 367h1v1h-1zM704 380h1v1h-1zM680 368h1v1h-1zM697 365h1v1h-1zM697 369h1v1h-1zM699 371h1v1h-1zM666 419h1v1h-1zM696 354h1v1h-1zM701 370h1v1h-1zM738 349h1v1h-1zM706 391h1v1h-1zM712 385h1v1h-1zM718 356h1v1h-1zM680 405h1v1h-1zM682 363h1v1h-1zM690 373h1v1h-1zM689 380h1v1h-1zM700 372h1v1h-1zM686 372h1v1h-1zM697 348h1v1h-1zM683 363h1v1h-1zM696 368h1v1h-1zM723 386h1v1h-1zM687 360h1v1h-1zM725 343h1v1h-1zM734 419h1v1h-1zM718 370h1v1h-1zM685 322h1v1h-1zM696 367h1v1h-1zM702 379h1v1h-1zM704 369h1v1h-1zM721 400h1v1h-1zM719 342h1v1h-1zM720 412h1v1h-1zM752 347h1v1h-1zM644 333h1v1h-1zM717 364h1v1h-1zM679 369h1v1h-1zM723 377h1v1h-1zM723 317h1v1h-1zM694 369h1v1h-1zM700 371h1v1h-1zM681 361h1v1h-1zM695 369h1v1h-1zM681 358h1v1h-1zM631 396h1v1h-1zM697 353h1v1h-1zM675 392h1v1h-1zM696 361h1v1h-1zM700 360h1v1h-1zM691 394h1v1h-1zM718 370h1v1h-1zM662 390h1v1h-1zM705 375h1v1h-1zM662 375h1v1h-1zM710 356h1v1h-1zM681 372h1v1h-1zM706 344h1v1h-1zM688 379h1v1h-1zM699 364h1v1h-1zM663 383h1v1h-1zM720 368h1v1h-1zM764 329h1v1h-1zM715 374h1v1h-1zM686 395h1v1h-1zM679 351h1v1h-1zM668 355h1v1h-1zM676 401h1v1h-1zM696 367h1v1h-1zM672 390h1v1h-1zM673 372h1v1h-1zM730 392h1v1h-1zM727 349h1v1h-1zM689 380h1v1h-1zM702 389h1v1h-1zM701 400h1v1h-1zM716 342h1v1h-1zM708 328h1v1h-1zM697 368h1v1h-1zM700 357h1v1h-1zM702 368h1v1h-1zM674 370h1v1h-1zM697 368h1v1h-1zM681 352h1v1h-1zM694 366h1v1h-1zM703 368h1v1h-1zM702 350h1v1h-1zM686 351h1v1h-1zM689 371h1v1h-1zM694 365h1v1h-1zM697 370h1v1h-1zM719 377h1v1h-1zM689 366h1v1h-1zM724 352h1v1h-1zM697 367h1v1h-1zM668 349h1v1h-1zM701 365h1v1h-1zM713 367h1v1h-1zM633 333h1v1h-1zM705 396h1v1h-1zM701 364h1v1h-1zM710 348h1v1h-1zM701 359h1v1h-1zM694 370h1v1h-1zM700 375h1v1h-1zM655 350h1v1h-1zM688 378h1v1h-1zM693 378h1v1h-1zM690 368h1v1h-1zM700 369h1v1h-1zM718 385h1v1h-1zM719 363h1v1h-1zM706 372h1v1h-1zM696 357h1v1h-1zM682 386h1v1h-1zM706 415h1v1h-1zM697 368h1v1h-1zM713 371h1v1h-1z"/><path fill="#fff" fill-opacity="1" d="M693 372h1v1h-1zM713 361h1v1h-1zM691 365h1v1h-1zM674 406h1v1h-1zM692 367h1v1h-1zM700 357h1v1h-1zM704 353h1v1h-1zM696 360h1v1h-1zM696 369h1v1h-1zM706 355h1v1h-1zM693 338h1v1h-1zM704 364h1v1h-1zM697 377h1v1h-1zM720 365h1v1h-1zM693 332h1v1h-1zM697 368h1v1h-1zM719 407h1v1h-1zM694 364h1v1h-1zM707 396h1v1h-1zM697 368h1v1h-1zM723 353h1v1h-1zM679 355h1v1h-1zM691 372h1v1h-1zM693 367h1v1h-1zM702 371h1v1h-1zM699 374h1v1h-1zM672 371h1v1h-1zM729 390h1v1h-1zM699 376h1v1h-1zM689 358h1v1h-1zM701 362h1v1h-1zM696 359h1v1h-1zM709 336h1v1h-1zM695 369h1v1h-1zM668 348h1v1h-1zM696 345h1v1h-1zM725 353h1v1h-1zM694 355h1v1h-1zM706 368h1v1h-1zM662 368h1v1h-1zM706 374h1v1h-1zM717 367h1v1h-1zM641 352h1v1h-1zM695 384h1v1h-1zM738 366h1v1h-1zM699 367h1v1h-1zM689 379h1v1h-1zM720 330h1v1h-1zM706 352h1v1h-1zM695 377h1v1h-1zM703 374h1v1h-1zM720 371h1v1h-1zM700 375h1v1h-1zM693 376h1v1h-1zM701 331h1v1h-1zM686 368h1v1h-1zM688 380h1v1h-1zM640 369h1v1h-1zM695 356h1v1h-1zM663 376h1v1h-1zM701 378h1v1h-1zM697 367h1v1h-1zM679 398h1v1h-1zM707 362h1v1h-1zM710 372h1v1h-1zM699 381h1v1h-1zM684 350h1v1h-1zM743 363h1v1h-1zM699 367h1v1h-1zM703 358h1v1h-1zM708 358h1v1h-1zM723 372h1v1h-1zM696 366h1v1h-1zM702 316h1v1h-1zM712 362h1v1h-1zM710 324h1v1h-1zM716 349h1v1h-1zM694 368h1v1h-1zM696 364h1v1h-1zM683 363h1v1h-1zM699 363h1v1h-1zM661 391h1v1h-1zM683 346h1v1h-1zM688 365h1v1h-1zM708 346h1v1h-1zM702 381h1v1h-1zM684 358h1v1h-1zM705 366h1v1h-1zM696 397h1v1h-1zM697 368h1v1h-1zM693 375h1v1h-1zM715 337h1v1h-1zM664 346h1v1h-1zM696 374h1v1h-1zM682 398h1v1h-1zM713 362h1v1h-1zM709 353h1v1h-1zM676 355h1v1h-1zM694 372h1v1h-1zM688 373h1v1h-1zM709 384h1v1h-1zM675 386h1v1h-1zM673 336h1v1h-1zM682 355h1v1h-1zM694 367h1v1h-1zM709 388h1v1h-1zM693 376h1v1h-1zM694 365h1v1h-1zM699 378h1v1h-1zM693 372h1v1h-1zM717 364h1v1h-1zM704 359h1v1h-1zM677 388h1v1h-1zM707 372h1v1h-1zM697 362h1v1h-1zM694 351h1v1h-1zM687 387h1v1h-1zM695 368h1v1h-1zM672 360h1v1h-1zM696 367h1v1h-1zM698 370h1v1h-1zM675 359h1v1h-1zM702 369h1v1h-1zM703 349h1v1h-1zM678 359h1v1h-1zM714 380h1v1h-1zM686 367h1v1h-1zM666 355h1v1h-1zM693 349h1v1h-1zM699 370h1v1h-1zM705 343h1v1h-1zM665 344h1v1h-1zM706 387h1v1h-1zM699 369h1v1h-1zM684 366h1v1h-1zM694 371h1v1h-1zM698 374h1v1h-1zM692 366h1v1h-1zM694 332h1v1h-1zM660 368h1v1h-1zM703 383h1v1h-1zM700 377h1v1h-1zM703 377h1v1h-1zM706 395h1v1h-1zM670 371h1v1h-1zM697 324h1v1h-1zM687 378h1v1h-1zM735 398h1v1h-1zM691 365h1v1h-1zM675 324h1v1h-1zM735 409h1v1h-1zM695 365h1v1h-1zM687 381h1v1h-1zM695 356h1v1h-1zM693 379h1v1h-1zM690 354h1v1h-1zM703 367h1v1h-1zM700 382h1v1h-1zM692 375h1v1h-1zM693 397h1v1h-1zM696 359h1v1h-1zM691 356h1v1h-1zM663 364h1v1h-1zM714 407h1v1h-1zM694 364h1v1h-1zM681 386h1v1h-1zM699 366h1v1h-1zM694 367h1v1h-1zM718 378h1v1h-1zM708 378h1v1h-1zM696 372h1v1h-1zM673 369h1v1h-1zM678 369h1v1h-1zM694 361h1v1h-1zM722 390h1v1h-1zM679 388h1v1h-1zM661 381h1v1h-1zM663 360h1v1h-1zM700 403h1v1h-1zM728 374h1v1h-1zM717 351h1v1h-1zM682 366h1v1h-1zM680 358h1v1h-1zM695 381h1v1h-1zM688 356h1v1h-1zM696 368h1v1h-1zM683 375h1v1h-1zM695 366h1v1h-1zM725 368h1v1h-1zM693 367h1v1h-1zM711 351h1v1h-1zM681 350h1v1h-1zM692 376h1v1h-1zM710 359h1v1h-1zM704 350h1v1h-1zM697 440h1v1h-1zM737 360h1v1h-1zM769 353h1v1h-1zM699 390h1v1h-1zM695 371h1v1h-1zM689 357h1v1h-1zM677 365h1v1h-1zM721 374h1v1h-1zM710 377h1v1h-1zM671 368h1v1h-1zM690 363h1v1h-1zM731 362h1v1h-1zM696 358h1v1h-1zM695 379h1v1h-1zM668 339h1v1h-1zM697 332h1v1h-1zM704 362h1v1h-1zM697 367h1v1h-1zM715 365h1v1h-1zM690 349h1v1h-1zM692 355h1v1h-1zM691 374h1v1h-1zM693 365h1v1h-1zM681 364h1v1h-1zM680 335h1v1h-1zM704 392h1v1h-1zM698 409h1v1h-1zM695 388h1v1h-1zM700 361h1v1h-1zM711 385h1v1h-1zM698 365h1v1h-1zM715 365h1v1h-1zM707 354h1v1h-1zM700 368h1v1h-1zM698 368h1v1h-1zM691 377h1v1h-1zM721 400h1v1h-1zM700 394h1v1h-1zM694 381h1v1h-1zM691 364h1v1h-1zM708 371h1v1h-1zM670 354h1v1h-1zM732 352h1v1h-1zM692 362h1v1h-1zM729 368h1v1h-1zM694 370h1v1h-1zM697 370h1v1h-1zM691 384h1v1h-1zM719 342h1v1h-1zM692 356h1v1h-1zM691 303h1v1h-1zM683 362h1v1h-1zM673 389h1v1h-1zM694 396h1v1h-1zM700 371h1v1h-1zM698 369h1v1h-1zM711 372h1v1h-1zM702 378h1v1h-1zM668 373h1v1h-1zM659 330h1v1h-1zM727 388h1v1h-1zM697 373h1v1h-1zM689 336h1v1h-1zM631 355h1v1h-1zM732 413h1v1h-1zM749 361h1v1h-1zM695 360h1v1h-1zM727 367h1v1h-1zM693 395h1v1h-1zM702 348h1v1h-1zM703 381h1v1h-1zM717 391h1v1h-1zM677 378h1v1h-1zM691 354h1v1h-1zM696 352h1v1h-1zM722 376h1v1h-1zM699 367h1v1h-1zM666 381h1v1h-1zM668 373h1v1h-1zM695 352h1v1h-1zM700 371h1v1h-1zM679 352h1v1h-1zM704 305h1v1h-1zM695 366h1v1h-1zM696 371h1v1h-1zM703 373h1v1h-1zM690 376h1v1h-1zM697 368h1v1h-1zM684 380h1v1h-1zM701 364h1v1h-1zM721 350h1v1h-1zM683 356h1v1h-1zM699 369h1v1h-1zM706 381h1v1h-1zM696 357h1v1h-1zM664 351h1v1h-1zM697 369h1v1h-1zM714 387h1v1h-1zM690 357h1v1h-1zM702 364h1v1h-1zM715 375h1v1h-1zM641 369h1v1h-1zM696 380h1v1h-1zM684 378h1v1h-1zM699 361h1v1h-1zM695 370h1v1h-1zM703 384h1v1h-1zM652 379h1v1h-1zM698 378h1v1h-1zM638 410h1v1h-1zM705 366h1v1h-1zM710 361h1v1h-1zM665 377h1v1h-1zM695 369h1v1h-1zM689 370h1v1h-1zM722 338h1v1h-1zM699 349h1v1h-1zM723 343h1v1h-1zM699 355h1v1h-1zM666 353h1v1h-1zM700 357h1v1h-1zM704 364h1v1h-1zM672 341h1v1h-1zM683 362h1v1h-1zM663 359h1v1h-1zM700 368h1v1h-1zM701 363h1v1h-1zM687 363h1v1h-1zM695 362h1v1h-1zM697 369h1v1h-1zM696 368h1v1h-1zM682 388h1v1h-1zM755 365h1v1h-1zM700 383h1v1h-1zM703 369h1v1h-1zM697 366h1v1h-1zM690 367h1v1h-1zM690 363h1v1h-1zM723 375h1v1h-1zM708 387h1v1h-1zM700 367h1v1h-1zM687 368h1v1h-1zM728 364h1v1h-1zM698 354h1v1h-1zM700 365h1v1h-1zM714 344h1v1h-1zM688 363h1v1h-1zM714 387h1v1h-1zM722 386h1v1h-1zM686 406h1v1h-1zM702 347h1v1h-1zM727 333h1v1h-1zM681 365h1v1h-1zM697 369h1v1h-1zM703 372h1v1h-1zM654 378h1v1h-1zM682 351h1v1h-1zM719 379h1v1h-1zM704 356h1v1h-1zM698 378h1v1h-1zM697 372h1v1h-1zM699 351h1v1h-1zM689 406h1v1h-1zM704 358h1v1h-1zM694 354h1v1h-1zM704 375h1v1h-1zM690 365h1v1h-1zM682 369h1v1h-1zM697 371h1v1h-1zM699 348h1v1h-1zM707 351h1v1h-1z"/><ellipse cx="697" cy="368" rx="46" ry="46" fill="url(#gal)"/><circle cx="413" cy="190" r="5.25" fill="url(#st)"/><circle cx="413" cy="190" r="1.9250000000000003" fill="#fff"/><path d="M403.9 193.185L422.1 186.815M409.815 180.9L416.185 199.1" stroke="#fff" stroke-opacity="0.75" stroke-width="0.7"/><circle cx="761" cy="294" r="6.0" fill="url(#st)"/><circle cx="761" cy="294" r="2.2" fill="#fff"/><path d="M750.6 297.64L771.4 290.36M757.36 283.6L764.64 304.4" stroke="#fff" stroke-opacity="0.75" stroke-width="0.7"/><circle cx="722" cy="469" r="5.25" fill="url(#st)"/><circle cx="722" cy="469" r="1.9250000000000003" fill="#fff"/><path d="M712.9 472.185L731.1 465.815M718.815 459.9L725.185 478.1" stroke="#fff" stroke-opacity="0.75" stroke-width="0.7"/><circle cx="574" cy="458" r="4.5" fill="url(#st)"/><circle cx="574" cy="458" r="1.6500000000000001" fill="#fff"/><path d="M566.2 460.73L581.8 455.27M571.27 450.2L576.73 465.8" stroke="#fff" stroke-opacity="0.75" stroke-width="0.7"/><circle cx="495" cy="272" r="3.75" fill="url(#st)"/><circle cx="495" cy="272" r="1.375" fill="#fff"/><path d="M488.5 274.275L501.5 269.725M492.725 265.5L497.275 278.5" stroke="#fff" stroke-opacity="0.75" stroke-width="0.7"/><circle cx="823" cy="301" r="3.3000000000000003" fill="url(#st)"/><circle cx="823" cy="301" r="1.2100000000000002" fill="#fff"/><circle cx="900" cy="295" r="3.3000000000000003" fill="url(#st)"/><circle cx="900" cy="295" r="1.2100000000000002" fill="#fff"/><circle cx="904" cy="231" r="3.75" fill="url(#st)"/><circle cx="904" cy="231" r="1.375" fill="#fff"/><circle cx="602" cy="488" r="3.0" fill="url(#st)"/><circle cx="602" cy="488" r="1.1" fill="#fff"/><circle cx="621" cy="524" r="3.0" fill="url(#st)"/><circle cx="621" cy="524" r="1.1" fill="#fff"/><circle cx="420" cy="414" r="3.0" fill="url(#st)"/><circle cx="420" cy="414" r="1.1" fill="#fff"/><circle cx="836" cy="493" r="3.0" fill="url(#st)"/><circle cx="836" cy="493" r="1.1" fill="#fff"/><circle cx="871" cy="469" r="2.7" fill="url(#st)"/><circle cx="871" cy="469" r="0.9900000000000001" fill="#fff"/><circle cx="810" cy="445" r="2.7" fill="url(#st)"/><circle cx="810" cy="445" r="0.9900000000000001" fill="#fff"/><circle cx="977" cy="510" r="3.0" fill="url(#st)"/><circle cx="977" cy="510" r="1.1" fill="#fff"/><circle cx="980" cy="516" r="2.25" fill="url(#st)"/><circle cx="980" cy="516" r="0.8250000000000001" fill="#fff"/><circle cx="642" cy="312" r="2.25" fill="url(#st)"/><circle cx="642" cy="312" r="0.8250000000000001" fill="#fff"/><circle cx="545" cy="207" r="2.25" fill="url(#st)"/><circle cx="545" cy="207" r="0.8250000000000001" fill="#fff"/><circle cx="438" cy="335" r="2.25" fill="url(#st)"/><circle cx="438" cy="335" r="0.8250000000000001" fill="#fff"/><circle cx="960" cy="200" r="2.25" fill="url(#st)"/><circle cx="960" cy="200" r="0.8250000000000001" fill="#fff"/><circle cx="590" cy="201" r="2.4000000000000004" fill="url(#st)"/><circle cx="590" cy="201" r="0.8800000000000001" fill="#fff"/><circle cx="540" cy="275" r="2.25" fill="url(#st)"/><circle cx="540" cy="275" r="0.8250000000000001" fill="#fff"/><circle cx="466" cy="313" r="2.0999999999999996" fill="url(#st)"/><circle cx="466" cy="313" r="0.77" fill="#fff"/><ellipse cx="688" cy="206" rx="2" ry="4.5" transform="rotate(-30 688 206)" fill="#fff" fill-opacity="0.85"/><path d="M380.5 346.5 L383 346 L400.5 368.5 L395.5 369.5Z" fill="#ffff00"/><path d="M398 369 L431 408 L500 490.5" fill="none" stroke="#ffff00" stroke-width="3"/><path d="M500 490.5 L574.5 581" fill="none" stroke="#ffff00" stroke-width="4" stroke-dasharray="5 1.2"/><path d="M380 344 L398.5 368.5 L432 407 L501 489.5 L575.5 580" fill="none" stroke="#f0f0d0" stroke-width="0.8" stroke-opacity="0.8"/><path d="M1009 177.5 L606.5 580" stroke="#d0c820" stroke-width="1.35" stroke-dasharray="24 4.5"/><path d="M378 392.2 L1009 341.7" stroke="#ffff00" stroke-width="41.5" stroke-dasharray="125.2 41.4"/><path d="M460 162 L900 602" stroke="#ffff00" stroke-width="13" stroke-dasharray="38 12.93"/><circle cx="460" cy="162" r="4" fill="#ffff60" stroke="#fff" stroke-width="0.8"/><circle cx="379" cy="344" r="4" fill="#ffff00" stroke="#fff" stroke-width="0.8"/><circle cx="1009" cy="176" r="4" fill="#ffff00"/><circle cx="1009" cy="342" r="4" fill="#ffff00"/><circle cx="378" cy="391" r="4" fill="none" stroke="#fff" stroke-width="0.8"/></svg><svg class="a" style="left:900px;top:0px" width="121" height="45"><path d="M20 12.5 H28" stroke="#e8e0de" stroke-width="1"/><rect x="57.5" y="8.5" width="8" height="8" fill="none" stroke="#e8e0de" stroke-width="1" rx="1"/><path d="M96 8.5 L105 17.5 M105 8.5 L96 17.5" stroke="#e8e0de" stroke-width="1"/></svg><svg class="a" style="left:890px;top:0px" width="131" height="45" font-family="Liberation Serif"><defs><mask id="lg" maskUnits="userSpaceOnUse" x="0" y="0" width="131" height="45"><rect width="131" height="45" fill="#000"/><g fill="#fff" stroke="#000" stroke-width="0.45"><text x="12.5" y="32" font-size="25.5" textLength="19" lengthAdjust="spacingAndGlyphs">C</text><text x="28.5" y="32" font-size="30" textLength="15.5" lengthAdjust="spacingAndGlyphs">o</text><text x="41.3" y="32" font-size="33" textLength="18.5" lengthAdjust="spacingAndGlyphs">e</text><text x="59.5" y="32" font-size="23.5" textLength="15.5" lengthAdjust="spacingAndGlyphs">L</text><text x="71.5" y="32" font-size="23.5" textLength="25.5" lengthAdjust="spacingAndGlyphs">V</text><text x="91" y="32" font-size="23.5" textLength="21.5" lengthAdjust="spacingAndGlyphs">M</text></g></mask></defs><rect width="131" height="45" fill="#fff" mask="url(#lg)"/></svg><div class="a" style="left:951px;top:34px;font-size:5px;line-height:6px;color:#3a3a3a;letter-spacing:1.9px;white-space:nowrap">ASTRONOMIA</div></body></html>
